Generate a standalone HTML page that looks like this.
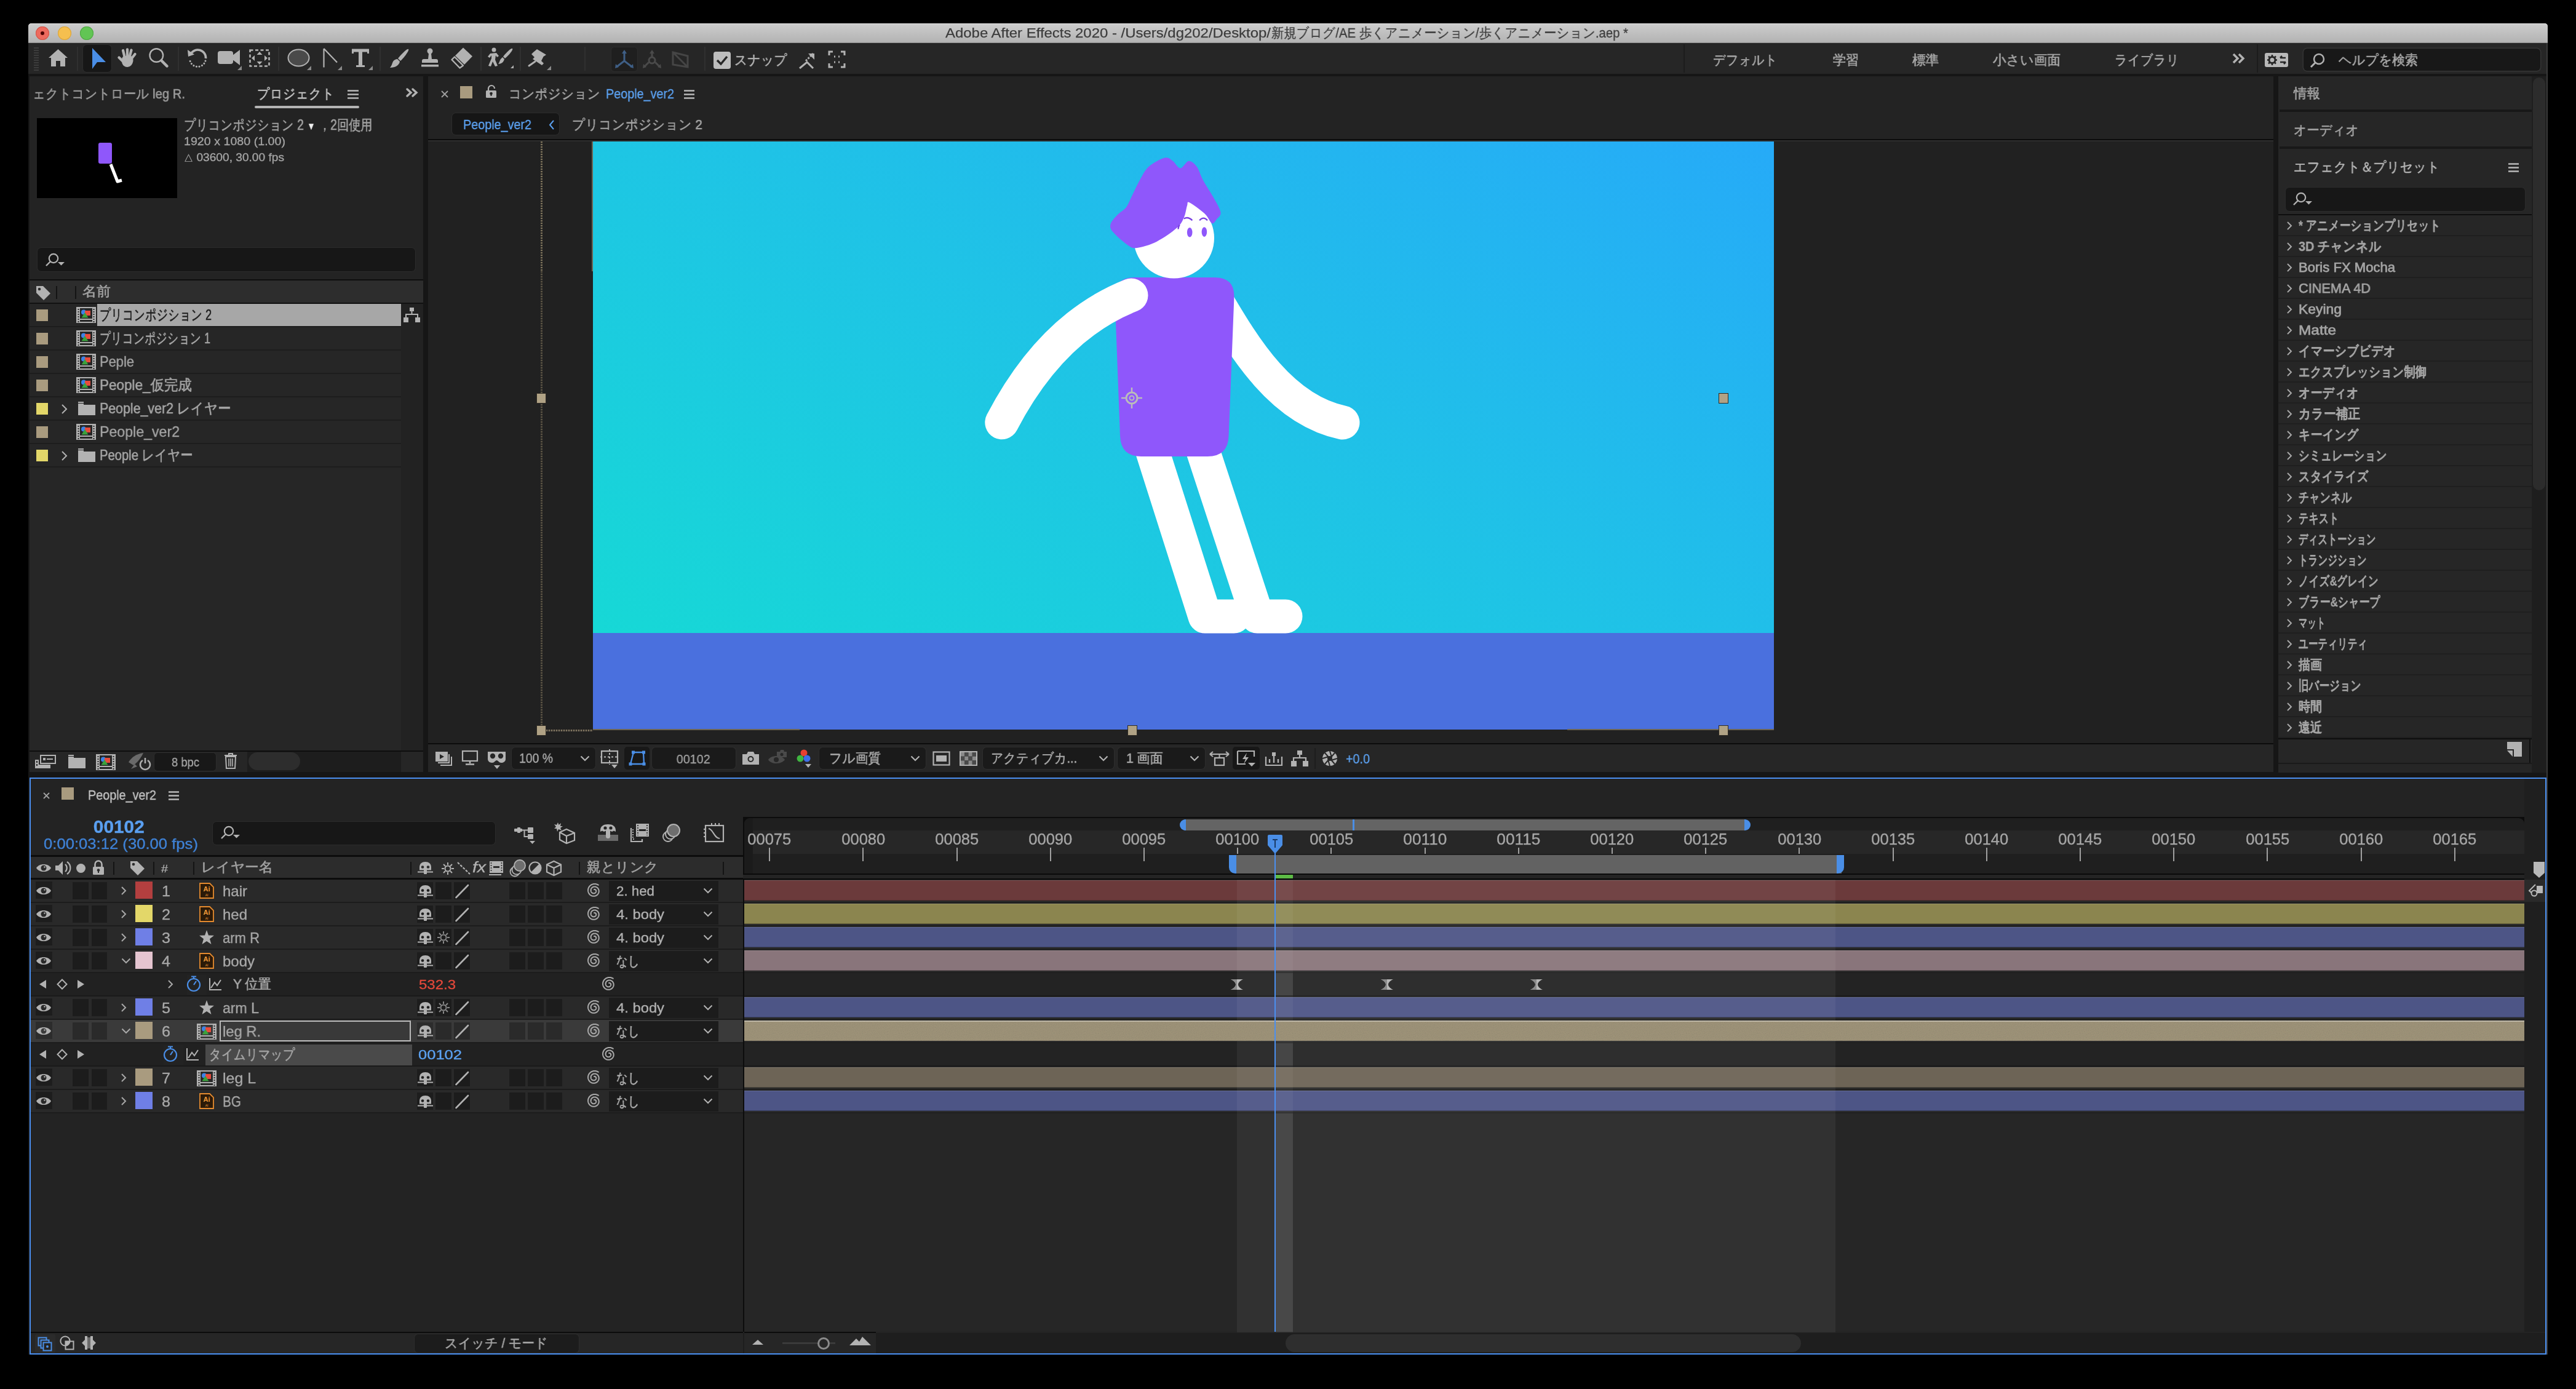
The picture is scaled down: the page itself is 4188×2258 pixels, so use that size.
<!DOCTYPE html>
<html lang="ja"><head><meta charset="utf-8"><title>After Effects</title><style>
html,body{margin:0;padding:0}
body{width:4188px;height:2258px;background:#000;position:relative;overflow:hidden;font-family:"Liberation Sans",sans-serif}
.a{position:absolute}
.t{position:absolute;white-space:nowrap;-webkit-text-stroke:0.35px currentColor;will-change:transform}
svg{overflow:visible}
</style></head><body>
<div class="a" style="left:46px;top:38px;width:4096px;height:2164px;background:#161616;border-radius:5px 5px 0 0;"></div>
<div class="a" style="left:46px;top:38px;width:4096px;height:32px;background:linear-gradient(#cdcdcd,#b2b2b2);border-radius:5px 5px 0 0;box-shadow:inset 0 1px 0 #e2e2e2;"></div>
<div class="a" style="left:46px;top:69px;width:4096px;height:1px;background:#8e8e8e;"></div>
<div class="a" style="left:58px;top:43px;width:22px;height:22px;background:#ed6a5e;border-radius:50%;box-shadow:inset 0 0 0 1px #d25548;"></div>
<div class="a" style="left:94px;top:43px;width:22px;height:22px;background:#f5bf4f;border-radius:50%;box-shadow:inset 0 0 0 1px #d9a43c;"></div>
<div class="a" style="left:130px;top:43px;width:22px;height:22px;background:#62c554;border-radius:50%;box-shadow:inset 0 0 0 1px #50a843;"></div>
<div class="a" style="left:66px;top:51px;width:6px;height:6px;background:#4d0000;border-radius:50%;"></div>
<div class="t" id="t0" style="left:1537.0px;top:43.0px;font-size:22px;line-height:22px;color:#3c3c3c;transform:scaleX(1.0877);transform-origin:left center;-webkit-text-stroke:0.25px currentColor;">Adobe After Effects 2020 - /Users/dg202/Desktop/</div>
<div class="t" id="t1" style="left:2067.0px;top:43.0px;font-size:22px;line-height:22px;color:#3c3c3c;-webkit-text-stroke:0.6px currentColor;transform:scaleX(0.9233);transform-origin:left center;-webkit-text-stroke:0.3px currentColor;">新規ブログ/AE 歩くアニメーション/歩くアニメーション.aep *</div>
<div class="a" style="left:46px;top:70px;width:4096px;height:50px;background:#262626;"></div>
<div class="a" style="left:55px;top:77px;width:8px;height:2px;background:#3c3c3c;"></div>
<div class="a" style="left:55px;top:81px;width:8px;height:2px;background:#3c3c3c;"></div>
<div class="a" style="left:55px;top:85px;width:8px;height:2px;background:#3c3c3c;"></div>
<div class="a" style="left:55px;top:89px;width:8px;height:2px;background:#3c3c3c;"></div>
<div class="a" style="left:55px;top:93px;width:8px;height:2px;background:#3c3c3c;"></div>
<div class="a" style="left:55px;top:97px;width:8px;height:2px;background:#3c3c3c;"></div>
<div class="a" style="left:55px;top:101px;width:8px;height:2px;background:#3c3c3c;"></div>
<div class="a" style="left:55px;top:105px;width:8px;height:2px;background:#3c3c3c;"></div>
<div class="a" style="left:55px;top:109px;width:8px;height:2px;background:#3c3c3c;"></div>
<div class="a" style="left:55px;top:113px;width:8px;height:2px;background:#3c3c3c;"></div>
<svg class="a" style="left:78px;top:79px;" width="33" height="30" viewBox="0 0 33 30"><path d="M16.5 1 L32 15 L28 15 L28 29 L20 29 L20 20 L13 20 L13 29 L5 29 L5 15 L1 15 Z" fill="#b2b2b2"/></svg>
<div class="a" style="left:125px;top:76px;width:2px;height:39px;background:#303030;"></div>
<div class="a" style="left:135px;top:73px;width:46px;height:44px;background:#171717;border-radius:6px;box-shadow:0 0 0 1px #2c2c2c;"></div>
<svg class="a" style="left:148px;top:78px;" width="25" height="34" viewBox="0 0 25 34"><path d="M2 0 L24 23 L10 23 L2 34 Z" fill="#4a8ee6"/></svg>
<svg class="a" style="left:191px;top:78px;" width="33" height="32" viewBox="0 0 33 32"><g stroke="#b2b2b2" stroke-width="4.3" stroke-linecap="round"><path d="M9 22 L2.5 15.5"/><path d="M11.5 14 L9 4"/><path d="M16 13 L16 2.5"/><path d="M20 13 L22.5 3.5"/><path d="M23 17 L28.5 10"/></g><path d="M7 18 Q8 13 12 13 L22 13 Q26 15 25.5 21 Q24 30 16.5 31 Q10 31 7.5 25 Z" fill="#b2b2b2"/></svg>
<svg class="a" style="left:241px;top:78px;" width="34" height="34" viewBox="0 0 34 34"><circle cx="13.3" cy="12" r="10.8" fill="none" stroke="#b2b2b2" stroke-width="2.4"/><path d="M21.5 20.5 L30.5 29.5" stroke="#b2b2b2" stroke-width="4.5" stroke-linecap="round"/></svg>
<div class="a" style="left:289px;top:76px;width:2px;height:39px;background:#303030;"></div>
<svg class="a" style="left:305px;top:78px;" width="34" height="34" viewBox="0 0 34 34"><path d="M5 10 A13 13 0 0 1 29.5 17" fill="none" stroke="#b2b2b2" stroke-width="3.6"/><path d="M0 3 L11 10.5 L1 14 Z" fill="#b2b2b2"/><path d="M29 21 A13 13 0 0 1 4 21" fill="none" stroke="#b2b2b2" stroke-width="3" stroke-dasharray="0.1 4.6" stroke-linecap="round"/></svg>
<svg class="a" style="left:354px;top:78px;" width="40" height="36" viewBox="0 0 40 36"><rect x="0" y="5" width="25" height="21" rx="4" fill="#b2b2b2"/><path d="M24 12 L36 3 V28 L24 19 Z" fill="#b2b2b2"/><path d="M32 36 L39 29 L39 36 Z" fill="#8a8a8a"/></svg>
<svg class="a" style="left:405px;top:80px;" width="34" height="29" viewBox="0 0 34 29"><rect x="1.5" y="1.5" width="31" height="26" fill="none" stroke="#b2b2b2" stroke-width="2.6" stroke-dasharray="5 3.5"/><path d="M17 4 L21.5 9 H12.5 Z M17 25 L21.5 20 H12.5 Z M4 14.5 L9 10 V19 Z M30 14.5 L25 10 V19 Z" fill="#b2b2b2"/></svg>
<div class="a" style="left:452px;top:76px;width:2px;height:39px;background:#303030;"></div>
<svg class="a" style="left:468px;top:78px;" width="40" height="36" viewBox="0 0 40 36"><ellipse cx="17.5" cy="16" rx="17" ry="13.5" fill="#4a4a4a" stroke="#b2b2b2" stroke-width="2"/><path d="M31 36 L38 29 L38 36 Z" fill="#8a8a8a"/></svg>
<svg class="a" style="left:525px;top:78px;" width="33" height="36" viewBox="0 0 33 36"><path d="M1.5 1 V31.5 M1.5 1 L23 23.5" stroke="#b2b2b2" stroke-width="2.2" fill="none"/><path d="M24 36 L31 29 L31 36 Z" fill="#8a8a8a"/></svg>
<svg class="a" style="left:571px;top:78px;" width="36" height="36" viewBox="0 0 36 36"><path d="M1 1.5 H29 V9 H26 V6.5 H18 V28 H22 V31 H8 V28 H12 V6.5 H4 V9 H1 Z" fill="#b2b2b2"/><path d="M28 36 L35 29 L35 36 Z" fill="#8a8a8a"/></svg>
<div class="a" style="left:617px;top:76px;width:2px;height:39px;background:#303030;"></div>
<svg class="a" style="left:633px;top:78px;" width="34" height="34" viewBox="0 0 34 34"><path d="M31 2 C33 4 22 18 18 21 L14 17 C17 13 29 0 31 2 Z" fill="#b2b2b2"/><path d="M13 18 L17 22 C16 28 10 32 1 32 C4 29 4 26 6 22 C8 19 11 18 13 18 Z" fill="#b2b2b2"/></svg>
<svg class="a" style="left:682px;top:78px;" width="34" height="33" viewBox="0 0 34 33"><circle cx="17" cy="5" r="4.5" fill="#b2b2b2"/><path d="M15 9 H19 L20 18 H27 C29 18 30 19 30 21 V24 H4 V21 C4 19 5 18 7 18 H14 Z" fill="#b2b2b2"/><rect x="3" y="27" width="28" height="3.5" fill="#b2b2b2"/></svg>
<svg class="a" style="left:733px;top:77px;" width="36" height="35" viewBox="0 0 36 35"><path d="M20 0.5 L35 14.5 L22 28 L7 13.5 Z" fill="#b2b2b2"/><path d="M6 15.5 L20 29.5 L14.5 33.5 L1.5 20 Z" fill="none" stroke="#b2b2b2" stroke-width="2.4" stroke-linejoin="round"/></svg>
<div class="a" style="left:781px;top:76px;width:2px;height:39px;background:#303030;"></div>
<svg class="a" style="left:793px;top:77px;" width="42" height="35" viewBox="0 0 42 35"><circle cx="10" cy="4" r="3.5" fill="#b2b2b2"/><path d="M4 10 L14 9 L18 14 L15 16 L13 13 L12 20 L16 30 L12 31 L8 23 L5 31 L1 30 L6 18 L6 13 L3 17 L0 15 Z" fill="#b2b2b2"/><path d="M40 2 C42 4 32 15 28 18 L25 15 C28 11 38 0 40 2 Z" fill="#b2b2b2"/><path d="M24 16 L27 19 C26 24 22 27 17 27 C19 25 19 22 21 19 Z" fill="#b2b2b2"/><path d="M37 34 L42 29 L42 34 Z" fill="#b2b2b2"/></svg>
<div class="a" style="left:845px;top:76px;width:2px;height:39px;background:#303030;"></div>
<svg class="a" style="left:857px;top:78px;" width="40" height="36" viewBox="0 0 40 36"><path d="M16 2 L31 11 L26.5 14 L23 21 L27 25 L24 28 L9 18 L12 15 L7 10 L10 7 Z" fill="#b2b2b2"/><path d="M13 22 L3 29" stroke="#b2b2b2" stroke-width="3" stroke-linecap="round"/><path d="M32 36 L39 29 L39 36 Z" fill="#8a8a8a"/></svg>
<div class="a" style="left:950px;top:76px;width:2px;height:39px;background:#303030;"></div>
<div class="a" style="left:994px;top:77px;width:42px;height:39px;background:#1f1f1f;border-radius:5px;box-shadow:0 0 0 1px #2c2c2c;"></div>
<svg class="a" style="left:998px;top:81px;" width="34" height="32" viewBox="0 0 34 32"><path d="M17 2 V18 M17 18 L4 28 M17 18 L30 28" stroke="#3f5f86" stroke-width="3" fill="none"/><path d="M17 0 L21 6 H13 Z M2 30 L3 23 L8 28 Z M32 30 L31 23 L26 28 Z" fill="#3f5f86"/></svg>
<svg class="a" style="left:1043px;top:81px;" width="34" height="32" viewBox="0 0 34 32"><path d="M17 2 V12 M12 20 L4 28 M22 20 L30 28" stroke="#4a4a4a" stroke-width="3" fill="none"/><circle cx="17" cy="17" r="5" fill="none" stroke="#4a4a4a" stroke-width="3"/><path d="M17 0 L21 6 H13 Z M2 30 L3 23 L8 28 Z M32 30 L31 23 L26 28 Z" fill="#4a4a4a"/></svg>
<svg class="a" style="left:1090px;top:81px;" width="32" height="32" viewBox="0 0 32 32"><path d="M4 4 V24 L28 28 V10 Z M4 4 L28 28" stroke="#454545" stroke-width="3" fill="none"/></svg>
<div class="a" style="left:1145px;top:76px;width:2px;height:39px;background:#303030;"></div>
<div class="a" style="left:1160px;top:84px;width:28px;height:28px;background:#bdbdbd;border-radius:4px;"></div>
<svg class="a" style="left:1164px;top:89px;" width="20" height="18" viewBox="0 0 20 18"><path d="M2 9 L8 15 L18 3" stroke="#262626" stroke-width="3.5" fill="none"/></svg>
<div class="t" id="t2" style="left:1194.0px;top:87.0px;font-size:22px;line-height:22px;color:#b4b4b4;-webkit-text-stroke:0.6px currentColor;transform:scaleX(0.9348);transform-origin:left center;">スナップ</div>
<svg class="a" style="left:1298px;top:83px;" width="28" height="30" viewBox="0 0 28 30"><path d="M2 28 L14 18 L24 28" stroke="#b2b2b2" stroke-width="3" fill="none"/><path d="M12 16 L24 4" stroke="#b2b2b2" stroke-width="3" stroke-dasharray="3 2"/><path d="M16 4 H26 V14 Z" fill="#b2b2b2"/></svg>
<svg class="a" style="left:1347px;top:83px;" width="27" height="27" viewBox="0 0 27 27"><path d="M1 7 V1 H7 M20 1 H26 V7 M26 20 V26 H20 M7 26 H1 V20" stroke="#b2b2b2" stroke-width="3" fill="none"/><path d="M9 9 H11 M16 9 H18 M9 18 H11 M16 18 H18" stroke="#b2b2b2" stroke-width="3"/></svg>
<div class="a" style="left:2737px;top:72px;width:2px;height:46px;background:#1c1c1c;"></div>
<div class="t" id="t3" style="left:2785.0px;top:87.0px;font-size:22px;line-height:22px;color:#a8a8a8;-webkit-text-stroke:0.6px currentColor;transform:scaleX(0.9130);transform-origin:left center;">デフォルト</div>
<div class="t" id="t4" style="left:2980.0px;top:87.0px;font-size:22px;line-height:22px;color:#a8a8a8;-webkit-text-stroke:0.6px currentColor;transform:scaleX(0.9545);transform-origin:left center;">学習</div>
<div class="t" id="t5" style="left:3109.0px;top:87.0px;font-size:22px;line-height:22px;color:#a8a8a8;-webkit-text-stroke:0.6px currentColor;transform:scaleX(0.9773);transform-origin:left center;">標準</div>
<div class="t" id="t6" style="left:3240.0px;top:87.0px;font-size:22px;line-height:22px;color:#a8a8a8;-webkit-text-stroke:0.6px currentColor;transform:scaleX(0.9821);transform-origin:left center;">小さい画面</div>
<div class="t" id="t7" style="left:3438.0px;top:87.0px;font-size:22px;line-height:22px;color:#a8a8a8;-webkit-text-stroke:0.6px currentColor;transform:scaleX(0.9130);transform-origin:left center;">ライブラリ</div>
<svg class="a" style="left:3629px;top:86px;" width="21" height="18" viewBox="0 0 21 18"><path d="M2 2 L9 9 L2 16 M11 2 L18 9 L11 16" stroke="#b2b2b2" stroke-width="3.5" fill="none"/></svg>
<div class="a" style="left:3669px;top:72px;width:2px;height:46px;background:#1c1c1c;"></div>
<div class="a" style="left:3682px;top:86px;width:38px;height:23px;background:#b8b8b8;border-radius:3px;"></div>
<svg class="a" style="left:3682px;top:86px;" width="38" height="23" viewBox="0 0 38 23"><circle cx="12" cy="11.5" r="5" fill="none" stroke="#262626" stroke-width="3"/><path d="M12 3 V6 M12 17 V20 M4 11.5 H7 M17 11.5 H20 M6 5.5 L8 7.5 M16 15.5 L18 17.5 M6 17.5 L8 15.5 M16 7.5 L18 5.5" stroke="#262626" stroke-width="2.5"/><path d="M25 8 H34 M25 8 L28 5 M34 15 H25 M34 15 L31 18" stroke="#262626" stroke-width="2.5" fill="none"/></svg>
<div class="a" style="left:3745px;top:79px;width:385px;height:36px;background:#181818;border-radius:6px;box-shadow:0 0 0 1.5px #353535;"></div>
<svg class="a" style="left:3756px;top:86px;" width="24" height="24" viewBox="0 0 24 24"><circle cx="14" cy="10" r="8" fill="none" stroke="#b2b2b2" stroke-width="2.5"/><path d="M8 16 L1 23" stroke="#b2b2b2" stroke-width="3"/></svg>
<div class="t" id="t8" style="left:3802.0px;top:87.0px;font-size:22px;line-height:22px;color:#a8a8a8;-webkit-text-stroke:0.6px currentColor;transform:scaleX(0.9485);transform-origin:left center;">ヘルプを検索</div>
<div class="a" style="left:48px;top:124px;width:640px;height:1131px;background:#232323;"></div>
<div class="t" id="t9" style="left:53.0px;top:142.0px;font-size:22px;line-height:22px;color:#9c9c9c;-webkit-text-stroke:0.6px currentColor;transform:scaleX(0.9199);transform-origin:left center;">ェクトコントロール leg R.</div>
<div class="t" id="t10" style="left:418.0px;top:142.0px;font-size:22px;line-height:22px;color:#c4c4c4;-webkit-text-stroke:0.6px currentColor;transform:scaleX(0.9130);transform-origin:left center;">プロジェクト</div>
<svg class="a" style="left:565px;top:146px;" width="18" height="15" viewBox="0 0 18 15"><path d="M0 1.5 H18 M0 7.5 H18 M0 13.5 H18" stroke="#b8b8b8" stroke-width="2.5"/></svg>
<div class="a" style="left:414px;top:172px;width:170px;height:4px;background:#b4b4b4;border-radius:2px;"></div>
<svg class="a" style="left:660px;top:143px;" width="21" height="15" viewBox="0 0 21 15"><path d="M2 2 L8 7.5 L2 13 M11 2 L17 7.5 L11 13" stroke="#b2b2b2" stroke-width="3.5" fill="none" stroke-linecap="round"/></svg>
<div class="a" style="left:60px;top:192px;width:228px;height:130px;background:#000;"></div>
<div class="a" style="left:160px;top:232px;width:22px;height:34px;background:#8f57fb;border-radius:3px;"></div>
<svg class="a" style="left:170px;top:262px;" width="40" height="40" viewBox="0 0 40 40"><path d="M10 5 L21 33 L28 31" stroke="#fff" stroke-width="5" fill="none" stroke-linejoin="round"/></svg>
<div class="t" id="t11" style="left:299.0px;top:191.5px;font-size:23px;line-height:23px;color:#a2a2a2;-webkit-text-stroke:0.6px currentColor;transform:scaleX(0.8279);transform-origin:left center;">プリコンポジション 2 <span style="color:#f0f0f0;font-size:17px;-webkit-text-stroke:0">▼</span> ，2回使用</div>
<div class="t" id="t12" style="left:299.0px;top:219.5px;font-size:19px;line-height:19px;color:#a4a4a4;transform:scaleX(1.0344);transform-origin:left center;">1920 x 1080 (1.00)</div>
<div class="t" id="t13" style="left:299.0px;top:245.5px;font-size:19px;line-height:19px;color:#a4a4a4;transform:scaleX(1.0071);transform-origin:left center;"><span style="font-size:15px">△</span> 03600, 30.00 fps</div>
<div class="a" style="left:61px;top:403px;width:614px;height:38px;background:#171717;border-radius:6px;box-shadow:0 0 0 1px #2b2b2b;"></div>
<svg class="a" style="left:73px;top:411px;" width="32" height="24" viewBox="0 0 32 24"><circle cx="14" cy="9" r="7.2" fill="none" stroke="#b2b2b2" stroke-width="2.2"/><path d="M9 14 L2 21" stroke="#b2b2b2" stroke-width="2.4"/><path d="M21 15 H32 L26.5 20.5 Z" fill="#b2b2b2"/></svg>
<div class="a" style="left:48px;top:454px;width:640px;height:2px;background:#0e0e0e;"></div>
<div class="a" style="left:48px;top:456px;width:640px;height:36px;background:#2d2d2d;"></div>
<svg class="a" style="left:58px;top:464px;" width="26" height="24" viewBox="0 0 26 24"><path d="M1 1 H12 L24 13 L13 24 L1 12 Z" fill="#b2b2b2"/><circle cx="6" cy="6" r="2.3" fill="#2d2d2d"/></svg>
<div class="a" style="left:91px;top:465px;width:2px;height:21px;background:#141414;"></div>
<div class="a" style="left:122px;top:465px;width:2px;height:21px;background:#141414;"></div>
<div class="t" id="t14" style="left:134.0px;top:463.0px;font-size:22px;line-height:22px;color:#a0a0a0;-webkit-text-stroke:0.6px currentColor;transform:scaleX(1.0455);transform-origin:left center;">名前</div>
<div class="a" style="left:48px;top:492px;width:640px;height:2px;background:#111;"></div>
<div class="a" style="left:48px;top:494px;width:604px;height:726px;background:#262626;"></div>
<div class="a" style="left:48px;top:530px;width:604px;height:2px;background:#1d1d1d;"></div>
<div class="a" style="left:59px;top:503px;width:19px;height:19px;background:#a99b7f;"></div>
<div class="a" style="left:158px;top:494px;width:494px;height:36px;background:#a7a7a7;"></div>
<svg class="a" style="left:124px;top:499px;" width="32" height="26" viewBox="0 0 32 26"><rect x="1" y="1" width="30" height="24" fill="none" stroke="#b2b2b2" stroke-width="2"/><rect x="1" y="1" width="5" height="24" fill="#b2b2b2"/><rect x="26" y="1" width="5" height="24" fill="#b2b2b2"/><rect x="2.5" y="3" width="2" height="2" fill="#2a2a2a"/><rect x="27.5" y="3" width="2" height="2" fill="#2a2a2a"/><rect x="2.5" y="7" width="2" height="2" fill="#2a2a2a"/><rect x="27.5" y="7" width="2" height="2" fill="#2a2a2a"/><rect x="2.5" y="11" width="2" height="2" fill="#2a2a2a"/><rect x="27.5" y="11" width="2" height="2" fill="#2a2a2a"/><rect x="2.5" y="15" width="2" height="2" fill="#2a2a2a"/><rect x="27.5" y="15" width="2" height="2" fill="#2a2a2a"/><rect x="2.5" y="19" width="2" height="2" fill="#2a2a2a"/><rect x="27.5" y="19" width="2" height="2" fill="#2a2a2a"/><rect x="2.5" y="23" width="2" height="2" fill="#2a2a2a"/><rect x="27.5" y="23" width="2" height="2" fill="#2a2a2a"/><rect x="6" y="19" width="20" height="2" fill="#b2b2b2"/><circle cx="12" cy="8.5" r="4" fill="#3d82e6"/><rect x="14" y="6" width="9" height="8" fill="#e84b3c"/><path d="M14 9 L19.5 17.5 H8.5 Z" fill="#3aa23d"/></svg>
<div class="t" id="t15" style="left:162.0px;top:500.0px;font-size:24px;line-height:24px;color:#1d1d1d;-webkit-text-stroke:0.6px currentColor;transform:scaleX(0.7428);transform-origin:left center;">プリコンポジション 2</div>
<div class="a" style="left:48px;top:568px;width:604px;height:2px;background:#1d1d1d;"></div>
<div class="a" style="left:59px;top:541px;width:19px;height:19px;background:#a99b7f;"></div>
<svg class="a" style="left:124px;top:537px;" width="32" height="26" viewBox="0 0 32 26"><rect x="1" y="1" width="30" height="24" fill="none" stroke="#b2b2b2" stroke-width="2"/><rect x="1" y="1" width="5" height="24" fill="#b2b2b2"/><rect x="26" y="1" width="5" height="24" fill="#b2b2b2"/><rect x="2.5" y="3" width="2" height="2" fill="#2a2a2a"/><rect x="27.5" y="3" width="2" height="2" fill="#2a2a2a"/><rect x="2.5" y="7" width="2" height="2" fill="#2a2a2a"/><rect x="27.5" y="7" width="2" height="2" fill="#2a2a2a"/><rect x="2.5" y="11" width="2" height="2" fill="#2a2a2a"/><rect x="27.5" y="11" width="2" height="2" fill="#2a2a2a"/><rect x="2.5" y="15" width="2" height="2" fill="#2a2a2a"/><rect x="27.5" y="15" width="2" height="2" fill="#2a2a2a"/><rect x="2.5" y="19" width="2" height="2" fill="#2a2a2a"/><rect x="27.5" y="19" width="2" height="2" fill="#2a2a2a"/><rect x="2.5" y="23" width="2" height="2" fill="#2a2a2a"/><rect x="27.5" y="23" width="2" height="2" fill="#2a2a2a"/><rect x="6" y="19" width="20" height="2" fill="#b2b2b2"/><circle cx="12" cy="8.5" r="4" fill="#3d82e6"/><rect x="14" y="6" width="9" height="8" fill="#e84b3c"/><path d="M14 9 L19.5 17.5 H8.5 Z" fill="#3aa23d"/></svg>
<div class="t" id="t16" style="left:162.0px;top:538.0px;font-size:24px;line-height:24px;color:#a6a6a6;-webkit-text-stroke:0.6px currentColor;transform:scaleX(0.7346);transform-origin:left center;">プリコンポジション 1</div>
<div class="a" style="left:48px;top:606px;width:604px;height:2px;background:#1d1d1d;"></div>
<div class="a" style="left:59px;top:579px;width:19px;height:19px;background:#a99b7f;"></div>
<svg class="a" style="left:124px;top:575px;" width="32" height="26" viewBox="0 0 32 26"><rect x="1" y="1" width="30" height="24" fill="none" stroke="#b2b2b2" stroke-width="2"/><rect x="1" y="1" width="5" height="24" fill="#b2b2b2"/><rect x="26" y="1" width="5" height="24" fill="#b2b2b2"/><rect x="2.5" y="3" width="2" height="2" fill="#2a2a2a"/><rect x="27.5" y="3" width="2" height="2" fill="#2a2a2a"/><rect x="2.5" y="7" width="2" height="2" fill="#2a2a2a"/><rect x="27.5" y="7" width="2" height="2" fill="#2a2a2a"/><rect x="2.5" y="11" width="2" height="2" fill="#2a2a2a"/><rect x="27.5" y="11" width="2" height="2" fill="#2a2a2a"/><rect x="2.5" y="15" width="2" height="2" fill="#2a2a2a"/><rect x="27.5" y="15" width="2" height="2" fill="#2a2a2a"/><rect x="2.5" y="19" width="2" height="2" fill="#2a2a2a"/><rect x="27.5" y="19" width="2" height="2" fill="#2a2a2a"/><rect x="2.5" y="23" width="2" height="2" fill="#2a2a2a"/><rect x="27.5" y="23" width="2" height="2" fill="#2a2a2a"/><rect x="6" y="19" width="20" height="2" fill="#b2b2b2"/><circle cx="12" cy="8.5" r="4" fill="#3d82e6"/><rect x="14" y="6" width="9" height="8" fill="#e84b3c"/><path d="M14 9 L19.5 17.5 H8.5 Z" fill="#3aa23d"/></svg>
<div class="t" id="t17" style="left:162.0px;top:576.0px;font-size:24px;line-height:24px;color:#a6a6a6;transform:scaleX(0.9122);transform-origin:left center;">Peple</div>
<div class="a" style="left:48px;top:644px;width:604px;height:2px;background:#1d1d1d;"></div>
<div class="a" style="left:59px;top:617px;width:19px;height:19px;background:#a99b7f;"></div>
<svg class="a" style="left:124px;top:613px;" width="32" height="26" viewBox="0 0 32 26"><rect x="1" y="1" width="30" height="24" fill="none" stroke="#b2b2b2" stroke-width="2"/><rect x="1" y="1" width="5" height="24" fill="#b2b2b2"/><rect x="26" y="1" width="5" height="24" fill="#b2b2b2"/><rect x="2.5" y="3" width="2" height="2" fill="#2a2a2a"/><rect x="27.5" y="3" width="2" height="2" fill="#2a2a2a"/><rect x="2.5" y="7" width="2" height="2" fill="#2a2a2a"/><rect x="27.5" y="7" width="2" height="2" fill="#2a2a2a"/><rect x="2.5" y="11" width="2" height="2" fill="#2a2a2a"/><rect x="27.5" y="11" width="2" height="2" fill="#2a2a2a"/><rect x="2.5" y="15" width="2" height="2" fill="#2a2a2a"/><rect x="27.5" y="15" width="2" height="2" fill="#2a2a2a"/><rect x="2.5" y="19" width="2" height="2" fill="#2a2a2a"/><rect x="27.5" y="19" width="2" height="2" fill="#2a2a2a"/><rect x="2.5" y="23" width="2" height="2" fill="#2a2a2a"/><rect x="27.5" y="23" width="2" height="2" fill="#2a2a2a"/><rect x="6" y="19" width="20" height="2" fill="#b2b2b2"/><circle cx="12" cy="8.5" r="4" fill="#3d82e6"/><rect x="14" y="6" width="9" height="8" fill="#e84b3c"/><path d="M14 9 L19.5 17.5 H8.5 Z" fill="#3aa23d"/></svg>
<div class="t" id="t18" style="left:162.0px;top:614.0px;font-size:24px;line-height:24px;color:#a6a6a6;-webkit-text-stroke:0.6px currentColor;transform:scaleX(0.9370);transform-origin:left center;">People_仮完成</div>
<div class="a" style="left:48px;top:682px;width:604px;height:2px;background:#1d1d1d;"></div>
<div class="a" style="left:59px;top:655px;width:19px;height:19px;background:#e3d769;"></div>
<svg class="a" style="left:99px;top:656px;" width="12" height="18" viewBox="0 0 12 18"><path d="M2 2 L9 9 L2 16" stroke="#b2b2b2" stroke-width="2" fill="none"/></svg>
<svg class="a" style="left:126px;top:653px;" width="30" height="22" viewBox="0 0 30 22"><path d="M1 3 H10 V5 H29 V22 H1 Z" fill="#b2b2b2"/><rect x="1" y="0" width="9" height="2" fill="#b2b2b2"/></svg>
<div class="t" id="t19" style="left:162.0px;top:652.0px;font-size:24px;line-height:24px;color:#a6a6a6;-webkit-text-stroke:0.6px currentColor;transform:scaleX(0.8900);transform-origin:left center;">People_ver2 レイヤー</div>
<div class="a" style="left:48px;top:720px;width:604px;height:2px;background:#1d1d1d;"></div>
<div class="a" style="left:59px;top:693px;width:19px;height:19px;background:#a99b7f;"></div>
<svg class="a" style="left:124px;top:689px;" width="32" height="26" viewBox="0 0 32 26"><rect x="1" y="1" width="30" height="24" fill="none" stroke="#b2b2b2" stroke-width="2"/><rect x="1" y="1" width="5" height="24" fill="#b2b2b2"/><rect x="26" y="1" width="5" height="24" fill="#b2b2b2"/><rect x="2.5" y="3" width="2" height="2" fill="#2a2a2a"/><rect x="27.5" y="3" width="2" height="2" fill="#2a2a2a"/><rect x="2.5" y="7" width="2" height="2" fill="#2a2a2a"/><rect x="27.5" y="7" width="2" height="2" fill="#2a2a2a"/><rect x="2.5" y="11" width="2" height="2" fill="#2a2a2a"/><rect x="27.5" y="11" width="2" height="2" fill="#2a2a2a"/><rect x="2.5" y="15" width="2" height="2" fill="#2a2a2a"/><rect x="27.5" y="15" width="2" height="2" fill="#2a2a2a"/><rect x="2.5" y="19" width="2" height="2" fill="#2a2a2a"/><rect x="27.5" y="19" width="2" height="2" fill="#2a2a2a"/><rect x="2.5" y="23" width="2" height="2" fill="#2a2a2a"/><rect x="27.5" y="23" width="2" height="2" fill="#2a2a2a"/><rect x="6" y="19" width="20" height="2" fill="#b2b2b2"/><circle cx="12" cy="8.5" r="4" fill="#3d82e6"/><rect x="14" y="6" width="9" height="8" fill="#e84b3c"/><path d="M14 9 L19.5 17.5 H8.5 Z" fill="#3aa23d"/></svg>
<div class="t" id="t20" style="left:162.0px;top:690.0px;font-size:24px;line-height:24px;color:#a6a6a6;transform:scaleX(0.9646);transform-origin:left center;">People_ver2</div>
<div class="a" style="left:48px;top:758px;width:604px;height:2px;background:#1d1d1d;"></div>
<div class="a" style="left:59px;top:731px;width:19px;height:19px;background:#e3d769;"></div>
<svg class="a" style="left:99px;top:732px;" width="12" height="18" viewBox="0 0 12 18"><path d="M2 2 L9 9 L2 16" stroke="#b2b2b2" stroke-width="2" fill="none"/></svg>
<svg class="a" style="left:126px;top:729px;" width="30" height="22" viewBox="0 0 30 22"><path d="M1 3 H10 V5 H29 V22 H1 Z" fill="#b2b2b2"/><rect x="1" y="0" width="9" height="2" fill="#b2b2b2"/></svg>
<div class="t" id="t21" style="left:162.0px;top:728.0px;font-size:24px;line-height:24px;color:#a6a6a6;-webkit-text-stroke:0.6px currentColor;transform:scaleX(0.8425);transform-origin:left center;">People レイヤー</div>
<svg class="a" style="left:656px;top:500px;" width="27" height="24" viewBox="0 0 27 24"><rect x="10" y="0" width="7" height="6" fill="#b2b2b2"/><path d="M13.5 6 V11 M4 17 V11 H23 V17" stroke="#b2b2b2" stroke-width="2" fill="none"/><rect x="0" y="16" width="8" height="8" fill="#b2b2b2"/><rect x="19" y="16" width="8" height="8" fill="#b2b2b2"/></svg>
<div class="a" style="left:652px;top:494px;width:36px;height:726px;background:#222222;"></div>
<svg class="a" style="left:656px;top:500px;" width="27" height="24" viewBox="0 0 27 24"><rect x="10" y="0" width="7" height="6" fill="#b2b2b2"/><path d="M13.5 6 V11 M4 17 V11 H23 V17" stroke="#b2b2b2" stroke-width="2" fill="none"/><rect x="0" y="16" width="8" height="8" fill="#b2b2b2"/><rect x="19" y="16" width="8" height="8" fill="#b2b2b2"/></svg>
<div class="a" style="left:48px;top:1220px;width:640px;height:2px;background:#0e0e0e;"></div>
<div class="a" style="left:48px;top:1222px;width:640px;height:33px;background:#262626;"></div>
<svg class="a" style="left:56px;top:1227px;" width="35" height="24" viewBox="0 0 35 24"><path d="M1 8 H7 V22 H1 Z M7 16 H26 V22 H7" fill="#b2b2b2"/><rect x="3" y="10" width="2" height="3" fill="#262626"/><rect x="3" y="15" width="2" height="3" fill="#262626"/><rect x="10" y="1" width="24" height="13" fill="none" stroke="#b2b2b2" stroke-width="2"/><rect x="14" y="5" width="4" height="4" fill="#b2b2b2"/><rect x="20" y="6" width="10" height="2" fill="#b2b2b2"/></svg>
<svg class="a" style="left:110px;top:1227px;" width="30" height="22" viewBox="0 0 30 22"><path d="M1 3 H10 V5 H29 V22 H1 Z" fill="#b2b2b2"/><rect x="1" y="0" width="9" height="2" fill="#b2b2b2"/></svg>
<svg class="a" style="left:156px;top:1226px;" width="32" height="26" viewBox="0 0 32 26"><rect x="1" y="1" width="30" height="24" fill="none" stroke="#b2b2b2" stroke-width="2"/><rect x="1" y="1" width="5" height="24" fill="#b2b2b2"/><rect x="26" y="1" width="5" height="24" fill="#b2b2b2"/><rect x="2.5" y="3" width="2" height="2" fill="#2a2a2a"/><rect x="27.5" y="3" width="2" height="2" fill="#2a2a2a"/><rect x="2.5" y="7" width="2" height="2" fill="#2a2a2a"/><rect x="27.5" y="7" width="2" height="2" fill="#2a2a2a"/><rect x="2.5" y="11" width="2" height="2" fill="#2a2a2a"/><rect x="27.5" y="11" width="2" height="2" fill="#2a2a2a"/><rect x="2.5" y="15" width="2" height="2" fill="#2a2a2a"/><rect x="27.5" y="15" width="2" height="2" fill="#2a2a2a"/><rect x="2.5" y="19" width="2" height="2" fill="#2a2a2a"/><rect x="27.5" y="19" width="2" height="2" fill="#2a2a2a"/><rect x="2.5" y="23" width="2" height="2" fill="#2a2a2a"/><rect x="27.5" y="23" width="2" height="2" fill="#2a2a2a"/><rect x="6" y="19" width="20" height="2" fill="#b2b2b2"/><circle cx="12" cy="8.5" r="4" fill="#3d82e6"/><rect x="14" y="6" width="9" height="8" fill="#e84b3c"/><path d="M14 9 L19.5 17.5 H8.5 Z" fill="#3aa23d"/></svg>
<svg class="a" style="left:207px;top:1224px;" width="36" height="28" viewBox="0 0 36 28"><path d="M2 15 C8 6 14 2 26 0 C22 8 18 14 10 20 Z" fill="#6a6a6a"/><path d="M6 26 L12 18 L16 22 Z" fill="#6a6a6a"/><path d="M25 12 A8 8 0 1 0 33 12" fill="none" stroke="#b0b0b0" stroke-width="2.5"/><path d="M29 8 V17" stroke="#b0b0b0" stroke-width="2.5"/></svg>
<div class="a" style="left:251px;top:1224px;width:100px;height:29px;background:#181818;border-radius:5px;box-shadow:0 0 0 1px #2c2c2c;"></div>
<div class="t" id="t22" style="left:276.5px;top:1229.0px;font-size:20px;line-height:20px;color:#a8a8a8;transform:scaleX(0.9195);transform-origin:center center;">8 bpc</div>
<svg class="a" style="left:364px;top:1224px;" width="22" height="26" viewBox="0 0 22 26"><path d="M1 4 H21 M8 4 V1 H14 V4" stroke="#b2b2b2" stroke-width="2" fill="none"/><path d="M3 6 H19 L18 25 H4 Z" fill="none" stroke="#b2b2b2" stroke-width="2"/><path d="M8 9 V22 M11 9 V22 M14 9 V22" stroke="#b2b2b2" stroke-width="1.6"/></svg>
<div class="a" style="left:402px;top:1222px;width:250px;height:33px;background:#1d1d1d;"></div>
<div class="a" style="left:404px;top:1223px;width:84px;height:29px;background:#2d2d2d;border-radius:15px;"></div>
<div class="a" style="left:696px;top:124px;width:3000px;height:1131px;background:#232323;"></div>
<svg class="a" style="left:717px;top:147px;" width="12" height="12" viewBox="0 0 12 12"><path d="M1 1 L11 11 M11 1 L1 11" stroke="#a0a0a0" stroke-width="1.8"/></svg>
<div class="a" style="left:748px;top:140px;width:20px;height:20px;background:#a99b7f;"></div>
<svg class="a" style="left:790px;top:138px;" width="17" height="21" viewBox="0 0 17 21"><path d="M4 9 V6 A5 5 0 0 1 14 6" fill="none" stroke="#b2b2b2" stroke-width="2.2"/><rect x="0" y="9" width="17" height="12" rx="1.5" fill="#b2b2b2"/><circle cx="8.5" cy="14" r="2.3" fill="#232323"/><rect x="7.5" y="14" width="2" height="4" fill="#232323"/></svg>
<div class="t" id="t23" style="left:827.0px;top:142.0px;font-size:22px;line-height:22px;color:#a4a4a4;-webkit-text-stroke:0.6px currentColor;transform:scaleX(0.9255);transform-origin:left center;">コンポジション</div>
<div class="t" id="t24" style="left:985.0px;top:142.0px;font-size:22px;line-height:22px;color:#5ca2f2;transform:scaleX(0.8984);transform-origin:left center;">People_ver2</div>
<svg class="a" style="left:1112px;top:146px;" width="17" height="15" viewBox="0 0 17 15"><path d="M0 1.5 H17 M0 7.5 H17 M0 13.5 H17" stroke="#b8b8b8" stroke-width="2.5"/></svg>
<div class="a" style="left:735px;top:184px;width:174px;height:35px;background:#161616;border-radius:6px;box-shadow:0 0 0 1px #2c2c2c;"></div>
<div class="t" id="t25" style="left:753.0px;top:192.0px;font-size:22px;line-height:22px;color:#5ca2f2;transform:scaleX(0.8984);transform-origin:left center;">People_ver2</div>
<svg class="a" style="left:892px;top:195px;" width="10" height="16" viewBox="0 0 10 16"><path d="M8 1 L2 8 L8 15" stroke="#5ca2f2" stroke-width="2" fill="none"/></svg>
<div class="t" id="t26" style="left:930.0px;top:192.0px;font-size:22px;line-height:22px;color:#a4a4a4;-webkit-text-stroke:0.6px currentColor;transform:scaleX(0.9407);transform-origin:left center;">プリコンポジション 2</div>
<div class="a" style="left:696px;top:226px;width:3000px;height:3px;background:#0c0c0c;"></div>
<div class="a" style="left:696px;top:229px;width:3000px;height:979px;background:#212121;"></div>
<div class="a" style="left:696px;top:228px;width:3000px;height:2px;background:#2e2e2e;"></div>
<div class="a" style="left:964px;top:230px;width:1920px;height:956px;overflow:hidden"><svg class="a" style="left:0;top:-124px" width="1920" height="1080" viewBox="0 0 1920 1080">
<defs>
<linearGradient id="sky" gradientUnits="userSpaceOnUse" x1="498.5" y1="1360.4" x2="1421.5" y2="-280.4">
<stop offset="0" stop-color="#15dcd3"/><stop offset="0.5" stop-color="#1fc3e6"/><stop offset="1" stop-color="#27a7fa"/>
</linearGradient>
</defs>
<rect x="0" y="0" width="1920" height="1080" fill="url(#sky)"/>
<rect x="0" y="923" width="1920" height="157" fill="#4a70de"/>
<g fill="none" stroke="#fff" stroke-linecap="round" stroke-linejoin="round">
<path d="M896 585 L995 896 L1042 896" stroke-width="55"/>
<path d="M978 585 L1080 896 L1126 896" stroke-width="55"/>
<path d="M1010 376 C1060 462 1120 560 1219 581" stroke-width="55"/>
</g>
<path d="M880 345 L1010.7 345 Q1043.7 345 1042.4 378 L1033.6 603 Q1032.3 636 999.3 636 L891.3 636 Q858.3 636 857 603 L848.5 378 Q847.2 345 880 345 Z" fill="#8f57fb"/>
<circle cx="944.5" cy="281" r="65.5" fill="#fff"/>
<path fill="#8f57fb" d="M841.6 258.2 C842.9 253.5 848.8 247.5 853.0 243.0 C857.2 238.5 863.2 236.0 867.0 231.0 C870.8 226.0 872.3 220.3 876.0 213.0 C879.7 205.7 884.4 194.9 889.0 186.9 C893.6 178.9 897.0 170.9 903.8 164.8 C910.6 158.8 923.2 152.1 929.7 150.6 C936.2 149.1 938.5 152.9 942.7 155.7 C946.9 158.5 950.7 167.4 955.0 167.4 C959.3 167.4 964.2 156.1 968.6 155.7 C973.0 155.3 977.7 159.6 981.6 164.8 C985.5 170.0 987.6 178.9 991.9 186.9 C996.2 194.9 1002.8 204.2 1007.5 212.8 C1012.2 221.4 1019.3 232.4 1020.4 238.7 C1021.5 245.0 1016.4 247.4 1014.0 250.4 C1011.6 253.4 1009.5 258.4 1006.2 256.9 C1003.0 255.4 1000.5 246.9 994.5 241.3 C988.5 235.7 974.6 225.4 969.9 223.2 C965.1 221.0 967.5 224.2 966.0 228.3 C964.5 232.4 963.6 241.8 960.8 247.8 C958.0 253.9 956.6 258.1 949.2 264.6 C941.9 271.1 927.5 281.3 916.7 286.7 C905.9 292.1 892.3 296.1 884.3 297.0 C876.3 297.9 875.3 296.2 868.8 291.9 C862.3 287.6 849.9 276.7 845.4 271.1 C840.9 265.5 840.3 262.9 841.6 258.2 Z"/>
<ellipse cx="970.2" cy="271.8" rx="4.3" ry="7.8" fill="#8f57fb"/>
<ellipse cx="993.9" cy="271.1" rx="4.3" ry="7.8" fill="#8f57fb"/>
<path d="M960.8 249.5 Q967.5 245.5 974.4 252.3 M986.1 252.3 Q992.6 245 999 252.3 M953.7 259.4 Q951.5 263 951.5 266.6" stroke="#7a3fe0" stroke-width="2.3" fill="none"/>
<path d="M875 374 Q746 425 664.8 580.8" stroke="#fff" stroke-width="55" stroke-linecap="round" fill="none"/>
<g transform="translate(876,541)"><circle r="9" fill="none" stroke="#bbb" stroke-width="3"/><circle r="3.5" fill="none" stroke="#bbb" stroke-width="2"/><path d="M0 -17 V-9 M0 9 V17 M-17 0 H-9 M9 0 H17" stroke="#bbb" stroke-width="2.5"/></g>
</svg></div>
<div class="a" style="left:879px;top:230px;width:3px;height:211px;background:repeating-linear-gradient(180deg,#7d735c 0 2px,#2e2c28 2px 4px);"></div>
<div class="a" style="left:879px;top:441px;width:3px;height:746px;background:repeating-linear-gradient(180deg,#5a5344 0 2px,#2e2c28 2px 4px);"></div>
<div class="a" style="left:962px;top:230px;width:2px;height:211px;background:#6a6150;"></div>
<div class="a" style="left:880px;top:1186px;width:84px;height:3px;background:repeating-linear-gradient(90deg,#7d735f 0 2px,#3a3630 2px 4px);"></div>
<div class="a" style="left:964px;top:1185px;width:336px;height:2px;background:#6f6652;"></div>
<div class="a" style="left:2548px;top:1185px;width:336px;height:2px;background:#6f6652;"></div>
<div class="a" style="left:873px;top:640px;width:14px;height:15px;background:#b0a285;box-shadow:0 0 0 1px #2f2b24;"></div>
<div class="a" style="left:873px;top:1180px;width:14px;height:15px;background:#b0a285;box-shadow:0 0 0 1px #2f2b24;"></div>
<div class="a" style="left:1834px;top:1180px;width:14px;height:15px;background:#b0a285;box-shadow:0 0 0 1px #2f2b24;"></div>
<div class="a" style="left:2795px;top:640px;width:14px;height:15px;background:#b0a285;box-shadow:0 0 0 1px #2f2b24;"></div>
<div class="a" style="left:2795px;top:1180px;width:14px;height:15px;background:#b0a285;box-shadow:0 0 0 1px #2f2b24;"></div>
<div class="a" style="left:696px;top:1208px;width:3000px;height:2px;background:#0c0c0c;"></div>
<div class="a" style="left:696px;top:1210px;width:3000px;height:45px;background:#262626;"></div>
<svg class="a" style="left:707px;top:1221px;" width="28" height="24" viewBox="0 0 28 24"><rect x="1" y="1" width="20" height="16" fill="#b2b2b2"/><path d="M8 5 L15 9 L8 13 Z" fill="#262626"/><path d="M23 5 V19 H5 M27 9 V23 H9" stroke="#b2b2b2" stroke-width="2" fill="none"/></svg>
<svg class="a" style="left:751px;top:1220px;" width="26" height="24" viewBox="0 0 26 24"><rect x="1" y="1" width="24" height="16" fill="none" stroke="#b2b2b2" stroke-width="2.2"/><path d="M13 17 V21 M6 22.5 H20" stroke="#b2b2b2" stroke-width="2.5"/></svg>
<svg class="a" style="left:791px;top:1220px;" width="33" height="30" viewBox="0 0 33 30"><path d="M2 2 H31 V14 C31 18 27 20 24 20 C20 20 19 16 16.5 16 C14 16 13 20 9 20 C5 20 2 17 2 14 Z" fill="#b2b2b2"/><circle cx="10" cy="9" r="4.2" fill="#262626"/><circle cx="23" cy="9" r="4.2" fill="#262626"/><path d="M17 30 L12 24 H22 Z" fill="#b2b2b2"/></svg>
<div class="a" style="left:832px;top:1215px;width:136px;height:35px;background:#1a1a1a;border-radius:6px;box-shadow:0 0 0 1px #2d2d2d;"></div>
<div class="t" id="t27" style="left:844.0px;top:1221.5px;font-size:22px;line-height:22px;color:#ababab;transform:scaleX(0.8815);transform-origin:left center;">100 %</div>
<svg class="a" style="left:943px;top:1227.5px;" width="16" height="10" viewBox="0 0 16 10"><path d="M1.5 1.5 L8 8 L14.5 1.5" stroke="#b2b2b2" stroke-width="2.2" fill="none"/></svg>
<svg class="a" style="left:976px;top:1218px;" width="32" height="31" viewBox="0 0 32 31"><rect x="2" y="3" width="26" height="19" fill="none" stroke="#b2b2b2" stroke-width="2.2"/><path d="M15 0 V25 M0 12.5 H30" stroke="#b2b2b2" stroke-width="2" stroke-dasharray="3 3"/><path d="M23 31 L18 25 H28 Z" fill="#b2b2b2"/></svg>
<div class="a" style="left:1015px;top:1214px;width:41px;height:37px;background:#181818;border-radius:5px;"></div>
<svg class="a" style="left:1022px;top:1220px;" width="28" height="25" viewBox="0 0 28 25"><path d="M8 3 H24 L25 22 H3 Z" fill="none" stroke="#4a8ee6" stroke-width="2.3"/><rect x="5" y="0.5" width="5" height="5" fill="#4a8ee6"/><rect x="22" y="0.5" width="5" height="5" fill="#4a8ee6"/><rect x="0.5" y="19.5" width="5" height="5" fill="#4a8ee6"/><rect x="22.5" y="19.5" width="5" height="5" fill="#4a8ee6"/></svg>
<div class="a" style="left:1060px;top:1215px;width:136px;height:35px;background:#1a1a1a;border-radius:6px;box-shadow:0 0 0 1px #2d2d2d;"></div>
<div class="t" id="t28" style="left:1097.8px;top:1222.5px;font-size:21px;line-height:21px;color:#a0a0a0;transform:scaleX(0.9417);transform-origin:center center;">00102</div>
<svg class="a" style="left:1206px;top:1222px;" width="29" height="21" viewBox="0 0 29 21"><path d="M1 4 H8 L10 0 H19 L21 4 H28 V21 H1 Z" fill="#b2b2b2"/><circle cx="14.5" cy="12" r="5" fill="#262626"/><circle cx="14.5" cy="12" r="3" fill="#b2b2b2"/></svg>
<svg class="a" style="left:1248px;top:1218px;" width="31" height="27" viewBox="0 0 31 27"><path d="M1 17 C6 9 22 9 28 17 C22 25 6 25 1 17 Z" fill="#4a4a4a"/><circle cx="14" cy="17" r="4" fill="#262626"/><path d="M15 4 H20 L21 1 H26 L27 4 H31 V13 H15 Z" fill="#4a4a4a"/><circle cx="23" cy="8.5" r="2.5" fill="#262626"/></svg>
<svg class="a" style="left:1295px;top:1218px;" width="25" height="30" viewBox="0 0 25 30"><circle cx="12" cy="6" r="5.5" fill="#e8402f"/><circle cx="6" cy="15" r="5.5" fill="#3fb540"/><circle cx="17" cy="15" r="5.5" fill="#3d6ee8"/><path d="M19 30 L14 24 H24 Z" fill="#b2b2b2"/></svg>
<div class="a" style="left:1332px;top:1215px;width:173px;height:35px;background:#1a1a1a;border-radius:6px;box-shadow:0 0 0 1px #2d2d2d;"></div>
<div class="t" id="t29" style="left:1348.0px;top:1221.5px;font-size:22px;line-height:22px;color:#ababab;-webkit-text-stroke:0.6px currentColor;transform:scaleX(0.9333);transform-origin:left center;">フル画質</div>
<svg class="a" style="left:1480px;top:1227.5px;" width="16" height="10" viewBox="0 0 16 10"><path d="M1.5 1.5 L8 8 L14.5 1.5" stroke="#b2b2b2" stroke-width="2.2" fill="none"/></svg>
<svg class="a" style="left:1516px;top:1221px;" width="29" height="24" viewBox="0 0 29 24"><rect x="1.5" y="1.5" width="26" height="21" fill="none" stroke="#b2b2b2" stroke-width="2.2"/><rect x="6" y="7" width="17" height="10" fill="#b2b2b2"/></svg>
<svg class="a" style="left:1560px;top:1221px;" width="29" height="24" viewBox="0 0 29 24"><rect x="1" y="1" width="27" height="22" fill="none" stroke="#b2b2b2" stroke-width="2"/><rect x="2.0" y="2.0" width="6.25" height="6.7" fill="#8a8a8a"/><rect x="8.25" y="2.0" width="6.25" height="6.7" fill="#4a4a4a"/><rect x="14.5" y="2.0" width="6.25" height="6.7" fill="#8a8a8a"/><rect x="20.75" y="2.0" width="6.25" height="6.7" fill="#4a4a4a"/><rect x="2.0" y="8.7" width="6.25" height="6.7" fill="#4a4a4a"/><rect x="8.25" y="8.7" width="6.25" height="6.7" fill="#8a8a8a"/><rect x="14.5" y="8.7" width="6.25" height="6.7" fill="#4a4a4a"/><rect x="20.75" y="8.7" width="6.25" height="6.7" fill="#8a8a8a"/><rect x="2.0" y="15.4" width="6.25" height="6.7" fill="#8a8a8a"/><rect x="8.25" y="15.4" width="6.25" height="6.7" fill="#4a4a4a"/><rect x="14.5" y="15.4" width="6.25" height="6.7" fill="#8a8a8a"/><rect x="20.75" y="15.4" width="6.25" height="6.7" fill="#4a4a4a"/></svg>
<div class="a" style="left:1598px;top:1215px;width:213px;height:35px;background:#1a1a1a;border-radius:6px;box-shadow:0 0 0 1px #2d2d2d;"></div>
<div class="t" id="t30" style="left:1611.0px;top:1221.5px;font-size:22px;line-height:22px;color:#ababab;-webkit-text-stroke:0.6px currentColor;transform:scaleX(0.8955);transform-origin:left center;">アクティブカ...</div>
<svg class="a" style="left:1786px;top:1227.5px;" width="16" height="10" viewBox="0 0 16 10"><path d="M1.5 1.5 L8 8 L14.5 1.5" stroke="#b2b2b2" stroke-width="2.2" fill="none"/></svg>
<div class="a" style="left:1817px;top:1215px;width:142px;height:35px;background:#1a1a1a;border-radius:6px;box-shadow:0 0 0 1px #2d2d2d;"></div>
<div class="t" id="t31" style="left:1831.0px;top:1221.5px;font-size:22px;line-height:22px;color:#ababab;-webkit-text-stroke:0.6px currentColor;transform:scaleX(0.9622);transform-origin:left center;">1 画面</div>
<svg class="a" style="left:1934px;top:1227.5px;" width="16" height="10" viewBox="0 0 16 10"><path d="M1.5 1.5 L8 8 L14.5 1.5" stroke="#b2b2b2" stroke-width="2.2" fill="none"/></svg>
<svg class="a" style="left:1966px;top:1220px;" width="33" height="26" viewBox="0 0 33 26"><path d="M1 6 H32 M1 6 L6 2 M1 6 L6 10 M32 6 L27 2 M32 6 L27 10" stroke="#b2b2b2" stroke-width="2.2" fill="none"/><rect x="9" y="12" width="15" height="12" fill="none" stroke="#b2b2b2" stroke-width="2.2"/><path d="M16.5 6 V12" stroke="#b2b2b2" stroke-width="2"/></svg>
<div class="a" style="left:2004px;top:1214px;width:44px;height:37px;background:#171717;border-radius:5px;"></div>
<svg class="a" style="left:2011px;top:1220px;" width="30" height="26" viewBox="0 0 30 26"><path d="M1 1 H28 V10 M1 1 V22 H14" stroke="#b2b2b2" stroke-width="2.2" fill="none"/><path d="M16 4 L9 14 H14 L11 22 L19 11 H14 Z" fill="#b2b2b2"/><path d="M30 20 L24 26 L18 20 Z" fill="#b2b2b2"/></svg>
<svg class="a" style="left:2057px;top:1222px;" width="28" height="24" viewBox="0 0 28 24"><path d="M1 8 V22 H27 V8" stroke="#b2b2b2" stroke-width="2.2" fill="none"/><rect x="11" y="1" width="6" height="6" fill="#b2b2b2"/><path d="M14 7 V18 M7 12 V18 M21 12 V18" stroke="#b2b2b2" stroke-width="2.4"/></svg>
<svg class="a" style="left:2099px;top:1220px;" width="28" height="27" viewBox="0 0 28 27"><rect x="10" y="0" width="8" height="7" fill="#b2b2b2"/><path d="M14 7 V12 M4 18 V12 H24 V18" stroke="#b2b2b2" stroke-width="2.2" fill="none"/><rect x="0" y="17" width="9" height="9" fill="#b2b2b2"/><rect x="19" y="17" width="9" height="9" fill="#b2b2b2"/></svg>
<div class="a" style="left:2137px;top:1216px;width:2px;height:34px;background:#1d1d1d;"></div>
<svg class="a" style="left:2149px;top:1220px;" width="26" height="26" viewBox="0 0 26 26"><circle cx="13" cy="13" r="12" fill="#b2b2b2"/><path d="M13 1 L16 11 M25 13 L15 16 M13 25 L10 15 M1 13 L11 10 M5 4 L12 12 M21 4 L14 12 M21 22 L14 14 M5 22 L12 14" stroke="#262626" stroke-width="2"/><circle cx="13" cy="13" r="4" fill="#262626"/></svg>
<div class="t" id="t32" style="left:2188.0px;top:1223.0px;font-size:22px;line-height:22px;color:#5ca2f2;transform:scaleX(0.8978);transform-origin:left center;">+0.0</div>
<div class="a" style="left:3704px;top:124px;width:436px;height:1132px;background:#1e1e1e;"></div>
<div class="a" style="left:3704px;top:124px;width:412px;height:54px;background:#262626;"></div>
<div class="t" id="t33" style="left:3729.0px;top:141.0px;font-size:22px;line-height:22px;color:#a4a4a4;-webkit-text-stroke:0.6px currentColor;transform:scaleX(0.9773);transform-origin:left center;">情報</div>
<div class="a" style="left:3704px;top:178px;width:2px;height:4px;background:#262626;"></div>
<div class="a" style="left:3706px;top:178px;width:410px;height:4px;background:#181818;"></div>
<div class="a" style="left:3704px;top:182px;width:412px;height:56px;background:#262626;"></div>
<div class="t" id="t34" style="left:3729.0px;top:201.0px;font-size:22px;line-height:22px;color:#a4a4a4;-webkit-text-stroke:0.6px currentColor;transform:scaleX(0.9298);transform-origin:left center;">オーディオ</div>
<div class="a" style="left:3704px;top:238px;width:2px;height:4px;background:#262626;"></div>
<div class="a" style="left:3706px;top:238px;width:410px;height:4px;background:#181818;"></div>
<div class="a" style="left:3704px;top:242px;width:412px;height:108px;background:#262626;"></div>
<div class="a" style="left:3704px;top:350px;width:412px;height:906px;background:#262626;"></div>
<div class="t" id="t35" style="left:3729.0px;top:261.0px;font-size:22px;line-height:22px;color:#b8b8b8;-webkit-text-stroke:0.6px currentColor;transform:scaleX(0.9444);transform-origin:left center;">エフェクト＆プリセット</div>
<svg class="a" style="left:4078px;top:265px;" width="17" height="15" viewBox="0 0 17 15"><path d="M0 1.5 H17 M0 7.5 H17 M0 13.5 H17" stroke="#b8b8b8" stroke-width="2.5"/></svg>
<div class="a" style="left:3716px;top:305px;width:389px;height:38px;background:#171717;border-radius:6px;box-shadow:0 0 0 1px #2b2b2b;"></div>
<svg class="a" style="left:3727px;top:312px;" width="32" height="24" viewBox="0 0 32 24"><circle cx="14" cy="9" r="7.2" fill="none" stroke="#b2b2b2" stroke-width="2.2"/><path d="M9 14 L2 21" stroke="#b2b2b2" stroke-width="2.4"/><path d="M21 15 H32 L26.5 20.5 Z" fill="#b2b2b2"/></svg>
<div class="a" style="left:3704px;top:348px;width:412px;height:2px;background:#0e0e0e;"></div>
<div class="a" style="left:3704px;top:382px;width:412px;height:2px;background:#1f1f1f;"></div>
<svg class="a" style="left:3717px;top:359px;" width="10" height="16" viewBox="0 0 10 16"><path d="M2 2 L8 8 L2 14" stroke="#a8a8a8" stroke-width="2" fill="none"/></svg>
<div class="t" id="t36" style="left:3737.0px;top:356.0px;font-size:22px;line-height:22px;color:#a4a4a4;font-weight:700;-webkit-text-stroke:0.6px currentColor;transform:scaleX(0.7974);transform-origin:left center;-webkit-text-stroke:0.3px currentColor;">* アニメーションプリセット</div>
<div class="a" style="left:3704px;top:416px;width:412px;height:2px;background:#1f1f1f;"></div>
<svg class="a" style="left:3717px;top:393px;" width="10" height="16" viewBox="0 0 10 16"><path d="M2 2 L8 8 L2 14" stroke="#a8a8a8" stroke-width="2" fill="none"/></svg>
<div class="t" id="t37" style="left:3737.0px;top:390.0px;font-size:22px;line-height:22px;color:#a4a4a4;font-weight:700;-webkit-text-stroke:0.6px currentColor;transform:scaleX(0.9045);transform-origin:left center;-webkit-text-stroke:0.3px currentColor;">3D チャンネル</div>
<div class="a" style="left:3704px;top:450px;width:412px;height:2px;background:#1f1f1f;"></div>
<svg class="a" style="left:3717px;top:427px;" width="10" height="16" viewBox="0 0 10 16"><path d="M2 2 L8 8 L2 14" stroke="#a8a8a8" stroke-width="2" fill="none"/></svg>
<div class="t" id="t38" style="left:3737.0px;top:424.0px;font-size:22px;line-height:22px;color:#a4a4a4;transform:scaleX(1.0032);transform-origin:left center;-webkit-text-stroke:0.75px currentColor;">Boris FX Mocha</div>
<div class="a" style="left:3704px;top:484px;width:412px;height:2px;background:#1f1f1f;"></div>
<svg class="a" style="left:3717px;top:461px;" width="10" height="16" viewBox="0 0 10 16"><path d="M2 2 L8 8 L2 14" stroke="#a8a8a8" stroke-width="2" fill="none"/></svg>
<div class="t" id="t39" style="left:3737.0px;top:458.0px;font-size:22px;line-height:22px;color:#a4a4a4;transform:scaleX(0.9866);transform-origin:left center;-webkit-text-stroke:0.75px currentColor;">CINEMA 4D</div>
<div class="a" style="left:3704px;top:518px;width:412px;height:2px;background:#1f1f1f;"></div>
<svg class="a" style="left:3717px;top:495px;" width="10" height="16" viewBox="0 0 10 16"><path d="M2 2 L8 8 L2 14" stroke="#a8a8a8" stroke-width="2" fill="none"/></svg>
<div class="t" id="t40" style="left:3737.0px;top:492.0px;font-size:22px;line-height:22px;color:#a4a4a4;transform:scaleX(1.0404);transform-origin:left center;-webkit-text-stroke:0.75px currentColor;">Keying</div>
<div class="a" style="left:3704px;top:552px;width:412px;height:2px;background:#1f1f1f;"></div>
<svg class="a" style="left:3717px;top:529px;" width="10" height="16" viewBox="0 0 10 16"><path d="M2 2 L8 8 L2 14" stroke="#a8a8a8" stroke-width="2" fill="none"/></svg>
<div class="t" id="t41" style="left:3737.0px;top:526.0px;font-size:22px;line-height:22px;color:#a4a4a4;transform:scaleX(1.1085);transform-origin:left center;-webkit-text-stroke:0.75px currentColor;">Matte</div>
<div class="a" style="left:3704px;top:586px;width:412px;height:2px;background:#1f1f1f;"></div>
<svg class="a" style="left:3717px;top:563px;" width="10" height="16" viewBox="0 0 10 16"><path d="M2 2 L8 8 L2 14" stroke="#a8a8a8" stroke-width="2" fill="none"/></svg>
<div class="t" id="t42" style="left:3737.0px;top:560.0px;font-size:22px;line-height:22px;color:#a4a4a4;font-weight:700;-webkit-text-stroke:0.6px currentColor;transform:scaleX(0.8634);transform-origin:left center;-webkit-text-stroke:0.3px currentColor;">イマーシブビデオ</div>
<div class="a" style="left:3704px;top:620px;width:412px;height:2px;background:#1f1f1f;"></div>
<svg class="a" style="left:3717px;top:597px;" width="10" height="16" viewBox="0 0 10 16"><path d="M2 2 L8 8 L2 14" stroke="#a8a8a8" stroke-width="2" fill="none"/></svg>
<div class="t" id="t43" style="left:3737.0px;top:594.0px;font-size:22px;line-height:22px;color:#a4a4a4;font-weight:700;-webkit-text-stroke:0.6px currentColor;transform:scaleX(0.8287);transform-origin:left center;-webkit-text-stroke:0.3px currentColor;">エクスプレッション制御</div>
<div class="a" style="left:3704px;top:654px;width:412px;height:2px;background:#1f1f1f;"></div>
<svg class="a" style="left:3717px;top:631px;" width="10" height="16" viewBox="0 0 10 16"><path d="M2 2 L8 8 L2 14" stroke="#a8a8a8" stroke-width="2" fill="none"/></svg>
<div class="t" id="t44" style="left:3737.0px;top:628.0px;font-size:22px;line-height:22px;color:#a4a4a4;font-weight:700;-webkit-text-stroke:0.6px currentColor;transform:scaleX(0.8596);transform-origin:left center;-webkit-text-stroke:0.3px currentColor;">オーディオ</div>
<div class="a" style="left:3704px;top:688px;width:412px;height:2px;background:#1f1f1f;"></div>
<svg class="a" style="left:3717px;top:665px;" width="10" height="16" viewBox="0 0 10 16"><path d="M2 2 L8 8 L2 14" stroke="#a8a8a8" stroke-width="2" fill="none"/></svg>
<div class="t" id="t45" style="left:3737.0px;top:662.0px;font-size:22px;line-height:22px;color:#a4a4a4;font-weight:700;-webkit-text-stroke:0.6px currentColor;transform:scaleX(0.8929);transform-origin:left center;-webkit-text-stroke:0.3px currentColor;">カラー補正</div>
<div class="a" style="left:3704px;top:722px;width:412px;height:2px;background:#1f1f1f;"></div>
<svg class="a" style="left:3717px;top:699px;" width="10" height="16" viewBox="0 0 10 16"><path d="M2 2 L8 8 L2 14" stroke="#a8a8a8" stroke-width="2" fill="none"/></svg>
<div class="t" id="t46" style="left:3737.0px;top:696.0px;font-size:22px;line-height:22px;color:#a4a4a4;font-weight:700;-webkit-text-stroke:0.6px currentColor;transform:scaleX(0.8596);transform-origin:left center;-webkit-text-stroke:0.3px currentColor;">キーイング</div>
<div class="a" style="left:3704px;top:756px;width:412px;height:2px;background:#1f1f1f;"></div>
<svg class="a" style="left:3717px;top:733px;" width="10" height="16" viewBox="0 0 10 16"><path d="M2 2 L8 8 L2 14" stroke="#a8a8a8" stroke-width="2" fill="none"/></svg>
<div class="t" id="t47" style="left:3737.0px;top:730.0px;font-size:22px;line-height:22px;color:#a4a4a4;font-weight:700;-webkit-text-stroke:0.6px currentColor;transform:scaleX(0.7869);transform-origin:left center;-webkit-text-stroke:0.3px currentColor;">シミュレーション</div>
<div class="a" style="left:3704px;top:790px;width:412px;height:2px;background:#1f1f1f;"></div>
<svg class="a" style="left:3717px;top:767px;" width="10" height="16" viewBox="0 0 10 16"><path d="M2 2 L8 8 L2 14" stroke="#a8a8a8" stroke-width="2" fill="none"/></svg>
<div class="t" id="t48" style="left:3737.0px;top:764.0px;font-size:22px;line-height:22px;color:#a4a4a4;font-weight:700;-webkit-text-stroke:0.6px currentColor;transform:scaleX(0.8261);transform-origin:left center;-webkit-text-stroke:0.3px currentColor;">スタイライズ</div>
<div class="a" style="left:3704px;top:824px;width:412px;height:2px;background:#1f1f1f;"></div>
<svg class="a" style="left:3717px;top:801px;" width="10" height="16" viewBox="0 0 10 16"><path d="M2 2 L8 8 L2 14" stroke="#a8a8a8" stroke-width="2" fill="none"/></svg>
<div class="t" id="t49" style="left:3737.0px;top:798.0px;font-size:22px;line-height:22px;color:#a4a4a4;font-weight:700;-webkit-text-stroke:0.6px currentColor;transform:scaleX(0.7565);transform-origin:left center;-webkit-text-stroke:0.3px currentColor;">チャンネル</div>
<div class="a" style="left:3704px;top:858px;width:412px;height:2px;background:#1f1f1f;"></div>
<svg class="a" style="left:3717px;top:835px;" width="10" height="16" viewBox="0 0 10 16"><path d="M2 2 L8 8 L2 14" stroke="#a8a8a8" stroke-width="2" fill="none"/></svg>
<div class="t" id="t50" style="left:3737.0px;top:832.0px;font-size:22px;line-height:22px;color:#a4a4a4;font-weight:700;-webkit-text-stroke:0.6px currentColor;transform:scaleX(0.7174);transform-origin:left center;-webkit-text-stroke:0.3px currentColor;">テキスト</div>
<div class="a" style="left:3704px;top:892px;width:412px;height:2px;background:#1f1f1f;"></div>
<svg class="a" style="left:3717px;top:869px;" width="10" height="16" viewBox="0 0 10 16"><path d="M2 2 L8 8 L2 14" stroke="#a8a8a8" stroke-width="2" fill="none"/></svg>
<div class="t" id="t51" style="left:3737.0px;top:866.0px;font-size:22px;line-height:22px;color:#a4a4a4;font-weight:700;-webkit-text-stroke:0.6px currentColor;transform:scaleX(0.6885);transform-origin:left center;-webkit-text-stroke:0.3px currentColor;">ディストーション</div>
<div class="a" style="left:3704px;top:926px;width:412px;height:2px;background:#1f1f1f;"></div>
<svg class="a" style="left:3717px;top:903px;" width="10" height="16" viewBox="0 0 10 16"><path d="M2 2 L8 8 L2 14" stroke="#a8a8a8" stroke-width="2" fill="none"/></svg>
<div class="t" id="t52" style="left:3737.0px;top:900.0px;font-size:22px;line-height:22px;color:#a4a4a4;font-weight:700;-webkit-text-stroke:0.6px currentColor;transform:scaleX(0.6894);transform-origin:left center;-webkit-text-stroke:0.3px currentColor;">トランジション</div>
<div class="a" style="left:3704px;top:960px;width:412px;height:2px;background:#1f1f1f;"></div>
<svg class="a" style="left:3717px;top:937px;" width="10" height="16" viewBox="0 0 10 16"><path d="M2 2 L8 8 L2 14" stroke="#a8a8a8" stroke-width="2" fill="none"/></svg>
<div class="t" id="t53" style="left:3737.0px;top:934.0px;font-size:22px;line-height:22px;color:#a4a4a4;font-weight:700;-webkit-text-stroke:0.6px currentColor;transform:scaleX(0.7349);transform-origin:left center;-webkit-text-stroke:0.3px currentColor;">ノイズ&グレイン</div>
<div class="a" style="left:3704px;top:994px;width:412px;height:2px;background:#1f1f1f;"></div>
<svg class="a" style="left:3717px;top:971px;" width="10" height="16" viewBox="0 0 10 16"><path d="M2 2 L8 8 L2 14" stroke="#a8a8a8" stroke-width="2" fill="none"/></svg>
<div class="t" id="t54" style="left:3737.0px;top:968.0px;font-size:22px;line-height:22px;color:#a4a4a4;font-weight:700;-webkit-text-stroke:0.6px currentColor;transform:scaleX(0.7605);transform-origin:left center;-webkit-text-stroke:0.3px currentColor;">ブラー&シャープ</div>
<div class="a" style="left:3704px;top:1028px;width:412px;height:2px;background:#1f1f1f;"></div>
<svg class="a" style="left:3717px;top:1005px;" width="10" height="16" viewBox="0 0 10 16"><path d="M2 2 L8 8 L2 14" stroke="#a8a8a8" stroke-width="2" fill="none"/></svg>
<div class="t" id="t55" style="left:3737.0px;top:1002.0px;font-size:22px;line-height:22px;color:#a4a4a4;font-weight:700;-webkit-text-stroke:0.6px currentColor;transform:scaleX(0.6377);transform-origin:left center;-webkit-text-stroke:0.3px currentColor;">マット</div>
<div class="a" style="left:3704px;top:1062px;width:412px;height:2px;background:#1f1f1f;"></div>
<svg class="a" style="left:3717px;top:1039px;" width="10" height="16" viewBox="0 0 10 16"><path d="M2 2 L8 8 L2 14" stroke="#a8a8a8" stroke-width="2" fill="none"/></svg>
<div class="t" id="t56" style="left:3737.0px;top:1036.0px;font-size:22px;line-height:22px;color:#a4a4a4;font-weight:700;-webkit-text-stroke:0.6px currentColor;transform:scaleX(0.7000);transform-origin:left center;-webkit-text-stroke:0.3px currentColor;">ユーティリティ</div>
<div class="a" style="left:3704px;top:1096px;width:412px;height:2px;background:#1f1f1f;"></div>
<svg class="a" style="left:3717px;top:1073px;" width="10" height="16" viewBox="0 0 10 16"><path d="M2 2 L8 8 L2 14" stroke="#a8a8a8" stroke-width="2" fill="none"/></svg>
<div class="t" id="t57" style="left:3737.0px;top:1070.0px;font-size:22px;line-height:22px;color:#a4a4a4;font-weight:700;-webkit-text-stroke:0.6px currentColor;transform:scaleX(0.8636);transform-origin:left center;-webkit-text-stroke:0.3px currentColor;">描画</div>
<div class="a" style="left:3704px;top:1130px;width:412px;height:2px;background:#1f1f1f;"></div>
<svg class="a" style="left:3717px;top:1107px;" width="10" height="16" viewBox="0 0 10 16"><path d="M2 2 L8 8 L2 14" stroke="#a8a8a8" stroke-width="2" fill="none"/></svg>
<div class="t" id="t58" style="left:3737.0px;top:1104.0px;font-size:22px;line-height:22px;color:#a4a4a4;font-weight:700;-webkit-text-stroke:0.6px currentColor;transform:scaleX(0.7500);transform-origin:left center;-webkit-text-stroke:0.3px currentColor;">旧バージョン</div>
<div class="a" style="left:3704px;top:1164px;width:412px;height:2px;background:#1f1f1f;"></div>
<svg class="a" style="left:3717px;top:1141px;" width="10" height="16" viewBox="0 0 10 16"><path d="M2 2 L8 8 L2 14" stroke="#a8a8a8" stroke-width="2" fill="none"/></svg>
<div class="t" id="t59" style="left:3737.0px;top:1138.0px;font-size:22px;line-height:22px;color:#a4a4a4;font-weight:700;-webkit-text-stroke:0.6px currentColor;transform:scaleX(0.8636);transform-origin:left center;-webkit-text-stroke:0.3px currentColor;">時間</div>
<div class="a" style="left:3704px;top:1198px;width:412px;height:2px;background:#1f1f1f;"></div>
<svg class="a" style="left:3717px;top:1175px;" width="10" height="16" viewBox="0 0 10 16"><path d="M2 2 L8 8 L2 14" stroke="#a8a8a8" stroke-width="2" fill="none"/></svg>
<div class="t" id="t60" style="left:3737.0px;top:1172.0px;font-size:22px;line-height:22px;color:#a4a4a4;font-weight:700;-webkit-text-stroke:0.6px currentColor;transform:scaleX(0.8636);transform-origin:left center;-webkit-text-stroke:0.3px currentColor;">遠近</div>
<div class="a" style="left:3704px;top:1200px;width:412px;height:2px;background:#0e0e0e;"></div>
<div class="a" style="left:4112px;top:1200px;width:2px;height:40px;background:#0e0e0e;"></div>
<div class="a" style="left:3704px;top:1240px;width:412px;height:2px;background:#1a1a1a;"></div>
<svg class="a" style="left:4076px;top:1206px;" width="24" height="25" viewBox="0 0 24 25"><path d="M0 0 H24 V24 H11 V12 H0 Z" fill="#b2b2b2"/><path d="M0 14 H9 V24 Z" fill="#b2b2b2"/></svg>
<div class="a" style="left:4118px;top:126px;width:20px;height:671px;background:#2c2c2c;border-radius:10px;"></div>
<div class="a" style="left:48px;top:1264px;width:4092px;height:938px;background:#4a8ff0;"></div>
<div class="a" style="left:50px;top:1266px;width:4088px;height:934px;background:#232323;"></div>
<svg class="a" style="left:70px;top:1288px;" width="11" height="11" viewBox="0 0 11 11"><path d="M1 1 L10 10 M10 1 L1 10" stroke="#a0a0a0" stroke-width="1.8"/></svg>
<div class="a" style="left:100px;top:1280px;width:20px;height:20px;background:#a99b7f;"></div>
<div class="t" id="t61" style="left:143.0px;top:1282.0px;font-size:22px;line-height:22px;color:#c4c4c4;transform:scaleX(0.8984);transform-origin:left center;">People_ver2</div>
<svg class="a" style="left:274px;top:1286px;" width="17" height="15" viewBox="0 0 17 15"><path d="M0 1.5 H17 M0 7.5 H17 M0 13.5 H17" stroke="#b8b8b8" stroke-width="2.5"/></svg>
<div class="t" id="t62" style="left:152.7px;top:1329.5px;font-size:29px;line-height:29px;color:#5a9ff0;font-weight:700;transform:scaleX(1.0291);transform-origin:center center;">00102</div>
<div class="t" id="t63" style="left:71.0px;top:1360.0px;font-size:24px;line-height:24px;color:#3f82d6;transform:scaleX(1.0688);transform-origin:left center;">0:00:03:12 (30.00 fps)</div>
<div class="a" style="left:346px;top:1336px;width:459px;height:37px;background:#171717;border-radius:6px;box-shadow:0 0 0 1px #2b2b2b;"></div>
<svg class="a" style="left:358px;top:1342px;" width="32" height="24" viewBox="0 0 32 24"><circle cx="14" cy="9" r="7.2" fill="none" stroke="#b2b2b2" stroke-width="2.2"/><path d="M9 14 L2 21" stroke="#b2b2b2" stroke-width="2.4"/><path d="M21 15 H32 L26.5 20.5 Z" fill="#b2b2b2"/></svg>
<svg class="a" style="left:836px;top:1342px;" width="35" height="30" viewBox="0 0 35 30"><rect x="0" y="5" width="13" height="5" rx="1" fill="#b2b2b2"/><rect x="5" y="3" width="5" height="9" rx="1" fill="#b2b2b2"/><path d="M13 7.5 H22 M16.5 7.5 V18 H22" stroke="#b2b2b2" stroke-width="2" fill="none"/><rect x="22" y="3" width="9" height="9" rx="1" fill="#b2b2b2"/><rect x="22" y="14" width="9" height="8" rx="1" fill="#b2b2b2"/><path d="M25 25 H34 L29.5 30 Z" fill="#b2b2b2"/></svg>
<svg class="a" style="left:901px;top:1336px;" width="35" height="36" viewBox="0 0 35 36"><path d="M6 1 L7.5 5 L11 2 L10 7 L14 7 L10 10 L12 14 L7 12 L5 16 L4 11 L0 11 L3 8 L0 4 L4 5 Z" fill="#b2b2b2"/><path d="M20 12 L33 18 V30 L20 35 L9 29 V17 Z M9 17 L20 23 L33 18 M20 23 V35" stroke="#b2b2b2" stroke-width="2.2" fill="none"/></svg>
<svg class="a" style="left:972px;top:1339px;" width="33" height="29" viewBox="0 0 33 29"><path d="M4 11 C4 4 9 1 16.5 1 C24 1 29 4 29 11 L29 13 L26 11.5 L23 13 L20 11.5 V15 H13 V11.5 L10 13 L7 11.5 L4 13 Z" fill="#b2b2b2"/><circle cx="12" cy="7" r="2.6" fill="#232323"/><circle cx="21" cy="7" r="2.6" fill="#232323"/><rect x="0" y="18" width="33" height="10" fill="#6a6a6a"/><rect x="13" y="12" width="7" height="12" rx="3.5" fill="#b2b2b2"/></svg>
<svg class="a" style="left:1025px;top:1339px;" width="31" height="30" viewBox="0 0 31 30"><rect x="9" y="0" width="21" height="21" fill="#b2b2b2"/><path d="M12 2 V19 M27 2 V19" stroke="#232323" stroke-width="1.6" stroke-dasharray="2 2"/><rect x="14" y="9" width="11" height="3" fill="#232323"/><path d="M1 7 V29 H19 V25" stroke="#b2b2b2" stroke-width="2.2" fill="none"/><path d="M4 9 V25 H8" stroke="#b2b2b2" stroke-width="2" fill="none" stroke-dasharray="2 2"/></svg>
<svg class="a" style="left:1077px;top:1339px;" width="30" height="30" viewBox="0 0 30 30"><circle cx="9" cy="21" r="8" fill="none" stroke="#b2b2b2" stroke-width="2"/><circle cx="13" cy="17" r="8" fill="#232323" stroke="#b2b2b2" stroke-width="2"/><circle cx="18" cy="11" r="10" fill="#6e6e6e" stroke="#b2b2b2" stroke-width="2"/></svg>
<svg class="a" style="left:1144px;top:1338px;" width="33" height="31" viewBox="0 0 33 31"><rect x="3" y="4" width="29" height="26" fill="none" stroke="#b2b2b2" stroke-width="2.2"/><path d="M8 9 C15 9 17 25 26 25" stroke="#b2b2b2" stroke-width="2.2" fill="none"/><path d="M13 0 V4 M19 0 V4 M25 0 V4 M0 10 H3 M0 16 H3 M0 22 H3" stroke="#b2b2b2" stroke-width="2"/></svg>
<div class="a" style="left:50px;top:1390px;width:1158px;height:3px;background:#0c0c0c;"></div>
<div class="a" style="left:50px;top:1393px;width:1158px;height:34px;background:#2c2c2c;"></div>
<svg class="a" style="left:58px;top:1403px;" width="26" height="16" viewBox="0 0 26 16"><path d="M1 8 C6 0 20 0 25 8 C20 16 6 16 1 8 Z" fill="#b2b2b2"/><circle cx="13" cy="8" r="4.5" fill="#2c2c2c"/><circle cx="14.5" cy="6.5" r="1.2" fill="#b2b2b2"/></svg>
<svg class="a" style="left:89px;top:1399px;" width="27" height="24" viewBox="0 0 27 24"><path d="M1 8 H6 L13 1 V23 L6 16 H1 Z" fill="#b2b2b2"/><path d="M17 6 A8 8 0 0 1 17 18 M20 2 A12 12 0 0 1 20 22" stroke="#b2b2b2" stroke-width="2.2" fill="none"/></svg>
<div class="a" style="left:124px;top:1404px;width:15px;height:15px;background:#b2b2b2;border-radius:50%;"></div>
<svg class="a" style="left:150px;top:1398px;" width="20" height="25" viewBox="0 0 20 25"><path d="M4.5 11 V7 A5.5 5.5 0 0 1 15.5 7 V11" stroke="#b2b2b2" stroke-width="2.6" fill="none"/><rect x="1" y="11" width="18" height="13" rx="1.5" fill="#b2b2b2"/><circle cx="10" cy="16.5" r="2.3" fill="#2c2c2c"/><rect x="9" y="17" width="2" height="4" fill="#2c2c2c"/></svg>
<div class="a" style="left:184px;top:1401px;width:2px;height:21px;background:#141414;"></div>
<svg class="a" style="left:211px;top:1399px;" width="26" height="25" viewBox="0 0 26 25"><path d="M1 1 H12 L24 13 L13 24 L1 12 Z" fill="#b2b2b2"/><circle cx="6" cy="6" r="2.3" fill="#2c2c2c"/></svg>
<div class="a" style="left:249px;top:1401px;width:2px;height:21px;background:#141414;"></div>
<div class="t" id="t64" style="left:262.0px;top:1405.0px;font-size:16px;line-height:16px;color:#a8a8a8;transform:scaleX(1.2351);transform-origin:left center;">#</div>
<div class="a" style="left:314px;top:1401px;width:2px;height:21px;background:#141414;"></div>
<div class="t" id="t65" style="left:327.0px;top:1399.0px;font-size:22px;line-height:22px;color:#a0a0a0;-webkit-text-stroke:0.6px currentColor;transform:scaleX(1.0354);transform-origin:left center;">レイヤー名</div>
<div class="a" style="left:667px;top:1401px;width:2px;height:21px;background:#141414;"></div>
<svg class="a" style="left:678px;top:1398px;" width="26" height="26" viewBox="0 0 26 26"><path d="M4 16.5 V12 C4 6 8 3 13.5 3 C19 3 23 6 23 12 V16.5 Z" fill="#b2b2b2"/><circle cx="9" cy="11.5" r="2.3" fill="#2c2c2c"/><circle cx="18" cy="11.5" r="2.3" fill="#2c2c2c"/><rect x="11" y="15" width="5" height="8" rx="1" fill="#b2b2b2"/><rect x="1" y="18.5" width="25" height="2" fill="#b2b2b2"/></svg>
<svg class="a" style="left:717px;top:1401px;" width="22" height="22" viewBox="0 0 22 22"><circle cx="11" cy="11" r="4.5" fill="none" stroke="#b2b2b2" stroke-width="2"/><path d="M11 1 V5 M11 17 V21 M1 11 H5 M17 11 H21 M4 4 L7 7 M15 15 L18 18 M4 18 L7 15 M15 7 L18 4" stroke="#b2b2b2" stroke-width="2"/></svg>
<svg class="a" style="left:742px;top:1400px;" width="24" height="22" viewBox="0 0 24 22"><path d="M2 2 L22 21" stroke="#b2b2b2" stroke-width="2.2" stroke-dasharray="4 2"/></svg>
<div class="t" id="t66" style="left:768.0px;top:1398.0px;font-size:24px;line-height:24px;color:#b2b2b2;transform:scaleX(1.1782);transform-origin:left center;font-style:italic;">fx</div>
<svg class="a" style="left:795px;top:1399px;" width="24" height="24" viewBox="0 0 24 24"><rect x="1" y="1" width="22" height="19" fill="#b2b2b2"/><path d="M3.5 3 V18 M20.5 3 V18" stroke="#2c2c2c" stroke-width="1.6" stroke-dasharray="2 2"/><rect x="7" y="9" width="10" height="3" fill="#2c2c2c"/><rect x="0" y="22" width="20" height="2" fill="#b2b2b2"/></svg>
<svg class="a" style="left:828px;top:1397px;" width="28" height="28" viewBox="0 0 28 28"><circle cx="9" cy="20" r="7.5" fill="none" stroke="#b2b2b2" stroke-width="1.8"/><circle cx="12" cy="17" r="7.5" fill="#2c2c2c" stroke="#b2b2b2" stroke-width="1.8"/><circle cx="17" cy="10" r="9" fill="#6e6e6e" stroke="#b2b2b2" stroke-width="1.8"/></svg>
<svg class="a" style="left:859px;top:1400px;" width="22" height="22" viewBox="0 0 22 22"><circle cx="11" cy="11" r="9.5" fill="none" stroke="#b2b2b2" stroke-width="2.2"/><path d="M18 4 A9.5 9.5 0 0 1 4 18 Z" fill="#b2b2b2"/></svg>
<svg class="a" style="left:888px;top:1399px;" width="25" height="25" viewBox="0 0 25 25"><path d="M12.5 1 L24 6.5 V18.5 L12.5 24 L1 18.5 V6.5 Z M1 6.5 L12.5 12 L24 6.5 M12.5 12 V24" stroke="#b2b2b2" stroke-width="2.2" fill="none"/></svg>
<div class="a" style="left:941px;top:1401px;width:2px;height:21px;background:#141414;"></div>
<div class="t" id="t67" style="left:954.0px;top:1399.0px;font-size:22px;line-height:22px;color:#a0a0a0;-webkit-text-stroke:0.6px currentColor;transform:scaleX(1.0263);transform-origin:left center;">親とリンク</div>
<div class="a" style="left:1175px;top:1401px;width:2px;height:21px;background:#141414;"></div>
<div class="a" style="left:50px;top:1427px;width:1158px;height:3px;background:#0c0c0c;"></div>
<div class="a" style="left:50px;top:1430px;width:1158px;height:38px;background:#292929;"></div>
<div class="a" style="left:58px;top:1433px;width:27px;height:28px;background:#1d1d1d;"></div>
<div class="a" style="left:50px;top:1466px;width:1158px;height:2px;background:#1c1c1c;"></div>
<svg class="a" style="left:58px;top:1440px;" width="26" height="16" viewBox="0 0 26 16"><path d="M1 8 C6 0 20 0 25 8 C20 16 6 16 1 8 Z" fill="#b2b2b2"/><circle cx="13" cy="8" r="4.5" fill="#292929"/><circle cx="14.5" cy="6.5" r="1.2" fill="#b2b2b2"/></svg>
<div class="a" style="left:118px;top:1434px;width:26px;height:28px;background:#1c1c1c;"></div>
<div class="a" style="left:149px;top:1434px;width:25px;height:28px;background:#1c1c1c;"></div>
<svg class="a" style="left:196px;top:1440px;" width="10" height="16" viewBox="0 0 10 16"><path d="M2 2 L8 8 L2 14" stroke="#a8a8a8" stroke-width="2" fill="none"/></svg>
<div class="a" style="left:220px;top:1433px;width:28px;height:28px;background:#b33f3f;"></div>
<div class="t" id="t68" style="left:263.0px;top:1437.0px;font-size:24px;line-height:24px;color:#a8a8a8;transform:scaleX(1.0480);transform-origin:left center;">1</div>
<svg class="a" style="left:324px;top:1435px;" width="24" height="26" viewBox="0 0 24 26"><path d="M1 1 H17 L23 7 V25 H1 Z" fill="#2b1a08" stroke="#e48a2e" stroke-width="1.8"/><text x="12" y="14" font-size="11" font-family="Liberation Sans" font-weight="700" fill="#f09a3a" text-anchor="middle">Ai</text><text x="12" y="22" font-size="5" font-family="Liberation Sans" fill="#f09a3a" text-anchor="middle">AI</text></svg>
<div class="t" id="t69" style="left:362.0px;top:1437.0px;font-size:24px;line-height:24px;color:#a8a8a8;">hair</div>
<div class="a" style="left:678px;top:1434px;width:26px;height:28px;background:#1d1d1d;"></div>
<svg class="a" style="left:678px;top:1436px;" width="26" height="26" viewBox="0 0 26 26"><path d="M4 16.5 V12 C4 6 8 3 13.5 3 C19 3 23 6 23 12 V16.5 Z" fill="#b2b2b2"/><circle cx="9" cy="11.5" r="2.3" fill="#1d1d1d"/><circle cx="18" cy="11.5" r="2.3" fill="#1d1d1d"/><rect x="11" y="15" width="5" height="8" rx="1" fill="#b2b2b2"/><rect x="1" y="18.5" width="25" height="2" fill="#b2b2b2"/></svg>
<div class="a" style="left:708px;top:1434px;width:26px;height:28px;background:#1c1c1c;"></div>
<div class="a" style="left:738px;top:1434px;width:26px;height:28px;background:#1c1c1c;"></div>
<svg class="a" style="left:739px;top:1437px;" width="24" height="24" viewBox="0 0 24 24"><path d="M2.5 22 L22 2" stroke="#b2b2b2" stroke-width="2.6" stroke-linecap="round"/></svg>
<div class="a" style="left:828px;top:1434px;width:26px;height:28px;background:#1c1c1c;"></div>
<div class="a" style="left:858px;top:1434px;width:26px;height:28px;background:#1c1c1c;"></div>
<div class="a" style="left:888px;top:1434px;width:26px;height:28px;background:#1c1c1c;"></div>
<svg class="a" style="left:954px;top:1436px;" width="24" height="24" viewBox="0 0 24 24"><path d="M11.00 9.00 L11.14 8.96 L11.28 8.92 L11.42 8.90 L11.57 8.89 L11.73 8.88 L11.89 8.89 L12.04 8.91 L12.21 8.95 L12.37 8.99 L12.52 9.05 L12.68 9.12 L12.84 9.20 L12.99 9.29 L13.14 9.40 L13.28 9.52 L13.41 9.65 L13.54 9.79 L13.66 9.95 L13.77 10.11 L13.87 10.28 L13.95 10.47 L14.03 10.66 L14.09 10.86 L14.15 11.06 L14.18 11.28 L14.20 11.49 L14.21 11.72 L14.20 11.94 L14.18 12.17 L14.14 12.39 L14.08 12.62 L14.01 12.85 L13.92 13.07 L13.81 13.29 L13.69 13.50 L13.55 13.71 L13.39 13.91 L13.22 14.10 L13.04 14.28 L12.84 14.45 L12.62 14.61 L12.40 14.75 L12.16 14.88 L11.91 15.00 L11.65 15.10 L11.38 15.18 L11.11 15.24 L10.82 15.29 L10.54 15.31 L10.24 15.32 L9.95 15.31 L9.65 15.27 L9.35 15.22 L9.05 15.14 L8.76 15.05 L8.47 14.93 L8.19 14.79 L7.91 14.63 L7.65 14.46 L7.39 14.26 L7.14 14.04 L6.91 13.81 L6.69 13.55 L6.49 13.28 L6.30 13.00 L6.14 12.70 L5.99 12.39 L5.86 12.06 L5.76 11.72 L5.67 11.38 L5.61 11.03 L5.57 10.67 L5.56 10.30 L5.57 9.93 L5.61 9.56 L5.67 9.19 L5.76 8.83 L5.87 8.46 L6.01 8.10 L6.17 7.75 L6.36 7.41 L6.57 7.08 L6.81 6.76 L7.07 6.46 L7.35 6.17 L7.65 5.90 L7.97 5.64 L8.31 5.41 L8.67 5.20 L9.04 5.01 L9.43 4.85 L9.84 4.71 L10.25 4.60 L10.67 4.52 L11.10 4.47 L11.54 4.44 L11.98 4.44 L12.42 4.47 L12.87 4.54 L13.31 4.63 L13.74 4.75 L14.17 4.91 L14.59 5.09 L15.00 5.30 L15.40 5.54 L15.79 5.81 L16.16 6.11 L16.50 6.43 L16.83 6.78 L17.14 7.15 L17.43 7.54 L17.68 7.95 L17.92 8.38 L18.12 8.83 L18.29 9.30 L18.44 9.78 L18.55 10.27 L18.63 10.77 L18.68 11.28 L18.69 11.79 L18.67 12.31 L18.61 12.82 L18.52 13.34 L18.39 13.85 L18.23 14.35 L18.03 14.85 L17.80 15.33 L17.54 15.80 L17.24 16.25 L16.92 16.69 L16.56 17.10 L16.17 17.49 L15.76 17.86 L15.32 18.20 L14.85 18.52 L14.36 18.80 L13.86 19.05 L13.33 19.27 L12.79 19.45 L12.23 19.60 L11.66 19.71 L11.08 19.78 L10.50 19.81 L9.91 19.81 L9.32 19.76 L8.73 19.68 L8.15 19.55 L7.57 19.39 L7.00 19.19 L6.44 18.95 L5.90 18.67 L5.37 18.35 L4.87 18.00 L4.38 17.61 L3.92 17.19 L3.49 16.73 L3.09 16.25 L2.72 15.74 L2.38 15.20 L2.07 14.64 L1.81 14.05 L1.58 13.45 L1.39 12.83 L1.24 12.19 L1.14 11.55 L1.08 10.89 L1.06 10.23 L1.08 9.57 L1.15 8.90 L1.27 8.24 L1.43 7.59 L1.63 6.94 L1.88 6.31 L2.17 5.69 L2.50 5.09 L2.87 4.51 L3.29 3.95 L3.74 3.42 L4.22 2.92 L4.75 2.45 L5.30 2.01 L5.89 1.61 L6.50 1.25 L7.14 0.93 L7.80 0.65 L8.48 0.42 L9.18 0.23 L9.89 0.08 L10.62 -0.02 L11.35 -0.06 L12.09 -0.06 L12.83 -0.02 L13.56 0.08 L14.29 0.23 L15.02 0.43 L15.73 0.67 L16.42 0.97 L17.10 1.31 L17.76 1.70" transform="translate(1,1)" stroke="#a8a8a8" stroke-width="2.1" fill="none" stroke-linecap="round"/></svg>
<div class="a" style="left:990px;top:1432px;width:178px;height:33px;background:#1c1c1c;"></div>
<div class="t" id="t70" style="left:1002.0px;top:1438.0px;font-size:22px;line-height:22px;color:#b0b0b0;transform:scaleX(1.0135);transform-origin:left center;">2. hed</div>
<svg class="a" style="left:1143px;top:1443px;" width="16" height="10" viewBox="0 0 16 10"><path d="M1.5 1.5 L8 8 L14.5 1.5" stroke="#b2b2b2" stroke-width="2" fill="none"/></svg>
<div class="a" style="left:50px;top:1468px;width:1158px;height:38px;background:#292929;"></div>
<div class="a" style="left:58px;top:1471px;width:27px;height:28px;background:#1d1d1d;"></div>
<div class="a" style="left:50px;top:1504px;width:1158px;height:2px;background:#1c1c1c;"></div>
<svg class="a" style="left:58px;top:1478px;" width="26" height="16" viewBox="0 0 26 16"><path d="M1 8 C6 0 20 0 25 8 C20 16 6 16 1 8 Z" fill="#b2b2b2"/><circle cx="13" cy="8" r="4.5" fill="#292929"/><circle cx="14.5" cy="6.5" r="1.2" fill="#b2b2b2"/></svg>
<div class="a" style="left:118px;top:1472px;width:26px;height:28px;background:#1c1c1c;"></div>
<div class="a" style="left:149px;top:1472px;width:25px;height:28px;background:#1c1c1c;"></div>
<svg class="a" style="left:196px;top:1478px;" width="10" height="16" viewBox="0 0 10 16"><path d="M2 2 L8 8 L2 14" stroke="#a8a8a8" stroke-width="2" fill="none"/></svg>
<div class="a" style="left:220px;top:1471px;width:28px;height:28px;background:#e3d769;"></div>
<div class="t" id="t71" style="left:263.0px;top:1475.0px;font-size:24px;line-height:24px;color:#a8a8a8;transform:scaleX(1.0480);transform-origin:left center;">2</div>
<svg class="a" style="left:324px;top:1473px;" width="24" height="26" viewBox="0 0 24 26"><path d="M1 1 H17 L23 7 V25 H1 Z" fill="#2b1a08" stroke="#e48a2e" stroke-width="1.8"/><text x="12" y="14" font-size="11" font-family="Liberation Sans" font-weight="700" fill="#f09a3a" text-anchor="middle">Ai</text><text x="12" y="22" font-size="5" font-family="Liberation Sans" fill="#f09a3a" text-anchor="middle">AI</text></svg>
<div class="t" id="t72" style="left:362.0px;top:1475.0px;font-size:24px;line-height:24px;color:#a8a8a8;">hed</div>
<div class="a" style="left:678px;top:1472px;width:26px;height:28px;background:#1d1d1d;"></div>
<svg class="a" style="left:678px;top:1474px;" width="26" height="26" viewBox="0 0 26 26"><path d="M4 16.5 V12 C4 6 8 3 13.5 3 C19 3 23 6 23 12 V16.5 Z" fill="#b2b2b2"/><circle cx="9" cy="11.5" r="2.3" fill="#1d1d1d"/><circle cx="18" cy="11.5" r="2.3" fill="#1d1d1d"/><rect x="11" y="15" width="5" height="8" rx="1" fill="#b2b2b2"/><rect x="1" y="18.5" width="25" height="2" fill="#b2b2b2"/></svg>
<div class="a" style="left:708px;top:1472px;width:26px;height:28px;background:#1c1c1c;"></div>
<div class="a" style="left:738px;top:1472px;width:26px;height:28px;background:#1c1c1c;"></div>
<svg class="a" style="left:739px;top:1475px;" width="24" height="24" viewBox="0 0 24 24"><path d="M2.5 22 L22 2" stroke="#b2b2b2" stroke-width="2.6" stroke-linecap="round"/></svg>
<div class="a" style="left:828px;top:1472px;width:26px;height:28px;background:#1c1c1c;"></div>
<div class="a" style="left:858px;top:1472px;width:26px;height:28px;background:#1c1c1c;"></div>
<div class="a" style="left:888px;top:1472px;width:26px;height:28px;background:#1c1c1c;"></div>
<svg class="a" style="left:954px;top:1474px;" width="24" height="24" viewBox="0 0 24 24"><path d="M11.00 9.00 L11.14 8.96 L11.28 8.92 L11.42 8.90 L11.57 8.89 L11.73 8.88 L11.89 8.89 L12.04 8.91 L12.21 8.95 L12.37 8.99 L12.52 9.05 L12.68 9.12 L12.84 9.20 L12.99 9.29 L13.14 9.40 L13.28 9.52 L13.41 9.65 L13.54 9.79 L13.66 9.95 L13.77 10.11 L13.87 10.28 L13.95 10.47 L14.03 10.66 L14.09 10.86 L14.15 11.06 L14.18 11.28 L14.20 11.49 L14.21 11.72 L14.20 11.94 L14.18 12.17 L14.14 12.39 L14.08 12.62 L14.01 12.85 L13.92 13.07 L13.81 13.29 L13.69 13.50 L13.55 13.71 L13.39 13.91 L13.22 14.10 L13.04 14.28 L12.84 14.45 L12.62 14.61 L12.40 14.75 L12.16 14.88 L11.91 15.00 L11.65 15.10 L11.38 15.18 L11.11 15.24 L10.82 15.29 L10.54 15.31 L10.24 15.32 L9.95 15.31 L9.65 15.27 L9.35 15.22 L9.05 15.14 L8.76 15.05 L8.47 14.93 L8.19 14.79 L7.91 14.63 L7.65 14.46 L7.39 14.26 L7.14 14.04 L6.91 13.81 L6.69 13.55 L6.49 13.28 L6.30 13.00 L6.14 12.70 L5.99 12.39 L5.86 12.06 L5.76 11.72 L5.67 11.38 L5.61 11.03 L5.57 10.67 L5.56 10.30 L5.57 9.93 L5.61 9.56 L5.67 9.19 L5.76 8.83 L5.87 8.46 L6.01 8.10 L6.17 7.75 L6.36 7.41 L6.57 7.08 L6.81 6.76 L7.07 6.46 L7.35 6.17 L7.65 5.90 L7.97 5.64 L8.31 5.41 L8.67 5.20 L9.04 5.01 L9.43 4.85 L9.84 4.71 L10.25 4.60 L10.67 4.52 L11.10 4.47 L11.54 4.44 L11.98 4.44 L12.42 4.47 L12.87 4.54 L13.31 4.63 L13.74 4.75 L14.17 4.91 L14.59 5.09 L15.00 5.30 L15.40 5.54 L15.79 5.81 L16.16 6.11 L16.50 6.43 L16.83 6.78 L17.14 7.15 L17.43 7.54 L17.68 7.95 L17.92 8.38 L18.12 8.83 L18.29 9.30 L18.44 9.78 L18.55 10.27 L18.63 10.77 L18.68 11.28 L18.69 11.79 L18.67 12.31 L18.61 12.82 L18.52 13.34 L18.39 13.85 L18.23 14.35 L18.03 14.85 L17.80 15.33 L17.54 15.80 L17.24 16.25 L16.92 16.69 L16.56 17.10 L16.17 17.49 L15.76 17.86 L15.32 18.20 L14.85 18.52 L14.36 18.80 L13.86 19.05 L13.33 19.27 L12.79 19.45 L12.23 19.60 L11.66 19.71 L11.08 19.78 L10.50 19.81 L9.91 19.81 L9.32 19.76 L8.73 19.68 L8.15 19.55 L7.57 19.39 L7.00 19.19 L6.44 18.95 L5.90 18.67 L5.37 18.35 L4.87 18.00 L4.38 17.61 L3.92 17.19 L3.49 16.73 L3.09 16.25 L2.72 15.74 L2.38 15.20 L2.07 14.64 L1.81 14.05 L1.58 13.45 L1.39 12.83 L1.24 12.19 L1.14 11.55 L1.08 10.89 L1.06 10.23 L1.08 9.57 L1.15 8.90 L1.27 8.24 L1.43 7.59 L1.63 6.94 L1.88 6.31 L2.17 5.69 L2.50 5.09 L2.87 4.51 L3.29 3.95 L3.74 3.42 L4.22 2.92 L4.75 2.45 L5.30 2.01 L5.89 1.61 L6.50 1.25 L7.14 0.93 L7.80 0.65 L8.48 0.42 L9.18 0.23 L9.89 0.08 L10.62 -0.02 L11.35 -0.06 L12.09 -0.06 L12.83 -0.02 L13.56 0.08 L14.29 0.23 L15.02 0.43 L15.73 0.67 L16.42 0.97 L17.10 1.31 L17.76 1.70" transform="translate(1,1)" stroke="#a8a8a8" stroke-width="2.1" fill="none" stroke-linecap="round"/></svg>
<div class="a" style="left:990px;top:1470px;width:178px;height:33px;background:#1c1c1c;"></div>
<div class="t" id="t73" style="left:1002.0px;top:1476.0px;font-size:22px;line-height:22px;color:#b0b0b0;transform:scaleX(1.0808);transform-origin:left center;">4. body</div>
<svg class="a" style="left:1143px;top:1481px;" width="16" height="10" viewBox="0 0 16 10"><path d="M1.5 1.5 L8 8 L14.5 1.5" stroke="#b2b2b2" stroke-width="2" fill="none"/></svg>
<div class="a" style="left:50px;top:1506px;width:1158px;height:38px;background:#292929;"></div>
<div class="a" style="left:58px;top:1509px;width:27px;height:28px;background:#1d1d1d;"></div>
<div class="a" style="left:50px;top:1542px;width:1158px;height:2px;background:#1c1c1c;"></div>
<svg class="a" style="left:58px;top:1516px;" width="26" height="16" viewBox="0 0 26 16"><path d="M1 8 C6 0 20 0 25 8 C20 16 6 16 1 8 Z" fill="#b2b2b2"/><circle cx="13" cy="8" r="4.5" fill="#292929"/><circle cx="14.5" cy="6.5" r="1.2" fill="#b2b2b2"/></svg>
<div class="a" style="left:118px;top:1510px;width:26px;height:28px;background:#1c1c1c;"></div>
<div class="a" style="left:149px;top:1510px;width:25px;height:28px;background:#1c1c1c;"></div>
<svg class="a" style="left:196px;top:1516px;" width="10" height="16" viewBox="0 0 10 16"><path d="M2 2 L8 8 L2 14" stroke="#a8a8a8" stroke-width="2" fill="none"/></svg>
<div class="a" style="left:220px;top:1509px;width:28px;height:28px;background:#6f7fe6;"></div>
<div class="t" id="t74" style="left:263.0px;top:1513.0px;font-size:24px;line-height:24px;color:#a8a8a8;transform:scaleX(1.0480);transform-origin:left center;">3</div>
<svg class="a" style="left:324px;top:1512px;" width="24" height="23" viewBox="0 0 24 23"><path d="M12 0 L15 8.5 L24 8.8 L17 14.3 L19.5 23 L12 18 L4.5 23 L7 14.3 L0 8.8 L9 8.5 Z" fill="#b2b2b2"/></svg>
<div class="t" id="t75" style="left:362.0px;top:1513.0px;font-size:24px;line-height:24px;color:#a8a8a8;transform:scaleX(0.9182);transform-origin:left center;">arm R</div>
<div class="a" style="left:678px;top:1510px;width:26px;height:28px;background:#1d1d1d;"></div>
<svg class="a" style="left:678px;top:1512px;" width="26" height="26" viewBox="0 0 26 26"><path d="M4 16.5 V12 C4 6 8 3 13.5 3 C19 3 23 6 23 12 V16.5 Z" fill="#b2b2b2"/><circle cx="9" cy="11.5" r="2.3" fill="#1d1d1d"/><circle cx="18" cy="11.5" r="2.3" fill="#1d1d1d"/><rect x="11" y="15" width="5" height="8" rx="1" fill="#b2b2b2"/><rect x="1" y="18.5" width="25" height="2" fill="#b2b2b2"/></svg>
<div class="a" style="left:708px;top:1510px;width:26px;height:28px;background:#1c1c1c;"></div>
<svg class="a" style="left:710px;top:1513px;" width="22" height="22" viewBox="0 0 22 22"><circle cx="11" cy="11" r="4.5" fill="none" stroke="#888" stroke-width="2"/><path d="M11 1 V5 M11 17 V21 M1 11 H5 M17 11 H21 M4 4 L7 7 M15 15 L18 18 M4 18 L7 15 M15 7 L18 4" stroke="#888" stroke-width="2"/></svg>
<div class="a" style="left:738px;top:1510px;width:26px;height:28px;background:#1c1c1c;"></div>
<svg class="a" style="left:739px;top:1513px;" width="24" height="24" viewBox="0 0 24 24"><path d="M2.5 22 L22 2" stroke="#b2b2b2" stroke-width="2.6" stroke-linecap="round"/></svg>
<div class="a" style="left:828px;top:1510px;width:26px;height:28px;background:#1c1c1c;"></div>
<div class="a" style="left:858px;top:1510px;width:26px;height:28px;background:#1c1c1c;"></div>
<div class="a" style="left:888px;top:1510px;width:26px;height:28px;background:#1c1c1c;"></div>
<svg class="a" style="left:954px;top:1512px;" width="24" height="24" viewBox="0 0 24 24"><path d="M11.00 9.00 L11.14 8.96 L11.28 8.92 L11.42 8.90 L11.57 8.89 L11.73 8.88 L11.89 8.89 L12.04 8.91 L12.21 8.95 L12.37 8.99 L12.52 9.05 L12.68 9.12 L12.84 9.20 L12.99 9.29 L13.14 9.40 L13.28 9.52 L13.41 9.65 L13.54 9.79 L13.66 9.95 L13.77 10.11 L13.87 10.28 L13.95 10.47 L14.03 10.66 L14.09 10.86 L14.15 11.06 L14.18 11.28 L14.20 11.49 L14.21 11.72 L14.20 11.94 L14.18 12.17 L14.14 12.39 L14.08 12.62 L14.01 12.85 L13.92 13.07 L13.81 13.29 L13.69 13.50 L13.55 13.71 L13.39 13.91 L13.22 14.10 L13.04 14.28 L12.84 14.45 L12.62 14.61 L12.40 14.75 L12.16 14.88 L11.91 15.00 L11.65 15.10 L11.38 15.18 L11.11 15.24 L10.82 15.29 L10.54 15.31 L10.24 15.32 L9.95 15.31 L9.65 15.27 L9.35 15.22 L9.05 15.14 L8.76 15.05 L8.47 14.93 L8.19 14.79 L7.91 14.63 L7.65 14.46 L7.39 14.26 L7.14 14.04 L6.91 13.81 L6.69 13.55 L6.49 13.28 L6.30 13.00 L6.14 12.70 L5.99 12.39 L5.86 12.06 L5.76 11.72 L5.67 11.38 L5.61 11.03 L5.57 10.67 L5.56 10.30 L5.57 9.93 L5.61 9.56 L5.67 9.19 L5.76 8.83 L5.87 8.46 L6.01 8.10 L6.17 7.75 L6.36 7.41 L6.57 7.08 L6.81 6.76 L7.07 6.46 L7.35 6.17 L7.65 5.90 L7.97 5.64 L8.31 5.41 L8.67 5.20 L9.04 5.01 L9.43 4.85 L9.84 4.71 L10.25 4.60 L10.67 4.52 L11.10 4.47 L11.54 4.44 L11.98 4.44 L12.42 4.47 L12.87 4.54 L13.31 4.63 L13.74 4.75 L14.17 4.91 L14.59 5.09 L15.00 5.30 L15.40 5.54 L15.79 5.81 L16.16 6.11 L16.50 6.43 L16.83 6.78 L17.14 7.15 L17.43 7.54 L17.68 7.95 L17.92 8.38 L18.12 8.83 L18.29 9.30 L18.44 9.78 L18.55 10.27 L18.63 10.77 L18.68 11.28 L18.69 11.79 L18.67 12.31 L18.61 12.82 L18.52 13.34 L18.39 13.85 L18.23 14.35 L18.03 14.85 L17.80 15.33 L17.54 15.80 L17.24 16.25 L16.92 16.69 L16.56 17.10 L16.17 17.49 L15.76 17.86 L15.32 18.20 L14.85 18.52 L14.36 18.80 L13.86 19.05 L13.33 19.27 L12.79 19.45 L12.23 19.60 L11.66 19.71 L11.08 19.78 L10.50 19.81 L9.91 19.81 L9.32 19.76 L8.73 19.68 L8.15 19.55 L7.57 19.39 L7.00 19.19 L6.44 18.95 L5.90 18.67 L5.37 18.35 L4.87 18.00 L4.38 17.61 L3.92 17.19 L3.49 16.73 L3.09 16.25 L2.72 15.74 L2.38 15.20 L2.07 14.64 L1.81 14.05 L1.58 13.45 L1.39 12.83 L1.24 12.19 L1.14 11.55 L1.08 10.89 L1.06 10.23 L1.08 9.57 L1.15 8.90 L1.27 8.24 L1.43 7.59 L1.63 6.94 L1.88 6.31 L2.17 5.69 L2.50 5.09 L2.87 4.51 L3.29 3.95 L3.74 3.42 L4.22 2.92 L4.75 2.45 L5.30 2.01 L5.89 1.61 L6.50 1.25 L7.14 0.93 L7.80 0.65 L8.48 0.42 L9.18 0.23 L9.89 0.08 L10.62 -0.02 L11.35 -0.06 L12.09 -0.06 L12.83 -0.02 L13.56 0.08 L14.29 0.23 L15.02 0.43 L15.73 0.67 L16.42 0.97 L17.10 1.31 L17.76 1.70" transform="translate(1,1)" stroke="#a8a8a8" stroke-width="2.1" fill="none" stroke-linecap="round"/></svg>
<div class="a" style="left:990px;top:1508px;width:178px;height:33px;background:#1c1c1c;"></div>
<div class="t" id="t76" style="left:1002.0px;top:1514.0px;font-size:22px;line-height:22px;color:#b0b0b0;transform:scaleX(1.0808);transform-origin:left center;">4. body</div>
<svg class="a" style="left:1143px;top:1519px;" width="16" height="10" viewBox="0 0 16 10"><path d="M1.5 1.5 L8 8 L14.5 1.5" stroke="#b2b2b2" stroke-width="2" fill="none"/></svg>
<div class="a" style="left:50px;top:1544px;width:1158px;height:38px;background:#292929;"></div>
<div class="a" style="left:58px;top:1547px;width:27px;height:28px;background:#1d1d1d;"></div>
<div class="a" style="left:50px;top:1580px;width:1158px;height:2px;background:#1c1c1c;"></div>
<svg class="a" style="left:58px;top:1554px;" width="26" height="16" viewBox="0 0 26 16"><path d="M1 8 C6 0 20 0 25 8 C20 16 6 16 1 8 Z" fill="#b2b2b2"/><circle cx="13" cy="8" r="4.5" fill="#292929"/><circle cx="14.5" cy="6.5" r="1.2" fill="#b2b2b2"/></svg>
<div class="a" style="left:118px;top:1548px;width:26px;height:28px;background:#1c1c1c;"></div>
<div class="a" style="left:149px;top:1548px;width:25px;height:28px;background:#1c1c1c;"></div>
<svg class="a" style="left:197px;top:1557px;" width="16" height="10" viewBox="0 0 16 10"><path d="M1.5 1.5 L8 8 L14.5 1.5" stroke="#a8a8a8" stroke-width="2" fill="none"/></svg>
<div class="a" style="left:220px;top:1547px;width:28px;height:28px;background:#e5c5d0;"></div>
<div class="t" id="t77" style="left:263.0px;top:1551.0px;font-size:24px;line-height:24px;color:#a8a8a8;transform:scaleX(1.0480);transform-origin:left center;">4</div>
<svg class="a" style="left:324px;top:1549px;" width="24" height="26" viewBox="0 0 24 26"><path d="M1 1 H17 L23 7 V25 H1 Z" fill="#2b1a08" stroke="#e48a2e" stroke-width="1.8"/><text x="12" y="14" font-size="11" font-family="Liberation Sans" font-weight="700" fill="#f09a3a" text-anchor="middle">Ai</text><text x="12" y="22" font-size="5" font-family="Liberation Sans" fill="#f09a3a" text-anchor="middle">AI</text></svg>
<div class="t" id="t78" style="left:362.0px;top:1551.0px;font-size:24px;line-height:24px;color:#a8a8a8;">body</div>
<div class="a" style="left:678px;top:1548px;width:26px;height:28px;background:#1d1d1d;"></div>
<svg class="a" style="left:678px;top:1550px;" width="26" height="26" viewBox="0 0 26 26"><path d="M4 16.5 V12 C4 6 8 3 13.5 3 C19 3 23 6 23 12 V16.5 Z" fill="#b2b2b2"/><circle cx="9" cy="11.5" r="2.3" fill="#1d1d1d"/><circle cx="18" cy="11.5" r="2.3" fill="#1d1d1d"/><rect x="11" y="15" width="5" height="8" rx="1" fill="#b2b2b2"/><rect x="1" y="18.5" width="25" height="2" fill="#b2b2b2"/></svg>
<div class="a" style="left:708px;top:1548px;width:26px;height:28px;background:#1c1c1c;"></div>
<div class="a" style="left:738px;top:1548px;width:26px;height:28px;background:#1c1c1c;"></div>
<svg class="a" style="left:739px;top:1551px;" width="24" height="24" viewBox="0 0 24 24"><path d="M2.5 22 L22 2" stroke="#b2b2b2" stroke-width="2.6" stroke-linecap="round"/></svg>
<div class="a" style="left:828px;top:1548px;width:26px;height:28px;background:#1c1c1c;"></div>
<div class="a" style="left:858px;top:1548px;width:26px;height:28px;background:#1c1c1c;"></div>
<div class="a" style="left:888px;top:1548px;width:26px;height:28px;background:#1c1c1c;"></div>
<svg class="a" style="left:954px;top:1550px;" width="24" height="24" viewBox="0 0 24 24"><path d="M11.00 9.00 L11.14 8.96 L11.28 8.92 L11.42 8.90 L11.57 8.89 L11.73 8.88 L11.89 8.89 L12.04 8.91 L12.21 8.95 L12.37 8.99 L12.52 9.05 L12.68 9.12 L12.84 9.20 L12.99 9.29 L13.14 9.40 L13.28 9.52 L13.41 9.65 L13.54 9.79 L13.66 9.95 L13.77 10.11 L13.87 10.28 L13.95 10.47 L14.03 10.66 L14.09 10.86 L14.15 11.06 L14.18 11.28 L14.20 11.49 L14.21 11.72 L14.20 11.94 L14.18 12.17 L14.14 12.39 L14.08 12.62 L14.01 12.85 L13.92 13.07 L13.81 13.29 L13.69 13.50 L13.55 13.71 L13.39 13.91 L13.22 14.10 L13.04 14.28 L12.84 14.45 L12.62 14.61 L12.40 14.75 L12.16 14.88 L11.91 15.00 L11.65 15.10 L11.38 15.18 L11.11 15.24 L10.82 15.29 L10.54 15.31 L10.24 15.32 L9.95 15.31 L9.65 15.27 L9.35 15.22 L9.05 15.14 L8.76 15.05 L8.47 14.93 L8.19 14.79 L7.91 14.63 L7.65 14.46 L7.39 14.26 L7.14 14.04 L6.91 13.81 L6.69 13.55 L6.49 13.28 L6.30 13.00 L6.14 12.70 L5.99 12.39 L5.86 12.06 L5.76 11.72 L5.67 11.38 L5.61 11.03 L5.57 10.67 L5.56 10.30 L5.57 9.93 L5.61 9.56 L5.67 9.19 L5.76 8.83 L5.87 8.46 L6.01 8.10 L6.17 7.75 L6.36 7.41 L6.57 7.08 L6.81 6.76 L7.07 6.46 L7.35 6.17 L7.65 5.90 L7.97 5.64 L8.31 5.41 L8.67 5.20 L9.04 5.01 L9.43 4.85 L9.84 4.71 L10.25 4.60 L10.67 4.52 L11.10 4.47 L11.54 4.44 L11.98 4.44 L12.42 4.47 L12.87 4.54 L13.31 4.63 L13.74 4.75 L14.17 4.91 L14.59 5.09 L15.00 5.30 L15.40 5.54 L15.79 5.81 L16.16 6.11 L16.50 6.43 L16.83 6.78 L17.14 7.15 L17.43 7.54 L17.68 7.95 L17.92 8.38 L18.12 8.83 L18.29 9.30 L18.44 9.78 L18.55 10.27 L18.63 10.77 L18.68 11.28 L18.69 11.79 L18.67 12.31 L18.61 12.82 L18.52 13.34 L18.39 13.85 L18.23 14.35 L18.03 14.85 L17.80 15.33 L17.54 15.80 L17.24 16.25 L16.92 16.69 L16.56 17.10 L16.17 17.49 L15.76 17.86 L15.32 18.20 L14.85 18.52 L14.36 18.80 L13.86 19.05 L13.33 19.27 L12.79 19.45 L12.23 19.60 L11.66 19.71 L11.08 19.78 L10.50 19.81 L9.91 19.81 L9.32 19.76 L8.73 19.68 L8.15 19.55 L7.57 19.39 L7.00 19.19 L6.44 18.95 L5.90 18.67 L5.37 18.35 L4.87 18.00 L4.38 17.61 L3.92 17.19 L3.49 16.73 L3.09 16.25 L2.72 15.74 L2.38 15.20 L2.07 14.64 L1.81 14.05 L1.58 13.45 L1.39 12.83 L1.24 12.19 L1.14 11.55 L1.08 10.89 L1.06 10.23 L1.08 9.57 L1.15 8.90 L1.27 8.24 L1.43 7.59 L1.63 6.94 L1.88 6.31 L2.17 5.69 L2.50 5.09 L2.87 4.51 L3.29 3.95 L3.74 3.42 L4.22 2.92 L4.75 2.45 L5.30 2.01 L5.89 1.61 L6.50 1.25 L7.14 0.93 L7.80 0.65 L8.48 0.42 L9.18 0.23 L9.89 0.08 L10.62 -0.02 L11.35 -0.06 L12.09 -0.06 L12.83 -0.02 L13.56 0.08 L14.29 0.23 L15.02 0.43 L15.73 0.67 L16.42 0.97 L17.10 1.31 L17.76 1.70" transform="translate(1,1)" stroke="#a8a8a8" stroke-width="2.1" fill="none" stroke-linecap="round"/></svg>
<div class="a" style="left:990px;top:1546px;width:178px;height:33px;background:#1c1c1c;"></div>
<div class="t" id="t79" style="left:1002.0px;top:1552.0px;font-size:22px;line-height:22px;color:#b0b0b0;-webkit-text-stroke:0.6px currentColor;transform:scaleX(0.8261);transform-origin:left center;">なし</div>
<svg class="a" style="left:1143px;top:1557px;" width="16" height="10" viewBox="0 0 16 10"><path d="M1.5 1.5 L8 8 L14.5 1.5" stroke="#b2b2b2" stroke-width="2" fill="none"/></svg>
<div class="a" style="left:50px;top:1582px;width:1158px;height:38px;background:#212121;"></div>
<div class="a" style="left:50px;top:1618px;width:1158px;height:2px;background:#1a1a1a;"></div>
<svg class="a" style="left:62px;top:1592px;" width="14" height="16" viewBox="0 0 14 16"><path d="M13 1 L2 8 L13 15 Z" fill="#b2b2b2"/></svg>
<svg class="a" style="left:92px;top:1591px;" width="18" height="18" viewBox="0 0 18 18"><path d="M9 1.5 L16.5 9 L9 16.5 L1.5 9 Z" fill="none" stroke="#b2b2b2" stroke-width="2"/></svg>
<svg class="a" style="left:125px;top:1592px;" width="14" height="16" viewBox="0 0 14 16"><path d="M1 1 L12 8 L1 15 Z" fill="#b2b2b2"/></svg>
<svg class="a" style="left:272px;top:1592px;" width="10" height="16" viewBox="0 0 10 16"><path d="M2 2 L8 8 L2 14" stroke="#a8a8a8" stroke-width="2" fill="none"/></svg>
<div class="a" style="left:304px;top:1585px;width:32px;height:32px;background:#232323;"></div>
<svg class="a" style="left:303px;top:1586px;" width="24" height="26" viewBox="0 0 24 26"><circle cx="12" cy="15" r="10" fill="none" stroke="#4a8ee6" stroke-width="2.2"/><path d="M8 1.5 H16 M12 2 V5 M12 15 L16 9" stroke="#4a8ee6" stroke-width="2.2"/></svg>
<svg class="a" style="left:339px;top:1589px;" width="22" height="22" viewBox="0 0 22 22"><path d="M2 1 V20 H21" stroke="#b2b2b2" stroke-width="2" fill="none"/><path d="M4 17 L10 8 L14 13 L20 4" stroke="#b2b2b2" stroke-width="2" fill="none"/></svg>
<div class="t" id="t80" style="left:379.0px;top:1589.0px;font-size:22px;line-height:22px;color:#a8a8a8;-webkit-text-stroke:0.6px currentColor;transform:scaleX(0.9629);transform-origin:left center;">Y 位置</div>
<div class="t" id="t81" style="left:681.0px;top:1590.0px;font-size:22px;line-height:22px;color:#e0483a;transform:scaleX(1.0897);transform-origin:left center;">532.3</div>
<svg class="a" style="left:978px;top:1588px;" width="24" height="24" viewBox="0 0 24 24"><path d="M11.00 9.00 L11.14 8.96 L11.28 8.92 L11.42 8.90 L11.57 8.89 L11.73 8.88 L11.89 8.89 L12.04 8.91 L12.21 8.95 L12.37 8.99 L12.52 9.05 L12.68 9.12 L12.84 9.20 L12.99 9.29 L13.14 9.40 L13.28 9.52 L13.41 9.65 L13.54 9.79 L13.66 9.95 L13.77 10.11 L13.87 10.28 L13.95 10.47 L14.03 10.66 L14.09 10.86 L14.15 11.06 L14.18 11.28 L14.20 11.49 L14.21 11.72 L14.20 11.94 L14.18 12.17 L14.14 12.39 L14.08 12.62 L14.01 12.85 L13.92 13.07 L13.81 13.29 L13.69 13.50 L13.55 13.71 L13.39 13.91 L13.22 14.10 L13.04 14.28 L12.84 14.45 L12.62 14.61 L12.40 14.75 L12.16 14.88 L11.91 15.00 L11.65 15.10 L11.38 15.18 L11.11 15.24 L10.82 15.29 L10.54 15.31 L10.24 15.32 L9.95 15.31 L9.65 15.27 L9.35 15.22 L9.05 15.14 L8.76 15.05 L8.47 14.93 L8.19 14.79 L7.91 14.63 L7.65 14.46 L7.39 14.26 L7.14 14.04 L6.91 13.81 L6.69 13.55 L6.49 13.28 L6.30 13.00 L6.14 12.70 L5.99 12.39 L5.86 12.06 L5.76 11.72 L5.67 11.38 L5.61 11.03 L5.57 10.67 L5.56 10.30 L5.57 9.93 L5.61 9.56 L5.67 9.19 L5.76 8.83 L5.87 8.46 L6.01 8.10 L6.17 7.75 L6.36 7.41 L6.57 7.08 L6.81 6.76 L7.07 6.46 L7.35 6.17 L7.65 5.90 L7.97 5.64 L8.31 5.41 L8.67 5.20 L9.04 5.01 L9.43 4.85 L9.84 4.71 L10.25 4.60 L10.67 4.52 L11.10 4.47 L11.54 4.44 L11.98 4.44 L12.42 4.47 L12.87 4.54 L13.31 4.63 L13.74 4.75 L14.17 4.91 L14.59 5.09 L15.00 5.30 L15.40 5.54 L15.79 5.81 L16.16 6.11 L16.50 6.43 L16.83 6.78 L17.14 7.15 L17.43 7.54 L17.68 7.95 L17.92 8.38 L18.12 8.83 L18.29 9.30 L18.44 9.78 L18.55 10.27 L18.63 10.77 L18.68 11.28 L18.69 11.79 L18.67 12.31 L18.61 12.82 L18.52 13.34 L18.39 13.85 L18.23 14.35 L18.03 14.85 L17.80 15.33 L17.54 15.80 L17.24 16.25 L16.92 16.69 L16.56 17.10 L16.17 17.49 L15.76 17.86 L15.32 18.20 L14.85 18.52 L14.36 18.80 L13.86 19.05 L13.33 19.27 L12.79 19.45 L12.23 19.60 L11.66 19.71 L11.08 19.78 L10.50 19.81 L9.91 19.81 L9.32 19.76 L8.73 19.68 L8.15 19.55 L7.57 19.39 L7.00 19.19 L6.44 18.95 L5.90 18.67 L5.37 18.35 L4.87 18.00 L4.38 17.61 L3.92 17.19 L3.49 16.73 L3.09 16.25 L2.72 15.74 L2.38 15.20 L2.07 14.64 L1.81 14.05 L1.58 13.45 L1.39 12.83 L1.24 12.19 L1.14 11.55 L1.08 10.89 L1.06 10.23 L1.08 9.57 L1.15 8.90 L1.27 8.24 L1.43 7.59 L1.63 6.94 L1.88 6.31 L2.17 5.69 L2.50 5.09 L2.87 4.51 L3.29 3.95 L3.74 3.42 L4.22 2.92 L4.75 2.45 L5.30 2.01 L5.89 1.61 L6.50 1.25 L7.14 0.93 L7.80 0.65 L8.48 0.42 L9.18 0.23 L9.89 0.08 L10.62 -0.02 L11.35 -0.06 L12.09 -0.06 L12.83 -0.02 L13.56 0.08 L14.29 0.23 L15.02 0.43 L15.73 0.67 L16.42 0.97 L17.10 1.31 L17.76 1.70" transform="translate(1,1)" stroke="#a8a8a8" stroke-width="2.1" fill="none" stroke-linecap="round"/></svg>
<div class="a" style="left:50px;top:1620px;width:1158px;height:38px;background:#292929;"></div>
<div class="a" style="left:58px;top:1623px;width:27px;height:28px;background:#1d1d1d;"></div>
<div class="a" style="left:50px;top:1656px;width:1158px;height:2px;background:#1c1c1c;"></div>
<svg class="a" style="left:58px;top:1630px;" width="26" height="16" viewBox="0 0 26 16"><path d="M1 8 C6 0 20 0 25 8 C20 16 6 16 1 8 Z" fill="#b2b2b2"/><circle cx="13" cy="8" r="4.5" fill="#292929"/><circle cx="14.5" cy="6.5" r="1.2" fill="#b2b2b2"/></svg>
<div class="a" style="left:118px;top:1624px;width:26px;height:28px;background:#1c1c1c;"></div>
<div class="a" style="left:149px;top:1624px;width:25px;height:28px;background:#1c1c1c;"></div>
<svg class="a" style="left:196px;top:1630px;" width="10" height="16" viewBox="0 0 10 16"><path d="M2 2 L8 8 L2 14" stroke="#a8a8a8" stroke-width="2" fill="none"/></svg>
<div class="a" style="left:220px;top:1623px;width:28px;height:28px;background:#6f7fe6;"></div>
<div class="t" id="t82" style="left:263.0px;top:1627.0px;font-size:24px;line-height:24px;color:#a8a8a8;transform:scaleX(1.0480);transform-origin:left center;">5</div>
<svg class="a" style="left:324px;top:1626px;" width="24" height="23" viewBox="0 0 24 23"><path d="M12 0 L15 8.5 L24 8.8 L17 14.3 L19.5 23 L12 18 L4.5 23 L7 14.3 L0 8.8 L9 8.5 Z" fill="#b2b2b2"/></svg>
<div class="t" id="t83" style="left:362.0px;top:1627.0px;font-size:24px;line-height:24px;color:#a8a8a8;transform:scaleX(0.9615);transform-origin:left center;">arm L</div>
<div class="a" style="left:678px;top:1624px;width:26px;height:28px;background:#1d1d1d;"></div>
<svg class="a" style="left:678px;top:1626px;" width="26" height="26" viewBox="0 0 26 26"><path d="M4 16.5 V12 C4 6 8 3 13.5 3 C19 3 23 6 23 12 V16.5 Z" fill="#b2b2b2"/><circle cx="9" cy="11.5" r="2.3" fill="#1d1d1d"/><circle cx="18" cy="11.5" r="2.3" fill="#1d1d1d"/><rect x="11" y="15" width="5" height="8" rx="1" fill="#b2b2b2"/><rect x="1" y="18.5" width="25" height="2" fill="#b2b2b2"/></svg>
<div class="a" style="left:708px;top:1624px;width:26px;height:28px;background:#1c1c1c;"></div>
<svg class="a" style="left:710px;top:1627px;" width="22" height="22" viewBox="0 0 22 22"><circle cx="11" cy="11" r="4.5" fill="none" stroke="#888" stroke-width="2"/><path d="M11 1 V5 M11 17 V21 M1 11 H5 M17 11 H21 M4 4 L7 7 M15 15 L18 18 M4 18 L7 15 M15 7 L18 4" stroke="#888" stroke-width="2"/></svg>
<div class="a" style="left:738px;top:1624px;width:26px;height:28px;background:#1c1c1c;"></div>
<svg class="a" style="left:739px;top:1627px;" width="24" height="24" viewBox="0 0 24 24"><path d="M2.5 22 L22 2" stroke="#b2b2b2" stroke-width="2.6" stroke-linecap="round"/></svg>
<div class="a" style="left:828px;top:1624px;width:26px;height:28px;background:#1c1c1c;"></div>
<div class="a" style="left:858px;top:1624px;width:26px;height:28px;background:#1c1c1c;"></div>
<div class="a" style="left:888px;top:1624px;width:26px;height:28px;background:#1c1c1c;"></div>
<svg class="a" style="left:954px;top:1626px;" width="24" height="24" viewBox="0 0 24 24"><path d="M11.00 9.00 L11.14 8.96 L11.28 8.92 L11.42 8.90 L11.57 8.89 L11.73 8.88 L11.89 8.89 L12.04 8.91 L12.21 8.95 L12.37 8.99 L12.52 9.05 L12.68 9.12 L12.84 9.20 L12.99 9.29 L13.14 9.40 L13.28 9.52 L13.41 9.65 L13.54 9.79 L13.66 9.95 L13.77 10.11 L13.87 10.28 L13.95 10.47 L14.03 10.66 L14.09 10.86 L14.15 11.06 L14.18 11.28 L14.20 11.49 L14.21 11.72 L14.20 11.94 L14.18 12.17 L14.14 12.39 L14.08 12.62 L14.01 12.85 L13.92 13.07 L13.81 13.29 L13.69 13.50 L13.55 13.71 L13.39 13.91 L13.22 14.10 L13.04 14.28 L12.84 14.45 L12.62 14.61 L12.40 14.75 L12.16 14.88 L11.91 15.00 L11.65 15.10 L11.38 15.18 L11.11 15.24 L10.82 15.29 L10.54 15.31 L10.24 15.32 L9.95 15.31 L9.65 15.27 L9.35 15.22 L9.05 15.14 L8.76 15.05 L8.47 14.93 L8.19 14.79 L7.91 14.63 L7.65 14.46 L7.39 14.26 L7.14 14.04 L6.91 13.81 L6.69 13.55 L6.49 13.28 L6.30 13.00 L6.14 12.70 L5.99 12.39 L5.86 12.06 L5.76 11.72 L5.67 11.38 L5.61 11.03 L5.57 10.67 L5.56 10.30 L5.57 9.93 L5.61 9.56 L5.67 9.19 L5.76 8.83 L5.87 8.46 L6.01 8.10 L6.17 7.75 L6.36 7.41 L6.57 7.08 L6.81 6.76 L7.07 6.46 L7.35 6.17 L7.65 5.90 L7.97 5.64 L8.31 5.41 L8.67 5.20 L9.04 5.01 L9.43 4.85 L9.84 4.71 L10.25 4.60 L10.67 4.52 L11.10 4.47 L11.54 4.44 L11.98 4.44 L12.42 4.47 L12.87 4.54 L13.31 4.63 L13.74 4.75 L14.17 4.91 L14.59 5.09 L15.00 5.30 L15.40 5.54 L15.79 5.81 L16.16 6.11 L16.50 6.43 L16.83 6.78 L17.14 7.15 L17.43 7.54 L17.68 7.95 L17.92 8.38 L18.12 8.83 L18.29 9.30 L18.44 9.78 L18.55 10.27 L18.63 10.77 L18.68 11.28 L18.69 11.79 L18.67 12.31 L18.61 12.82 L18.52 13.34 L18.39 13.85 L18.23 14.35 L18.03 14.85 L17.80 15.33 L17.54 15.80 L17.24 16.25 L16.92 16.69 L16.56 17.10 L16.17 17.49 L15.76 17.86 L15.32 18.20 L14.85 18.52 L14.36 18.80 L13.86 19.05 L13.33 19.27 L12.79 19.45 L12.23 19.60 L11.66 19.71 L11.08 19.78 L10.50 19.81 L9.91 19.81 L9.32 19.76 L8.73 19.68 L8.15 19.55 L7.57 19.39 L7.00 19.19 L6.44 18.95 L5.90 18.67 L5.37 18.35 L4.87 18.00 L4.38 17.61 L3.92 17.19 L3.49 16.73 L3.09 16.25 L2.72 15.74 L2.38 15.20 L2.07 14.64 L1.81 14.05 L1.58 13.45 L1.39 12.83 L1.24 12.19 L1.14 11.55 L1.08 10.89 L1.06 10.23 L1.08 9.57 L1.15 8.90 L1.27 8.24 L1.43 7.59 L1.63 6.94 L1.88 6.31 L2.17 5.69 L2.50 5.09 L2.87 4.51 L3.29 3.95 L3.74 3.42 L4.22 2.92 L4.75 2.45 L5.30 2.01 L5.89 1.61 L6.50 1.25 L7.14 0.93 L7.80 0.65 L8.48 0.42 L9.18 0.23 L9.89 0.08 L10.62 -0.02 L11.35 -0.06 L12.09 -0.06 L12.83 -0.02 L13.56 0.08 L14.29 0.23 L15.02 0.43 L15.73 0.67 L16.42 0.97 L17.10 1.31 L17.76 1.70" transform="translate(1,1)" stroke="#a8a8a8" stroke-width="2.1" fill="none" stroke-linecap="round"/></svg>
<div class="a" style="left:990px;top:1622px;width:178px;height:33px;background:#1c1c1c;"></div>
<div class="t" id="t84" style="left:1002.0px;top:1628.0px;font-size:22px;line-height:22px;color:#b0b0b0;transform:scaleX(1.0808);transform-origin:left center;">4. body</div>
<svg class="a" style="left:1143px;top:1633px;" width="16" height="10" viewBox="0 0 16 10"><path d="M1.5 1.5 L8 8 L14.5 1.5" stroke="#b2b2b2" stroke-width="2" fill="none"/></svg>
<div class="a" style="left:50px;top:1658px;width:1158px;height:38px;background:#3a3a3a;"></div>
<div class="a" style="left:58px;top:1661px;width:27px;height:28px;background:#2c2c2c;"></div>
<div class="a" style="left:50px;top:1694px;width:1158px;height:2px;background:#1c1c1c;"></div>
<svg class="a" style="left:58px;top:1668px;" width="26" height="16" viewBox="0 0 26 16"><path d="M1 8 C6 0 20 0 25 8 C20 16 6 16 1 8 Z" fill="#b2b2b2"/><circle cx="13" cy="8" r="4.5" fill="#3a3a3a"/><circle cx="14.5" cy="6.5" r="1.2" fill="#b2b2b2"/></svg>
<div class="a" style="left:118px;top:1662px;width:26px;height:28px;background:#2a2a2a;"></div>
<div class="a" style="left:149px;top:1662px;width:25px;height:28px;background:#2a2a2a;"></div>
<svg class="a" style="left:197px;top:1671px;" width="16" height="10" viewBox="0 0 16 10"><path d="M1.5 1.5 L8 8 L14.5 1.5" stroke="#a8a8a8" stroke-width="2" fill="none"/></svg>
<div class="a" style="left:220px;top:1661px;width:28px;height:28px;background:#a99b7f;"></div>
<div class="t" id="t85" style="left:263.0px;top:1665.0px;font-size:24px;line-height:24px;color:#a8a8a8;transform:scaleX(1.0480);transform-origin:left center;">6</div>
<svg class="a" style="left:320px;top:1664px;" width="32" height="26" viewBox="0 0 32 26"><rect x="1" y="1" width="30" height="24" fill="none" stroke="#b2b2b2" stroke-width="2"/><rect x="1" y="1" width="5" height="24" fill="#b2b2b2"/><rect x="26" y="1" width="5" height="24" fill="#b2b2b2"/><rect x="2.5" y="3" width="2" height="2" fill="#2a2a2a"/><rect x="27.5" y="3" width="2" height="2" fill="#2a2a2a"/><rect x="2.5" y="7" width="2" height="2" fill="#2a2a2a"/><rect x="27.5" y="7" width="2" height="2" fill="#2a2a2a"/><rect x="2.5" y="11" width="2" height="2" fill="#2a2a2a"/><rect x="27.5" y="11" width="2" height="2" fill="#2a2a2a"/><rect x="2.5" y="15" width="2" height="2" fill="#2a2a2a"/><rect x="27.5" y="15" width="2" height="2" fill="#2a2a2a"/><rect x="2.5" y="19" width="2" height="2" fill="#2a2a2a"/><rect x="27.5" y="19" width="2" height="2" fill="#2a2a2a"/><rect x="2.5" y="23" width="2" height="2" fill="#2a2a2a"/><rect x="27.5" y="23" width="2" height="2" fill="#2a2a2a"/><rect x="6" y="19" width="20" height="2" fill="#b2b2b2"/><circle cx="12" cy="8.5" r="4" fill="#3d82e6"/><rect x="14" y="6" width="9" height="8" fill="#e84b3c"/><path d="M14 9 L19.5 17.5 H8.5 Z" fill="#3aa23d"/></svg>
<div class="a" style="left:357px;top:1659px;width:311px;height:34px;background:#393939;box-shadow:inset 0 0 0 2px #b9b9b9;"></div>
<div class="t" id="t86" style="left:362.0px;top:1665.0px;font-size:24px;line-height:24px;color:#a8a8a8;transform:scaleX(0.9888);transform-origin:left center;">leg R.</div>
<div class="a" style="left:678px;top:1662px;width:26px;height:28px;background:#2c2c2c;"></div>
<svg class="a" style="left:678px;top:1664px;" width="26" height="26" viewBox="0 0 26 26"><path d="M4 16.5 V12 C4 6 8 3 13.5 3 C19 3 23 6 23 12 V16.5 Z" fill="#b2b2b2"/><circle cx="9" cy="11.5" r="2.3" fill="#2c2c2c"/><circle cx="18" cy="11.5" r="2.3" fill="#2c2c2c"/><rect x="11" y="15" width="5" height="8" rx="1" fill="#b2b2b2"/><rect x="1" y="18.5" width="25" height="2" fill="#b2b2b2"/></svg>
<div class="a" style="left:708px;top:1662px;width:26px;height:28px;background:#2a2a2a;"></div>
<div class="a" style="left:738px;top:1662px;width:26px;height:28px;background:#2a2a2a;"></div>
<svg class="a" style="left:739px;top:1665px;" width="24" height="24" viewBox="0 0 24 24"><path d="M2.5 22 L22 2" stroke="#b2b2b2" stroke-width="2.6" stroke-linecap="round"/></svg>
<div class="a" style="left:828px;top:1662px;width:26px;height:28px;background:#2a2a2a;"></div>
<div class="a" style="left:858px;top:1662px;width:26px;height:28px;background:#2a2a2a;"></div>
<div class="a" style="left:888px;top:1662px;width:26px;height:28px;background:#2a2a2a;"></div>
<svg class="a" style="left:954px;top:1664px;" width="24" height="24" viewBox="0 0 24 24"><path d="M11.00 9.00 L11.14 8.96 L11.28 8.92 L11.42 8.90 L11.57 8.89 L11.73 8.88 L11.89 8.89 L12.04 8.91 L12.21 8.95 L12.37 8.99 L12.52 9.05 L12.68 9.12 L12.84 9.20 L12.99 9.29 L13.14 9.40 L13.28 9.52 L13.41 9.65 L13.54 9.79 L13.66 9.95 L13.77 10.11 L13.87 10.28 L13.95 10.47 L14.03 10.66 L14.09 10.86 L14.15 11.06 L14.18 11.28 L14.20 11.49 L14.21 11.72 L14.20 11.94 L14.18 12.17 L14.14 12.39 L14.08 12.62 L14.01 12.85 L13.92 13.07 L13.81 13.29 L13.69 13.50 L13.55 13.71 L13.39 13.91 L13.22 14.10 L13.04 14.28 L12.84 14.45 L12.62 14.61 L12.40 14.75 L12.16 14.88 L11.91 15.00 L11.65 15.10 L11.38 15.18 L11.11 15.24 L10.82 15.29 L10.54 15.31 L10.24 15.32 L9.95 15.31 L9.65 15.27 L9.35 15.22 L9.05 15.14 L8.76 15.05 L8.47 14.93 L8.19 14.79 L7.91 14.63 L7.65 14.46 L7.39 14.26 L7.14 14.04 L6.91 13.81 L6.69 13.55 L6.49 13.28 L6.30 13.00 L6.14 12.70 L5.99 12.39 L5.86 12.06 L5.76 11.72 L5.67 11.38 L5.61 11.03 L5.57 10.67 L5.56 10.30 L5.57 9.93 L5.61 9.56 L5.67 9.19 L5.76 8.83 L5.87 8.46 L6.01 8.10 L6.17 7.75 L6.36 7.41 L6.57 7.08 L6.81 6.76 L7.07 6.46 L7.35 6.17 L7.65 5.90 L7.97 5.64 L8.31 5.41 L8.67 5.20 L9.04 5.01 L9.43 4.85 L9.84 4.71 L10.25 4.60 L10.67 4.52 L11.10 4.47 L11.54 4.44 L11.98 4.44 L12.42 4.47 L12.87 4.54 L13.31 4.63 L13.74 4.75 L14.17 4.91 L14.59 5.09 L15.00 5.30 L15.40 5.54 L15.79 5.81 L16.16 6.11 L16.50 6.43 L16.83 6.78 L17.14 7.15 L17.43 7.54 L17.68 7.95 L17.92 8.38 L18.12 8.83 L18.29 9.30 L18.44 9.78 L18.55 10.27 L18.63 10.77 L18.68 11.28 L18.69 11.79 L18.67 12.31 L18.61 12.82 L18.52 13.34 L18.39 13.85 L18.23 14.35 L18.03 14.85 L17.80 15.33 L17.54 15.80 L17.24 16.25 L16.92 16.69 L16.56 17.10 L16.17 17.49 L15.76 17.86 L15.32 18.20 L14.85 18.52 L14.36 18.80 L13.86 19.05 L13.33 19.27 L12.79 19.45 L12.23 19.60 L11.66 19.71 L11.08 19.78 L10.50 19.81 L9.91 19.81 L9.32 19.76 L8.73 19.68 L8.15 19.55 L7.57 19.39 L7.00 19.19 L6.44 18.95 L5.90 18.67 L5.37 18.35 L4.87 18.00 L4.38 17.61 L3.92 17.19 L3.49 16.73 L3.09 16.25 L2.72 15.74 L2.38 15.20 L2.07 14.64 L1.81 14.05 L1.58 13.45 L1.39 12.83 L1.24 12.19 L1.14 11.55 L1.08 10.89 L1.06 10.23 L1.08 9.57 L1.15 8.90 L1.27 8.24 L1.43 7.59 L1.63 6.94 L1.88 6.31 L2.17 5.69 L2.50 5.09 L2.87 4.51 L3.29 3.95 L3.74 3.42 L4.22 2.92 L4.75 2.45 L5.30 2.01 L5.89 1.61 L6.50 1.25 L7.14 0.93 L7.80 0.65 L8.48 0.42 L9.18 0.23 L9.89 0.08 L10.62 -0.02 L11.35 -0.06 L12.09 -0.06 L12.83 -0.02 L13.56 0.08 L14.29 0.23 L15.02 0.43 L15.73 0.67 L16.42 0.97 L17.10 1.31 L17.76 1.70" transform="translate(1,1)" stroke="#a8a8a8" stroke-width="2.1" fill="none" stroke-linecap="round"/></svg>
<div class="a" style="left:990px;top:1660px;width:178px;height:33px;background:#1c1c1c;"></div>
<div class="t" id="t87" style="left:1002.0px;top:1666.0px;font-size:22px;line-height:22px;color:#b0b0b0;-webkit-text-stroke:0.6px currentColor;transform:scaleX(0.8261);transform-origin:left center;">なし</div>
<svg class="a" style="left:1143px;top:1671px;" width="16" height="10" viewBox="0 0 16 10"><path d="M1.5 1.5 L8 8 L14.5 1.5" stroke="#b2b2b2" stroke-width="2" fill="none"/></svg>
<div class="a" style="left:50px;top:1696px;width:1158px;height:38px;background:#212121;"></div>
<div class="a" style="left:50px;top:1732px;width:1158px;height:2px;background:#1a1a1a;"></div>
<svg class="a" style="left:62px;top:1706px;" width="14" height="16" viewBox="0 0 14 16"><path d="M13 1 L2 8 L13 15 Z" fill="#b2b2b2"/></svg>
<svg class="a" style="left:92px;top:1705px;" width="18" height="18" viewBox="0 0 18 18"><path d="M9 1.5 L16.5 9 L9 16.5 L1.5 9 Z" fill="none" stroke="#b2b2b2" stroke-width="2"/></svg>
<svg class="a" style="left:125px;top:1706px;" width="14" height="16" viewBox="0 0 14 16"><path d="M1 1 L12 8 L1 15 Z" fill="#b2b2b2"/></svg>
<div class="a" style="left:266px;top:1699px;width:32px;height:32px;background:#232323;"></div>
<svg class="a" style="left:265px;top:1700px;" width="24" height="26" viewBox="0 0 24 26"><circle cx="12" cy="15" r="10" fill="none" stroke="#4a8ee6" stroke-width="2.2"/><path d="M8 1.5 H16 M12 2 V5 M12 15 L16 9" stroke="#4a8ee6" stroke-width="2.2"/></svg>
<svg class="a" style="left:302px;top:1703px;" width="22" height="22" viewBox="0 0 22 22"><path d="M2 1 V20 H21" stroke="#b2b2b2" stroke-width="2" fill="none"/><path d="M4 17 L10 8 L14 13 L20 4" stroke="#b2b2b2" stroke-width="2" fill="none"/></svg>
<div class="a" style="left:334px;top:1698px;width:336px;height:34px;background:#4a4a4a;"></div>
<div class="t" id="t88" style="left:340.0px;top:1702.5px;font-size:23px;line-height:23px;color:#a6a6a6;-webkit-text-stroke:0.6px currentColor;transform:scaleX(0.8333);transform-origin:left center;">タイムリマップ</div>
<div class="t" id="t89" style="left:680.0px;top:1704.0px;font-size:22px;line-height:22px;color:#5ca2f2;transform:scaleX(1.1604);transform-origin:left center;">00102</div>
<svg class="a" style="left:978px;top:1702px;" width="24" height="24" viewBox="0 0 24 24"><path d="M11.00 9.00 L11.14 8.96 L11.28 8.92 L11.42 8.90 L11.57 8.89 L11.73 8.88 L11.89 8.89 L12.04 8.91 L12.21 8.95 L12.37 8.99 L12.52 9.05 L12.68 9.12 L12.84 9.20 L12.99 9.29 L13.14 9.40 L13.28 9.52 L13.41 9.65 L13.54 9.79 L13.66 9.95 L13.77 10.11 L13.87 10.28 L13.95 10.47 L14.03 10.66 L14.09 10.86 L14.15 11.06 L14.18 11.28 L14.20 11.49 L14.21 11.72 L14.20 11.94 L14.18 12.17 L14.14 12.39 L14.08 12.62 L14.01 12.85 L13.92 13.07 L13.81 13.29 L13.69 13.50 L13.55 13.71 L13.39 13.91 L13.22 14.10 L13.04 14.28 L12.84 14.45 L12.62 14.61 L12.40 14.75 L12.16 14.88 L11.91 15.00 L11.65 15.10 L11.38 15.18 L11.11 15.24 L10.82 15.29 L10.54 15.31 L10.24 15.32 L9.95 15.31 L9.65 15.27 L9.35 15.22 L9.05 15.14 L8.76 15.05 L8.47 14.93 L8.19 14.79 L7.91 14.63 L7.65 14.46 L7.39 14.26 L7.14 14.04 L6.91 13.81 L6.69 13.55 L6.49 13.28 L6.30 13.00 L6.14 12.70 L5.99 12.39 L5.86 12.06 L5.76 11.72 L5.67 11.38 L5.61 11.03 L5.57 10.67 L5.56 10.30 L5.57 9.93 L5.61 9.56 L5.67 9.19 L5.76 8.83 L5.87 8.46 L6.01 8.10 L6.17 7.75 L6.36 7.41 L6.57 7.08 L6.81 6.76 L7.07 6.46 L7.35 6.17 L7.65 5.90 L7.97 5.64 L8.31 5.41 L8.67 5.20 L9.04 5.01 L9.43 4.85 L9.84 4.71 L10.25 4.60 L10.67 4.52 L11.10 4.47 L11.54 4.44 L11.98 4.44 L12.42 4.47 L12.87 4.54 L13.31 4.63 L13.74 4.75 L14.17 4.91 L14.59 5.09 L15.00 5.30 L15.40 5.54 L15.79 5.81 L16.16 6.11 L16.50 6.43 L16.83 6.78 L17.14 7.15 L17.43 7.54 L17.68 7.95 L17.92 8.38 L18.12 8.83 L18.29 9.30 L18.44 9.78 L18.55 10.27 L18.63 10.77 L18.68 11.28 L18.69 11.79 L18.67 12.31 L18.61 12.82 L18.52 13.34 L18.39 13.85 L18.23 14.35 L18.03 14.85 L17.80 15.33 L17.54 15.80 L17.24 16.25 L16.92 16.69 L16.56 17.10 L16.17 17.49 L15.76 17.86 L15.32 18.20 L14.85 18.52 L14.36 18.80 L13.86 19.05 L13.33 19.27 L12.79 19.45 L12.23 19.60 L11.66 19.71 L11.08 19.78 L10.50 19.81 L9.91 19.81 L9.32 19.76 L8.73 19.68 L8.15 19.55 L7.57 19.39 L7.00 19.19 L6.44 18.95 L5.90 18.67 L5.37 18.35 L4.87 18.00 L4.38 17.61 L3.92 17.19 L3.49 16.73 L3.09 16.25 L2.72 15.74 L2.38 15.20 L2.07 14.64 L1.81 14.05 L1.58 13.45 L1.39 12.83 L1.24 12.19 L1.14 11.55 L1.08 10.89 L1.06 10.23 L1.08 9.57 L1.15 8.90 L1.27 8.24 L1.43 7.59 L1.63 6.94 L1.88 6.31 L2.17 5.69 L2.50 5.09 L2.87 4.51 L3.29 3.95 L3.74 3.42 L4.22 2.92 L4.75 2.45 L5.30 2.01 L5.89 1.61 L6.50 1.25 L7.14 0.93 L7.80 0.65 L8.48 0.42 L9.18 0.23 L9.89 0.08 L10.62 -0.02 L11.35 -0.06 L12.09 -0.06 L12.83 -0.02 L13.56 0.08 L14.29 0.23 L15.02 0.43 L15.73 0.67 L16.42 0.97 L17.10 1.31 L17.76 1.70" transform="translate(1,1)" stroke="#a8a8a8" stroke-width="2.1" fill="none" stroke-linecap="round"/></svg>
<div class="a" style="left:50px;top:1734px;width:1158px;height:38px;background:#292929;"></div>
<div class="a" style="left:58px;top:1737px;width:27px;height:28px;background:#1d1d1d;"></div>
<div class="a" style="left:50px;top:1770px;width:1158px;height:2px;background:#1c1c1c;"></div>
<svg class="a" style="left:58px;top:1744px;" width="26" height="16" viewBox="0 0 26 16"><path d="M1 8 C6 0 20 0 25 8 C20 16 6 16 1 8 Z" fill="#b2b2b2"/><circle cx="13" cy="8" r="4.5" fill="#292929"/><circle cx="14.5" cy="6.5" r="1.2" fill="#b2b2b2"/></svg>
<div class="a" style="left:118px;top:1738px;width:26px;height:28px;background:#1c1c1c;"></div>
<div class="a" style="left:149px;top:1738px;width:25px;height:28px;background:#1c1c1c;"></div>
<svg class="a" style="left:196px;top:1744px;" width="10" height="16" viewBox="0 0 10 16"><path d="M2 2 L8 8 L2 14" stroke="#a8a8a8" stroke-width="2" fill="none"/></svg>
<div class="a" style="left:220px;top:1737px;width:28px;height:28px;background:#a99b7f;"></div>
<div class="t" id="t90" style="left:263.0px;top:1741.0px;font-size:24px;line-height:24px;color:#a8a8a8;transform:scaleX(1.0480);transform-origin:left center;">7</div>
<svg class="a" style="left:320px;top:1740px;" width="32" height="26" viewBox="0 0 32 26"><rect x="1" y="1" width="30" height="24" fill="none" stroke="#b2b2b2" stroke-width="2"/><rect x="1" y="1" width="5" height="24" fill="#b2b2b2"/><rect x="26" y="1" width="5" height="24" fill="#b2b2b2"/><rect x="2.5" y="3" width="2" height="2" fill="#2a2a2a"/><rect x="27.5" y="3" width="2" height="2" fill="#2a2a2a"/><rect x="2.5" y="7" width="2" height="2" fill="#2a2a2a"/><rect x="27.5" y="7" width="2" height="2" fill="#2a2a2a"/><rect x="2.5" y="11" width="2" height="2" fill="#2a2a2a"/><rect x="27.5" y="11" width="2" height="2" fill="#2a2a2a"/><rect x="2.5" y="15" width="2" height="2" fill="#2a2a2a"/><rect x="27.5" y="15" width="2" height="2" fill="#2a2a2a"/><rect x="2.5" y="19" width="2" height="2" fill="#2a2a2a"/><rect x="27.5" y="19" width="2" height="2" fill="#2a2a2a"/><rect x="2.5" y="23" width="2" height="2" fill="#2a2a2a"/><rect x="27.5" y="23" width="2" height="2" fill="#2a2a2a"/><rect x="6" y="19" width="20" height="2" fill="#b2b2b2"/><circle cx="12" cy="8.5" r="4" fill="#3d82e6"/><rect x="14" y="6" width="9" height="8" fill="#e84b3c"/><path d="M14 9 L19.5 17.5 H8.5 Z" fill="#3aa23d"/></svg>
<div class="t" id="t91" style="left:362.0px;top:1741.0px;font-size:24px;line-height:24px;color:#a8a8a8;transform:scaleX(1.0375);transform-origin:left center;">leg L</div>
<div class="a" style="left:678px;top:1738px;width:26px;height:28px;background:#1d1d1d;"></div>
<svg class="a" style="left:678px;top:1740px;" width="26" height="26" viewBox="0 0 26 26"><path d="M4 16.5 V12 C4 6 8 3 13.5 3 C19 3 23 6 23 12 V16.5 Z" fill="#b2b2b2"/><circle cx="9" cy="11.5" r="2.3" fill="#1d1d1d"/><circle cx="18" cy="11.5" r="2.3" fill="#1d1d1d"/><rect x="11" y="15" width="5" height="8" rx="1" fill="#b2b2b2"/><rect x="1" y="18.5" width="25" height="2" fill="#b2b2b2"/></svg>
<div class="a" style="left:708px;top:1738px;width:26px;height:28px;background:#1c1c1c;"></div>
<div class="a" style="left:738px;top:1738px;width:26px;height:28px;background:#1c1c1c;"></div>
<svg class="a" style="left:739px;top:1741px;" width="24" height="24" viewBox="0 0 24 24"><path d="M2.5 22 L22 2" stroke="#b2b2b2" stroke-width="2.6" stroke-linecap="round"/></svg>
<div class="a" style="left:828px;top:1738px;width:26px;height:28px;background:#1c1c1c;"></div>
<div class="a" style="left:858px;top:1738px;width:26px;height:28px;background:#1c1c1c;"></div>
<div class="a" style="left:888px;top:1738px;width:26px;height:28px;background:#1c1c1c;"></div>
<svg class="a" style="left:954px;top:1740px;" width="24" height="24" viewBox="0 0 24 24"><path d="M11.00 9.00 L11.14 8.96 L11.28 8.92 L11.42 8.90 L11.57 8.89 L11.73 8.88 L11.89 8.89 L12.04 8.91 L12.21 8.95 L12.37 8.99 L12.52 9.05 L12.68 9.12 L12.84 9.20 L12.99 9.29 L13.14 9.40 L13.28 9.52 L13.41 9.65 L13.54 9.79 L13.66 9.95 L13.77 10.11 L13.87 10.28 L13.95 10.47 L14.03 10.66 L14.09 10.86 L14.15 11.06 L14.18 11.28 L14.20 11.49 L14.21 11.72 L14.20 11.94 L14.18 12.17 L14.14 12.39 L14.08 12.62 L14.01 12.85 L13.92 13.07 L13.81 13.29 L13.69 13.50 L13.55 13.71 L13.39 13.91 L13.22 14.10 L13.04 14.28 L12.84 14.45 L12.62 14.61 L12.40 14.75 L12.16 14.88 L11.91 15.00 L11.65 15.10 L11.38 15.18 L11.11 15.24 L10.82 15.29 L10.54 15.31 L10.24 15.32 L9.95 15.31 L9.65 15.27 L9.35 15.22 L9.05 15.14 L8.76 15.05 L8.47 14.93 L8.19 14.79 L7.91 14.63 L7.65 14.46 L7.39 14.26 L7.14 14.04 L6.91 13.81 L6.69 13.55 L6.49 13.28 L6.30 13.00 L6.14 12.70 L5.99 12.39 L5.86 12.06 L5.76 11.72 L5.67 11.38 L5.61 11.03 L5.57 10.67 L5.56 10.30 L5.57 9.93 L5.61 9.56 L5.67 9.19 L5.76 8.83 L5.87 8.46 L6.01 8.10 L6.17 7.75 L6.36 7.41 L6.57 7.08 L6.81 6.76 L7.07 6.46 L7.35 6.17 L7.65 5.90 L7.97 5.64 L8.31 5.41 L8.67 5.20 L9.04 5.01 L9.43 4.85 L9.84 4.71 L10.25 4.60 L10.67 4.52 L11.10 4.47 L11.54 4.44 L11.98 4.44 L12.42 4.47 L12.87 4.54 L13.31 4.63 L13.74 4.75 L14.17 4.91 L14.59 5.09 L15.00 5.30 L15.40 5.54 L15.79 5.81 L16.16 6.11 L16.50 6.43 L16.83 6.78 L17.14 7.15 L17.43 7.54 L17.68 7.95 L17.92 8.38 L18.12 8.83 L18.29 9.30 L18.44 9.78 L18.55 10.27 L18.63 10.77 L18.68 11.28 L18.69 11.79 L18.67 12.31 L18.61 12.82 L18.52 13.34 L18.39 13.85 L18.23 14.35 L18.03 14.85 L17.80 15.33 L17.54 15.80 L17.24 16.25 L16.92 16.69 L16.56 17.10 L16.17 17.49 L15.76 17.86 L15.32 18.20 L14.85 18.52 L14.36 18.80 L13.86 19.05 L13.33 19.27 L12.79 19.45 L12.23 19.60 L11.66 19.71 L11.08 19.78 L10.50 19.81 L9.91 19.81 L9.32 19.76 L8.73 19.68 L8.15 19.55 L7.57 19.39 L7.00 19.19 L6.44 18.95 L5.90 18.67 L5.37 18.35 L4.87 18.00 L4.38 17.61 L3.92 17.19 L3.49 16.73 L3.09 16.25 L2.72 15.74 L2.38 15.20 L2.07 14.64 L1.81 14.05 L1.58 13.45 L1.39 12.83 L1.24 12.19 L1.14 11.55 L1.08 10.89 L1.06 10.23 L1.08 9.57 L1.15 8.90 L1.27 8.24 L1.43 7.59 L1.63 6.94 L1.88 6.31 L2.17 5.69 L2.50 5.09 L2.87 4.51 L3.29 3.95 L3.74 3.42 L4.22 2.92 L4.75 2.45 L5.30 2.01 L5.89 1.61 L6.50 1.25 L7.14 0.93 L7.80 0.65 L8.48 0.42 L9.18 0.23 L9.89 0.08 L10.62 -0.02 L11.35 -0.06 L12.09 -0.06 L12.83 -0.02 L13.56 0.08 L14.29 0.23 L15.02 0.43 L15.73 0.67 L16.42 0.97 L17.10 1.31 L17.76 1.70" transform="translate(1,1)" stroke="#a8a8a8" stroke-width="2.1" fill="none" stroke-linecap="round"/></svg>
<div class="a" style="left:990px;top:1736px;width:178px;height:33px;background:#1c1c1c;"></div>
<div class="t" id="t92" style="left:1002.0px;top:1742.0px;font-size:22px;line-height:22px;color:#b0b0b0;-webkit-text-stroke:0.6px currentColor;transform:scaleX(0.8261);transform-origin:left center;">なし</div>
<svg class="a" style="left:1143px;top:1747px;" width="16" height="10" viewBox="0 0 16 10"><path d="M1.5 1.5 L8 8 L14.5 1.5" stroke="#b2b2b2" stroke-width="2" fill="none"/></svg>
<div class="a" style="left:50px;top:1772px;width:1158px;height:38px;background:#292929;"></div>
<div class="a" style="left:58px;top:1775px;width:27px;height:28px;background:#1d1d1d;"></div>
<div class="a" style="left:50px;top:1808px;width:1158px;height:2px;background:#1c1c1c;"></div>
<svg class="a" style="left:58px;top:1782px;" width="26" height="16" viewBox="0 0 26 16"><path d="M1 8 C6 0 20 0 25 8 C20 16 6 16 1 8 Z" fill="#b2b2b2"/><circle cx="13" cy="8" r="4.5" fill="#292929"/><circle cx="14.5" cy="6.5" r="1.2" fill="#b2b2b2"/></svg>
<div class="a" style="left:118px;top:1776px;width:26px;height:28px;background:#1c1c1c;"></div>
<div class="a" style="left:149px;top:1776px;width:25px;height:28px;background:#1c1c1c;"></div>
<svg class="a" style="left:196px;top:1782px;" width="10" height="16" viewBox="0 0 10 16"><path d="M2 2 L8 8 L2 14" stroke="#a8a8a8" stroke-width="2" fill="none"/></svg>
<div class="a" style="left:220px;top:1775px;width:28px;height:28px;background:#6f7fe6;"></div>
<div class="t" id="t93" style="left:263.0px;top:1779.0px;font-size:24px;line-height:24px;color:#a8a8a8;transform:scaleX(1.0480);transform-origin:left center;">8</div>
<svg class="a" style="left:324px;top:1777px;" width="24" height="26" viewBox="0 0 24 26"><path d="M1 1 H17 L23 7 V25 H1 Z" fill="#2b1a08" stroke="#e48a2e" stroke-width="1.8"/><text x="12" y="14" font-size="11" font-family="Liberation Sans" font-weight="700" fill="#f09a3a" text-anchor="middle">Ai</text><text x="12" y="22" font-size="5" font-family="Liberation Sans" fill="#f09a3a" text-anchor="middle">AI</text></svg>
<div class="t" id="t94" style="left:362.0px;top:1779.0px;font-size:24px;line-height:24px;color:#a8a8a8;transform:scaleX(0.8649);transform-origin:left center;">BG</div>
<div class="a" style="left:678px;top:1776px;width:26px;height:28px;background:#1d1d1d;"></div>
<svg class="a" style="left:678px;top:1778px;" width="26" height="26" viewBox="0 0 26 26"><path d="M4 16.5 V12 C4 6 8 3 13.5 3 C19 3 23 6 23 12 V16.5 Z" fill="#b2b2b2"/><circle cx="9" cy="11.5" r="2.3" fill="#1d1d1d"/><circle cx="18" cy="11.5" r="2.3" fill="#1d1d1d"/><rect x="11" y="15" width="5" height="8" rx="1" fill="#b2b2b2"/><rect x="1" y="18.5" width="25" height="2" fill="#b2b2b2"/></svg>
<div class="a" style="left:708px;top:1776px;width:26px;height:28px;background:#1c1c1c;"></div>
<div class="a" style="left:738px;top:1776px;width:26px;height:28px;background:#1c1c1c;"></div>
<svg class="a" style="left:739px;top:1779px;" width="24" height="24" viewBox="0 0 24 24"><path d="M2.5 22 L22 2" stroke="#b2b2b2" stroke-width="2.6" stroke-linecap="round"/></svg>
<div class="a" style="left:828px;top:1776px;width:26px;height:28px;background:#1c1c1c;"></div>
<div class="a" style="left:858px;top:1776px;width:26px;height:28px;background:#1c1c1c;"></div>
<div class="a" style="left:888px;top:1776px;width:26px;height:28px;background:#1c1c1c;"></div>
<svg class="a" style="left:954px;top:1778px;" width="24" height="24" viewBox="0 0 24 24"><path d="M11.00 9.00 L11.14 8.96 L11.28 8.92 L11.42 8.90 L11.57 8.89 L11.73 8.88 L11.89 8.89 L12.04 8.91 L12.21 8.95 L12.37 8.99 L12.52 9.05 L12.68 9.12 L12.84 9.20 L12.99 9.29 L13.14 9.40 L13.28 9.52 L13.41 9.65 L13.54 9.79 L13.66 9.95 L13.77 10.11 L13.87 10.28 L13.95 10.47 L14.03 10.66 L14.09 10.86 L14.15 11.06 L14.18 11.28 L14.20 11.49 L14.21 11.72 L14.20 11.94 L14.18 12.17 L14.14 12.39 L14.08 12.62 L14.01 12.85 L13.92 13.07 L13.81 13.29 L13.69 13.50 L13.55 13.71 L13.39 13.91 L13.22 14.10 L13.04 14.28 L12.84 14.45 L12.62 14.61 L12.40 14.75 L12.16 14.88 L11.91 15.00 L11.65 15.10 L11.38 15.18 L11.11 15.24 L10.82 15.29 L10.54 15.31 L10.24 15.32 L9.95 15.31 L9.65 15.27 L9.35 15.22 L9.05 15.14 L8.76 15.05 L8.47 14.93 L8.19 14.79 L7.91 14.63 L7.65 14.46 L7.39 14.26 L7.14 14.04 L6.91 13.81 L6.69 13.55 L6.49 13.28 L6.30 13.00 L6.14 12.70 L5.99 12.39 L5.86 12.06 L5.76 11.72 L5.67 11.38 L5.61 11.03 L5.57 10.67 L5.56 10.30 L5.57 9.93 L5.61 9.56 L5.67 9.19 L5.76 8.83 L5.87 8.46 L6.01 8.10 L6.17 7.75 L6.36 7.41 L6.57 7.08 L6.81 6.76 L7.07 6.46 L7.35 6.17 L7.65 5.90 L7.97 5.64 L8.31 5.41 L8.67 5.20 L9.04 5.01 L9.43 4.85 L9.84 4.71 L10.25 4.60 L10.67 4.52 L11.10 4.47 L11.54 4.44 L11.98 4.44 L12.42 4.47 L12.87 4.54 L13.31 4.63 L13.74 4.75 L14.17 4.91 L14.59 5.09 L15.00 5.30 L15.40 5.54 L15.79 5.81 L16.16 6.11 L16.50 6.43 L16.83 6.78 L17.14 7.15 L17.43 7.54 L17.68 7.95 L17.92 8.38 L18.12 8.83 L18.29 9.30 L18.44 9.78 L18.55 10.27 L18.63 10.77 L18.68 11.28 L18.69 11.79 L18.67 12.31 L18.61 12.82 L18.52 13.34 L18.39 13.85 L18.23 14.35 L18.03 14.85 L17.80 15.33 L17.54 15.80 L17.24 16.25 L16.92 16.69 L16.56 17.10 L16.17 17.49 L15.76 17.86 L15.32 18.20 L14.85 18.52 L14.36 18.80 L13.86 19.05 L13.33 19.27 L12.79 19.45 L12.23 19.60 L11.66 19.71 L11.08 19.78 L10.50 19.81 L9.91 19.81 L9.32 19.76 L8.73 19.68 L8.15 19.55 L7.57 19.39 L7.00 19.19 L6.44 18.95 L5.90 18.67 L5.37 18.35 L4.87 18.00 L4.38 17.61 L3.92 17.19 L3.49 16.73 L3.09 16.25 L2.72 15.74 L2.38 15.20 L2.07 14.64 L1.81 14.05 L1.58 13.45 L1.39 12.83 L1.24 12.19 L1.14 11.55 L1.08 10.89 L1.06 10.23 L1.08 9.57 L1.15 8.90 L1.27 8.24 L1.43 7.59 L1.63 6.94 L1.88 6.31 L2.17 5.69 L2.50 5.09 L2.87 4.51 L3.29 3.95 L3.74 3.42 L4.22 2.92 L4.75 2.45 L5.30 2.01 L5.89 1.61 L6.50 1.25 L7.14 0.93 L7.80 0.65 L8.48 0.42 L9.18 0.23 L9.89 0.08 L10.62 -0.02 L11.35 -0.06 L12.09 -0.06 L12.83 -0.02 L13.56 0.08 L14.29 0.23 L15.02 0.43 L15.73 0.67 L16.42 0.97 L17.10 1.31 L17.76 1.70" transform="translate(1,1)" stroke="#a8a8a8" stroke-width="2.1" fill="none" stroke-linecap="round"/></svg>
<div class="a" style="left:990px;top:1774px;width:178px;height:33px;background:#1c1c1c;"></div>
<div class="t" id="t95" style="left:1002.0px;top:1780.0px;font-size:22px;line-height:22px;color:#b0b0b0;-webkit-text-stroke:0.6px currentColor;transform:scaleX(0.8261);transform-origin:left center;">なし</div>
<svg class="a" style="left:1143px;top:1785px;" width="16" height="10" viewBox="0 0 16 10"><path d="M1.5 1.5 L8 8 L14.5 1.5" stroke="#b2b2b2" stroke-width="2" fill="none"/></svg>
<div class="a" style="left:50px;top:1810px;width:1158px;height:355px;background:#232323;"></div>
<div class="a" style="left:1208px;top:1328px;width:2px;height:837px;background:#0c0c0c;"></div>
<div class="a" style="left:1210px;top:1266px;width:2928px;height:62px;background:#232323;"></div>
<div class="a" style="left:1208px;top:1328px;width:2896px;height:92px;background:#0c0c0c;"></div>
<div class="a" style="left:1210px;top:1330px;width:2894px;height:90px;background:#1f1f1f;border-radius:9px 9px 0 0;"></div>
<div class="a" style="left:1210px;top:1330px;width:14px;height:90px;background:#1b1b1b;border-radius:9px 0 0 0;"></div>
<div class="a" style="left:1224px;top:1350px;width:2880px;height:38px;background:#272727;"></div>
<div class="a" style="left:1208px;top:1420px;width:2896px;height:2px;background:#0a0a0a;"></div>
<div class="a" style="left:1208px;top:1422px;width:2896px;height:6px;background:#242424;"></div>
<div class="a" style="left:1208px;top:1428px;width:2896px;height:2px;background:#0a0a0a;"></div>
<div class="a" style="left:1925px;top:1332px;width:913px;height:18px;background:#646464;"></div>
<div class="a" style="left:1918px;top:1332px;width:10px;height:18px;background:#4a8ee6;border-radius:9px 0 0 9px;"></div>
<div class="a" style="left:2836px;top:1332px;width:10px;height:18px;background:#4a8ee6;border-radius:0 9px 9px 0;"></div>
<div class="a" style="left:2199px;top:1332px;width:3px;height:18px;background:#4a8ee6;"></div>
<div class="t" id="t96" style="left:1216.4px;top:1351.5px;font-size:25px;line-height:25px;color:#a6a6a6;transform:scaleX(1.0211);transform-origin:center center;">00075</div>
<div class="a" style="left:1250px;top:1378px;width:2px;height:22px;background:#a0a0a0;"></div>
<div class="t" id="t97" style="left:1368.6px;top:1351.5px;font-size:25px;line-height:25px;color:#a6a6a6;transform:scaleX(1.0211);transform-origin:center center;">00080</div>
<div class="a" style="left:1402px;top:1378px;width:2px;height:22px;background:#a0a0a0;"></div>
<div class="t" id="t98" style="left:1520.8px;top:1351.5px;font-size:25px;line-height:25px;color:#a6a6a6;transform:scaleX(1.0211);transform-origin:center center;">00085</div>
<div class="a" style="left:1555px;top:1378px;width:2px;height:22px;background:#a0a0a0;"></div>
<div class="t" id="t99" style="left:1673.0px;top:1351.5px;font-size:25px;line-height:25px;color:#a6a6a6;transform:scaleX(1.0211);transform-origin:center center;">00090</div>
<div class="a" style="left:1707px;top:1378px;width:2px;height:22px;background:#a0a0a0;"></div>
<div class="t" id="t100" style="left:1825.2px;top:1351.5px;font-size:25px;line-height:25px;color:#a6a6a6;transform:scaleX(1.0211);transform-origin:center center;">00095</div>
<div class="a" style="left:1859px;top:1378px;width:2px;height:22px;background:#a0a0a0;"></div>
<div class="t" id="t101" style="left:1977.4px;top:1351.5px;font-size:25px;line-height:25px;color:#a6a6a6;transform:scaleX(1.0211);transform-origin:center center;">00100</div>
<div class="a" style="left:2011px;top:1378px;width:2px;height:10px;background:#a0a0a0;"></div>
<div class="t" id="t102" style="left:2129.6px;top:1351.5px;font-size:25px;line-height:25px;color:#a6a6a6;transform:scaleX(1.0211);transform-origin:center center;">00105</div>
<div class="a" style="left:2163px;top:1378px;width:2px;height:10px;background:#a0a0a0;"></div>
<div class="t" id="t103" style="left:2282.8px;top:1351.5px;font-size:25px;line-height:25px;color:#a6a6a6;transform:scaleX(1.0492);transform-origin:center center;">00110</div>
<div class="a" style="left:2316px;top:1378px;width:2px;height:10px;background:#a0a0a0;"></div>
<div class="t" id="t104" style="left:2435.0px;top:1351.5px;font-size:25px;line-height:25px;color:#a6a6a6;transform:scaleX(1.0492);transform-origin:center center;">00115</div>
<div class="a" style="left:2468px;top:1378px;width:2px;height:10px;background:#a0a0a0;"></div>
<div class="t" id="t105" style="left:2586.2px;top:1351.5px;font-size:25px;line-height:25px;color:#a6a6a6;transform:scaleX(1.0211);transform-origin:center center;">00120</div>
<div class="a" style="left:2620px;top:1378px;width:2px;height:10px;background:#a0a0a0;"></div>
<div class="t" id="t106" style="left:2738.4px;top:1351.5px;font-size:25px;line-height:25px;color:#a6a6a6;transform:scaleX(1.0211);transform-origin:center center;">00125</div>
<div class="a" style="left:2772px;top:1378px;width:2px;height:10px;background:#a0a0a0;"></div>
<div class="t" id="t107" style="left:2890.6px;top:1351.5px;font-size:25px;line-height:25px;color:#a6a6a6;transform:scaleX(1.0211);transform-origin:center center;">00130</div>
<div class="a" style="left:2924px;top:1378px;width:2px;height:10px;background:#a0a0a0;"></div>
<div class="t" id="t108" style="left:3042.8px;top:1351.5px;font-size:25px;line-height:25px;color:#a6a6a6;transform:scaleX(1.0211);transform-origin:center center;">00135</div>
<div class="a" style="left:3077px;top:1378px;width:2px;height:22px;background:#a0a0a0;"></div>
<div class="t" id="t109" style="left:3195.0px;top:1351.5px;font-size:25px;line-height:25px;color:#a6a6a6;transform:scaleX(1.0211);transform-origin:center center;">00140</div>
<div class="a" style="left:3229px;top:1378px;width:2px;height:22px;background:#a0a0a0;"></div>
<div class="t" id="t110" style="left:3347.2px;top:1351.5px;font-size:25px;line-height:25px;color:#a6a6a6;transform:scaleX(1.0211);transform-origin:center center;">00145</div>
<div class="a" style="left:3381px;top:1378px;width:2px;height:22px;background:#a0a0a0;"></div>
<div class="t" id="t111" style="left:3499.4px;top:1351.5px;font-size:25px;line-height:25px;color:#a6a6a6;transform:scaleX(1.0211);transform-origin:center center;">00150</div>
<div class="a" style="left:3533px;top:1378px;width:2px;height:22px;background:#a0a0a0;"></div>
<div class="t" id="t112" style="left:3651.6px;top:1351.5px;font-size:25px;line-height:25px;color:#a6a6a6;transform:scaleX(1.0211);transform-origin:center center;">00155</div>
<div class="a" style="left:3685px;top:1378px;width:2px;height:22px;background:#a0a0a0;"></div>
<div class="t" id="t113" style="left:3803.8px;top:1351.5px;font-size:25px;line-height:25px;color:#a6a6a6;transform:scaleX(1.0211);transform-origin:center center;">00160</div>
<div class="a" style="left:3838px;top:1378px;width:2px;height:22px;background:#a0a0a0;"></div>
<div class="t" id="t114" style="left:3956.0px;top:1351.5px;font-size:25px;line-height:25px;color:#a6a6a6;transform:scaleX(1.0211);transform-origin:center center;">00165</div>
<div class="a" style="left:3990px;top:1378px;width:2px;height:22px;background:#a0a0a0;"></div>
<div class="a" style="left:2010px;top:1390px;width:984px;height:30px;background:#626262;"></div>
<div class="a" style="left:1998px;top:1390px;width:12px;height:30px;background:#4a8ee6;border-radius:0 0 0 10px;"></div>
<div class="a" style="left:2986px;top:1390px;width:12px;height:30px;background:#4a8ee6;border-radius:0 0 10px 0;"></div>
<div class="a" style="left:2074px;top:1422px;width:28px;height:6px;background:#5dbb46;"></div>
<div class="a" style="left:1210px;top:1430px;width:2894px;height:38px;background:#2b2b2b;"></div>
<div class="a" style="left:1210px;top:1431px;width:2894px;height:33px;background:#6b3a3b;box-shadow:inset 0 1px 0 rgba(255,255,255,0.12), inset 0 -1px 0 rgba(0,0,0,0.25);"></div>
<div class="a" style="left:1210px;top:1466px;width:2894px;height:2px;background:#1f1f1f;"></div>
<div class="a" style="left:1210px;top:1468px;width:2894px;height:38px;background:#2b2b2b;"></div>
<div class="a" style="left:1210px;top:1469px;width:2894px;height:33px;background:#8b854f;box-shadow:inset 0 1px 0 rgba(255,255,255,0.12), inset 0 -1px 0 rgba(0,0,0,0.25);"></div>
<div class="a" style="left:1210px;top:1504px;width:2894px;height:2px;background:#1f1f1f;"></div>
<div class="a" style="left:1210px;top:1506px;width:2894px;height:38px;background:#2b2b2b;"></div>
<div class="a" style="left:1210px;top:1507px;width:2894px;height:33px;background:#4d5586;box-shadow:inset 0 1px 0 rgba(255,255,255,0.12), inset 0 -1px 0 rgba(0,0,0,0.25);"></div>
<div class="a" style="left:1210px;top:1542px;width:2894px;height:2px;background:#1f1f1f;"></div>
<div class="a" style="left:1210px;top:1544px;width:2894px;height:38px;background:#2b2b2b;"></div>
<div class="a" style="left:1210px;top:1545px;width:2894px;height:33px;background:#89757b;box-shadow:inset 0 1px 0 rgba(255,255,255,0.12), inset 0 -1px 0 rgba(0,0,0,0.25);"></div>
<div class="a" style="left:1210px;top:1580px;width:2894px;height:2px;background:#1f1f1f;"></div>
<div class="a" style="left:1210px;top:1582px;width:2894px;height:38px;background:#232323;"></div>
<div class="a" style="left:1210px;top:1618px;width:2894px;height:2px;background:#1a1a1a;"></div>
<div class="a" style="left:1210px;top:1620px;width:2894px;height:38px;background:#2b2b2b;"></div>
<div class="a" style="left:1210px;top:1621px;width:2894px;height:33px;background:#4d5586;box-shadow:inset 0 1px 0 rgba(255,255,255,0.12), inset 0 -1px 0 rgba(0,0,0,0.25);"></div>
<div class="a" style="left:1210px;top:1656px;width:2894px;height:2px;background:#1f1f1f;"></div>
<div class="a" style="left:1210px;top:1658px;width:2894px;height:38px;background:#2b2b2b;"></div>
<div class="a" style="left:1210px;top:1659px;width:2894px;height:33px;background:#9d9278;box-shadow:inset 0 1px 0 rgba(255,255,255,0.12), inset 0 -1px 0 rgba(0,0,0,0.25);"></div>
<div class="a" style="left:1210px;top:1694px;width:2894px;height:2px;background:#1f1f1f;"></div>
<div class="a" style="left:1210px;top:1696px;width:2894px;height:38px;background:#232323;"></div>
<div class="a" style="left:1210px;top:1732px;width:2894px;height:2px;background:#1a1a1a;"></div>
<div class="a" style="left:1210px;top:1734px;width:2894px;height:38px;background:#2b2b2b;"></div>
<div class="a" style="left:1210px;top:1735px;width:2894px;height:33px;background:#6d6456;box-shadow:inset 0 1px 0 rgba(255,255,255,0.12), inset 0 -1px 0 rgba(0,0,0,0.25);"></div>
<div class="a" style="left:1210px;top:1770px;width:2894px;height:2px;background:#1f1f1f;"></div>
<div class="a" style="left:1210px;top:1772px;width:2894px;height:38px;background:#2b2b2b;"></div>
<div class="a" style="left:1210px;top:1773px;width:2894px;height:33px;background:#4d5586;box-shadow:inset 0 1px 0 rgba(255,255,255,0.12), inset 0 -1px 0 rgba(0,0,0,0.25);"></div>
<div class="a" style="left:1210px;top:1808px;width:2894px;height:2px;background:#1f1f1f;"></div>
<div class="a" style="left:1210px;top:1810px;width:2894px;height:355px;background:#262626;"></div>
<div class="a" style="left:2011px;top:1430px;width:973px;height:736px;background:rgba(255,255,255,0.05);"></div>
<div class="a" style="left:2074px;top:1430px;width:28px;height:736px;background:rgba(255,255,255,0.045);"></div>
<div class="a" style="left:2074px;top:1582px;width:28px;height:36px;background:rgba(255,255,255,0.08);"></div>
<div class="a" style="left:2074px;top:1696px;width:28px;height:36px;background:rgba(255,255,255,0.08);"></div>
<div class="a" style="left:2074px;top:1810px;width:28px;height:355px;background:rgba(255,255,255,0.08);"></div>
<div class="a" style="left:1210px;top:1659px;width:2894px;height:33px;background:#9d9278;"></div>
<svg class="a" style="left:1210px;top:1659px;" width="2894" height="33" viewBox="0 0 2894 33"><filter id="grain" x="0" y="0" width="100%" height="100%"><feTurbulence type="fractalNoise" baseFrequency="0.8" numOctaves="1" seed="3"/><feColorMatrix type="matrix" values="0 0 0 0 0.25  0 0 0 0 0.22  0 0 0 0 0.15  0 0 0 -2.2 1.3"/></filter><rect width="2894" height="33" filter="url(#grain)" opacity="0.55"/></svg>
<div class="a" style="left:1210px;top:1659px;width:2894px;height:2px;background:rgba(255,255,255,0.35);"></div>
<svg class="a" style="left:2000.2px;top:1591px;" width="22" height="19" viewBox="0 0 22 19"><path d="M1 1 H21 C15 4 13 7 13 9.5 C13 12 15 15 21 18 H1 C7 15 9 12 9 9.5 C9 7 7 4 1 1 Z" fill="#b8b8b8"/><path d="M1 1 H11 V18 H1 C7 15 9 12 9 9.5 C9 7 7 4 1 1 Z" fill="#8a8a8a"/></svg>
<svg class="a" style="left:2243.7200000000003px;top:1591px;" width="22" height="19" viewBox="0 0 22 19"><path d="M1 1 H21 C15 4 13 7 13 9.5 C13 12 15 15 21 18 H1 C7 15 9 12 9 9.5 C9 7 7 4 1 1 Z" fill="#b8b8b8"/><path d="M1 1 H11 V18 H1 C7 15 9 12 9 9.5 C9 7 7 4 1 1 Z" fill="#8a8a8a"/></svg>
<svg class="a" style="left:2487.24px;top:1591px;" width="22" height="19" viewBox="0 0 22 19"><path d="M1 1 H21 C15 4 13 7 13 9.5 C13 12 15 15 21 18 H1 C7 15 9 12 9 9.5 C9 7 7 4 1 1 Z" fill="#b8b8b8"/><path d="M1 1 H11 V18 H1 C7 15 9 12 9 9.5 C9 7 7 4 1 1 Z" fill="#8a8a8a"/></svg>
<div class="a" style="left:2072px;top:1387px;width:2px;height:778px;background:#4a8ff0;"></div>
<svg class="a" style="left:2060px;top:1356px;" width="26" height="33" viewBox="0 0 26 33"><path d="M1 3 Q1 1 3 1 H23 Q25 1 25 3 V18 L13 32 L1 18 Z" fill="#4a8ee6"/><path d="M9 9 H17 M13 9 V22" stroke="#1a3a66" stroke-width="2"/></svg>
<div class="a" style="left:4104px;top:1266px;width:34px;height:899px;background:#1f1f1f;"></div>
<svg class="a" style="left:4118px;top:1400px;" width="20" height="28" viewBox="0 0 20 28"><path d="M1 1 H19 V19 L10 27 L1 19 Z" fill="#b8b8b8"/></svg>
<div class="a" style="left:4104px;top:1430px;width:34px;height:36px;background:#2a2a2a;"></div>
<svg class="a" style="left:4110px;top:1436px;" width="24" height="22" viewBox="0 0 24 22"><path d="M12 2 L2 12 L12 21" stroke="#b8b8b8" stroke-width="2" fill="none"/><rect x="14" y="4" width="10" height="12" fill="#b8b8b8"/><circle cx="10" cy="16" r="4.5" fill="#2a2a2a" stroke="#b8b8b8" stroke-width="2"/></svg>
<div class="a" style="left:50px;top:2165px;width:1158px;height:2px;background:#0c0c0c;"></div>
<div class="a" style="left:50px;top:2167px;width:4088px;height:33px;background:#1e1e1e;"></div>
<div class="a" style="left:50px;top:2167px;width:1158px;height:33px;background:#262626;"></div>
<div class="a" style="left:1210px;top:2167px;width:2894px;height:33px;background:#1e1e1e;"></div>
<div class="a" style="left:1210px;top:2165px;width:214px;height:35px;background:#262626;box-shadow:inset 0 2px 0 #0c0c0c;"></div>
<div class="a" style="left:57px;top:2169px;width:33px;height:30px;background:#2b2b2b;border-radius:2px;"></div>
<svg class="a" style="left:61px;top:2173px;" width="24" height="24" viewBox="0 0 24 24"><rect x="1.5" y="1.5" width="13" height="13" fill="#2b2b2b" stroke="#4a8ee6" stroke-width="2"/><rect x="5.5" y="5.5" width="13" height="13" fill="#2b2b2b" stroke="#4a8ee6" stroke-width="2"/><rect x="9.5" y="9.5" width="13" height="13" fill="#232323" stroke="#4a8ee6" stroke-width="2"/><circle cx="16" cy="16" r="2" fill="#4a8ee6"/></svg>
<svg class="a" style="left:97px;top:2171px;" width="24" height="24" viewBox="0 0 24 24"><path d="M9.5 9.5 H17 A7.5 7.5 0 0 1 9.5 17 Z" fill="#b2b2b2"/><circle cx="9" cy="9" r="7.6" fill="none" stroke="#b2b2b2" stroke-width="2"/><rect x="9.5" y="9.5" width="13" height="13" fill="none" stroke="#b2b2b2" stroke-width="2"/></svg>
<svg class="a" style="left:132px;top:2171px;" width="25" height="24" viewBox="0 0 25 24"><path d="M6 1 H10 V23 H6 V17 L1 12 L6 7 Z M19 1 H15 V23 H19 V17 L24 12 L19 7 Z" fill="#b2b2b2"/><rect x="10" y="3" width="5" height="18" fill="#6a6a6a"/></svg>
<div class="a" style="left:674px;top:2169px;width:267px;height:30px;background:#1c1c1c;border-radius:6px;box-shadow:0 0 0 1px #2d2d2d;"></div>
<div class="t" id="t115" style="left:717.8px;top:2173.0px;font-size:22px;line-height:22px;color:#a8a8a8;-webkit-text-stroke:0.6px currentColor;transform:scaleX(0.9420);transform-origin:center center;">スイッチ / モード</div>
<svg class="a" style="left:1222px;top:2177px;" width="20" height="10" viewBox="0 0 20 10"><path d="M1 9 L10 1 L19 9 Z" fill="#b2b2b2"/></svg>
<div class="a" style="left:1272px;top:2182px;width:86px;height:3px;background:#3a3a3a;"></div>
<div class="a" style="left:1329px;top:2174px;width:20px;height:20px;background:#262626;border-radius:50%;box-shadow:inset 0 0 0 3px #8a8a8a;"></div>
<svg class="a" style="left:1380px;top:2172px;" width="37" height="16" viewBox="0 0 37 16"><path d="M1 15 L12 4 L17 9 L22 1 L36 15 Z" fill="#b2b2b2"/></svg>
<div class="a" style="left:2090px;top:2169px;width:838px;height:29px;background:#2e2e2e;border-radius:15px;"></div>
<div class="a" style="left:4140px;top:70px;width:2px;height:2132px;background:#3a3a3a;"></div>
</body></html>
